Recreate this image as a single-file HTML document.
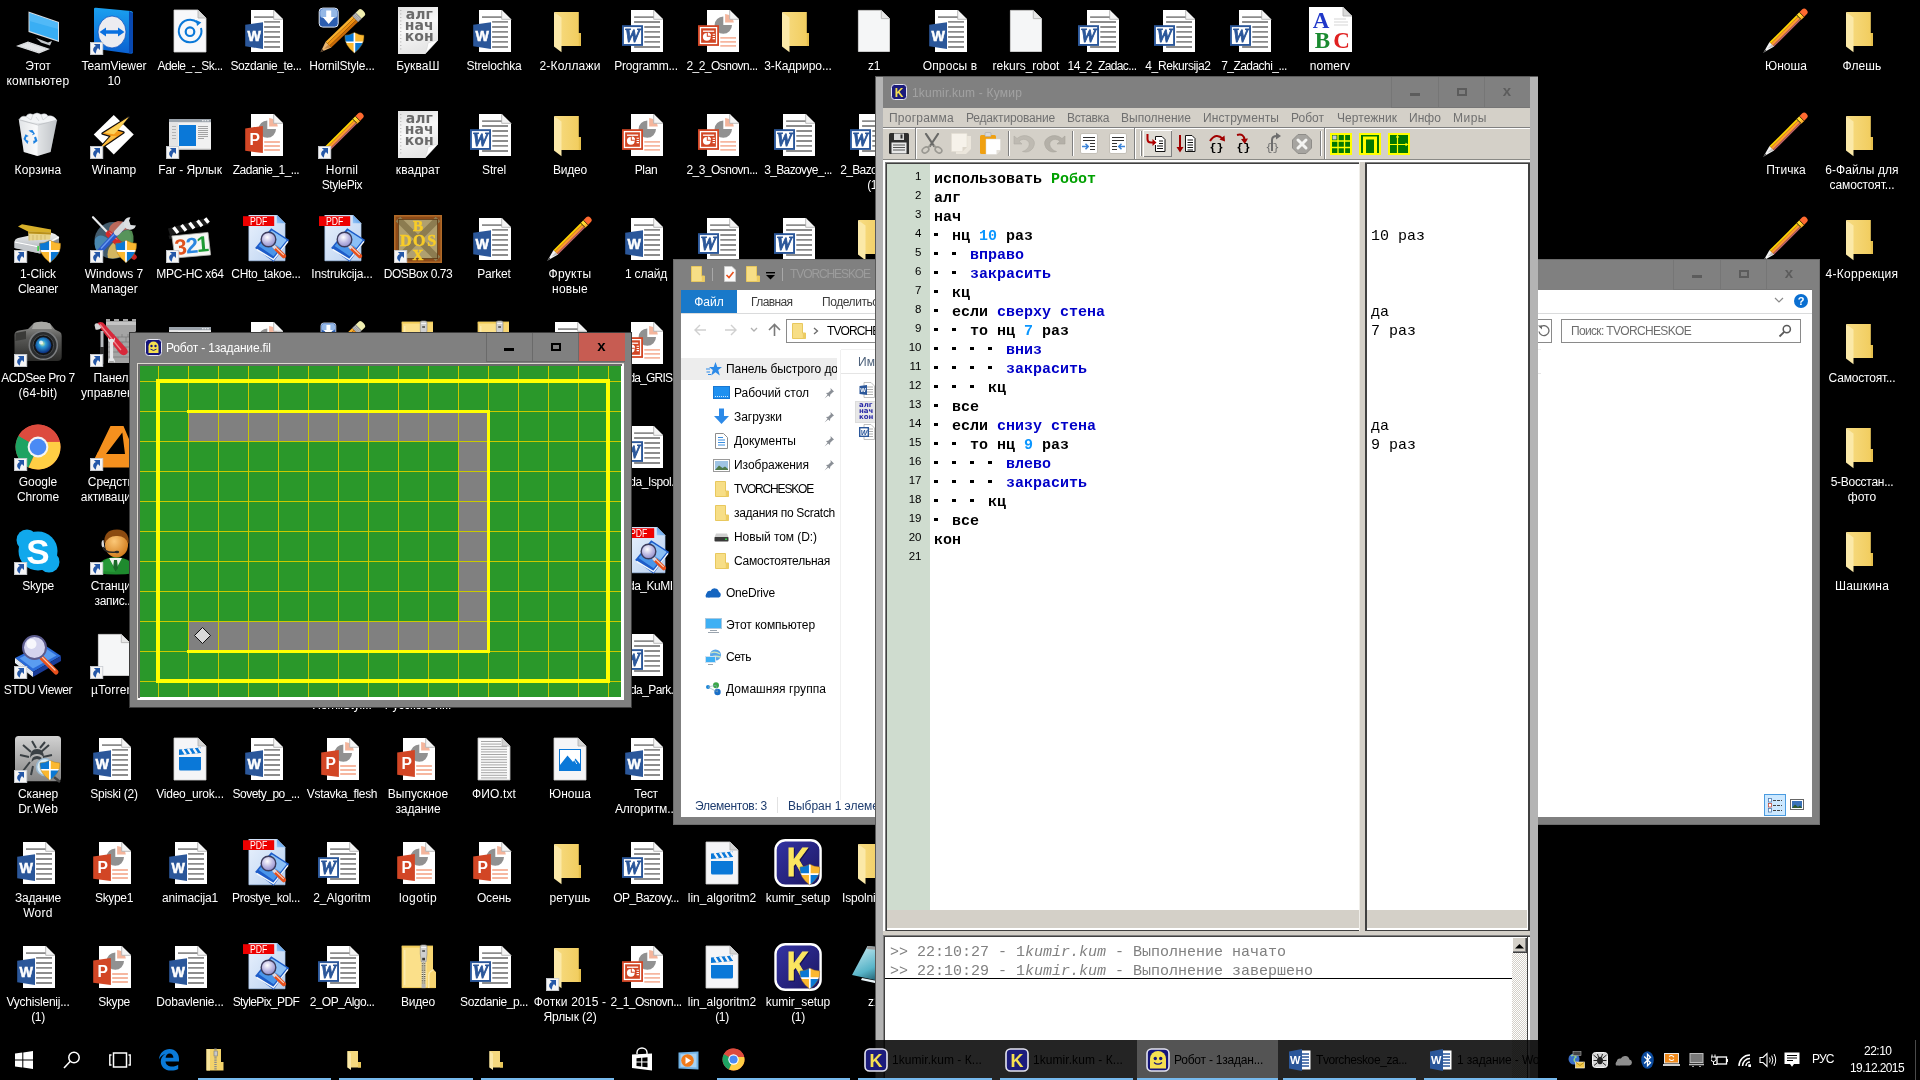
<!DOCTYPE html><html lang="ru"><head><meta charset="utf-8"><title>Desktop</title><style>
html,body{margin:0;padding:0}
body{width:1920px;height:1080px;background:#000;overflow:hidden;position:relative;font-family:"Liberation Sans",sans-serif;font-size:12px}
.lb{position:absolute;width:100px;text-align:center;color:#fff;font-size:12px;line-height:15px;white-space:nowrap;text-shadow:0 1px 1px #000}
svg{display:block;overflow:hidden}
</style></head><body><div id="root" style="position:absolute;left:0;top:0;width:1920px;height:1080px;will-change:transform;overflow:hidden"><div id="desktop"><svg style="position:absolute;left:14px;top:7px" width="48" height="48" viewBox="0 0 48 48"><path d="M14.5 4.5L45 15V35L14.5 25Z" fill="#d8dce0"/><path d="M15.5 6L44 15.8V33.5L15.5 24Z" fill="#39aef4"/><path d="M15.5 6L44 15.8V22L15.5 14Z" fill="#62c0f8" opacity="0.6"/><path d="M22 31L34 35.5L38 34L36 38.5L27 35.5Z" fill="#c4c8cc"/><path d="M2 39L14 34.5L36 42L25 46.5Z" fill="#e4e6e8"/><path d="M4.5 39L14 35.6L33.5 42L25 45.4Z" fill="none" stroke="#b4b8bc" stroke-width="0.6" stroke-dasharray="1.2 0.8"/></svg><div class="lb" style="left:-12px;top:59px;letter-spacing:-0.155px">Этот</div><div class="lb" style="left:-12px;top:74px;letter-spacing:0.288px">компьютер</div><svg style="position:absolute;left:90px;top:7px" width="48" height="48" viewBox="0 0 48 48"><defs><linearGradient id="tv1" x1="0" y1="0" x2="0" y2="1"><stop offset="0" stop-color="#1aa0f0"/><stop offset="1" stop-color="#0a60d0"/></linearGradient></defs><path d="M4 2Q4 0.5 6 0.8L41 4Q43 4.3 43 6V45Q43 47 41 46.7L7 42Q4 41.6 4 39Z" fill="url(#tv1)"/><path d="M39 4L43 6V45L39 46.5Z" fill="#0848b0"/><ellipse cx="22" cy="25" rx="14" ry="16" fill="#ececf0" stroke="#0a50c0" stroke-width="0.8"/><path d="M9.5 25L16 20.5V23.3H28V20.5L34.5 25L28 29.5V26.7H16V29.5Z" fill="#0a70e0"/><rect x="0.4" y="35.4" width="12.4" height="12.4" fill="#f5f5f5" stroke="#c9ccd2" stroke-width="0.8"/><path d="M3.9 37.1H10V43L7.9 40.9Q5.9 42.6 5.7 46.8Q1.4 43.4 4.2 40Q4.9 39.3 5.9 38.9Z" fill="#2558a8"/></svg><div class="lb" style="left:64px;top:59px;letter-spacing:-0.104px">TeamViewer</div><div class="lb" style="left:64px;top:74px;letter-spacing:-0.206px">10</div><svg style="position:absolute;left:166px;top:7px" width="48" height="48" viewBox="0 0 48 48"><path d="M8 3H32L40 11V45H8Z" fill="#f8f8fa" stroke="#d4d4d4" stroke-width="0.8"/><path d="M32 3V11H40Z" fill="#d8d8d8"/><path d="M32 3V11H40" fill="none" stroke="#b4b4b4" stroke-width="0.9"/><path d="M31.5 15.5A11.3 11.3 0 1 0 35 21" stroke="#0a78d8" stroke-width="2" fill="none"/><circle cx="24" cy="24.7" r="4.3" stroke="#0a78d8" stroke-width="2.2" fill="none"/><path d="M30 13L35.3 15.6L31 19Z" fill="#0a78d8"/></svg><div class="lb" style="left:140px;top:59px;letter-spacing:-0.529px">Adele_-_Sk...</div><svg style="position:absolute;left:242px;top:7px" width="48" height="48" viewBox="0 0 48 48"><path d="M9 3H31.7L41 12.3V45H9Z" fill="#fff"/><path d="M31.7 3V12.3H41Z" fill="#f4f4f4"/><path d="M31.7 3V12.3H41" fill="none" stroke="#b4b4b4" stroke-width="0.9"/><path d="M12 10.1H31.6" stroke="#8c8c8c" stroke-width="1.8"/><path d="M22.1 14.9H38M22.1 20H38M22.1 24.9H38M22.1 30H38M22.1 34.9H38M22.1 40H38" stroke="#8c8c8c" stroke-width="1.8"/><path d="M3.2 17.8L21 15.2V41.9L3.2 39.3Z" fill="#2b579a"/><text x="12.25" y="33.8" font-family="Liberation Sans,sans-serif" font-weight="bold" font-size="14.2" fill="#fff" stroke="#fff" stroke-width="0.5" text-anchor="middle">W</text></svg><div class="lb" style="left:216px;top:59px;letter-spacing:-0.401px">Sozdanie_te...</div><svg style="position:absolute;left:318px;top:7px" width="48" height="48" viewBox="0 0 48 48"><g transform="translate(2.5,45.2) rotate(-43.8)"><path d="M0 0L11 -4.1V4.1Z" fill="#eab672"/><path d="M5 0L11 0V4.1Z" fill="#c88a48"/><path d="M0 0L3.4 -1.25V1.25Z" fill="#3a2a20"/><rect x="11" y="-4.1" width="37" height="2.6" fill="#f8b030"/><rect x="11" y="-1.5" width="37" height="3" fill="#f09010"/><rect x="11" y="1.5" width="37" height="2.6" fill="#c86a08"/><rect x="48" y="-4.2" width="5" height="8.4" fill="#c4c4c4"/><path d="M49 -4.2V4.2M50.5 -4.2V4.2M52 -4.2V4.2" stroke="#777" stroke-width="0.6"/><path d="M53 -4.2H57Q59.5 -4.2 59.5 0Q59.5 4.2 57 4.2H53Z" fill="#f0eeb0"/></g><g transform="translate(26.4,25.2) scale(0.9090909090909091,0.9130434782608695)"><defs><clipPath id="sh2"><path d="M11 0.3Q6 3.3 0.6 3.3Q-0.6 14 11 22.7Q22.6 14 21.4 3.3Q16 3.3 11 0.3Z"/></clipPath></defs><g clip-path="url(#sh2)"><rect x="-1" y="-1" width="12" height="12" fill="#0a78d4"/><rect x="11" y="-1" width="12" height="12" fill="#fbb830"/><rect x="-1" y="11" width="12" height="13" fill="#fbb830"/><rect x="11" y="11" width="12" height="13" fill="#0a78d4"/><path d="M11 -1V24M-1 11H23" stroke="#fff" stroke-width="1.8"/></g><path d="M11 0.3Q6 3.3 0.6 3.3Q-0.6 14 11 22.7Q22.6 14 21.4 3.3Q16 3.3 11 0.3Z" fill="none" stroke="#a87818" stroke-width="0.6" opacity="0.8"/></g><g transform="translate(0.7,0.6)"><rect x="0.5" y="0.5" width="19" height="19" rx="3.5" fill="#2c5eb0" stroke="#e4ecf8" stroke-width="1"/><rect x="1.5" y="1.5" width="17" height="9" rx="3" fill="#a8c8f0" opacity="0.85"/><path d="M7.5 3H12.5V9.5H16L10 16.5L4 9.5H7.5Z" fill="#fff"/></g></svg><div class="lb" style="left:292px;top:59px;letter-spacing:-0.175px">HornilStyle...</div><svg style="position:absolute;left:394px;top:7px" width="48" height="48" viewBox="0 0 48 48"><defs><linearGradient id="kg3" x1="0" y1="0" x2="0.3" y2="1"><stop offset="0" stop-color="#e2e2e2"/><stop offset="0.5" stop-color="#f8f8f8"/><stop offset="1" stop-color="#e6e6e6"/></linearGradient></defs><path d="M4 0H44V33L31 47H4Z" fill="url(#kg3)"/><path d="M44 33Q36 35 34 36Q33.5 41 31 47Z" fill="#fff" stroke="#cfcfcf" stroke-width="0.5"/><path d="M6.8 3V45" stroke="#9a9a9a" stroke-width="0.9" stroke-dasharray="0.9 2.6"/><text x="25.2" y="11.6" font-family="DejaVu Sans,sans-serif" font-weight="bold" font-size="14" fill="#6a6a6a" text-anchor="middle">алг</text><text x="25.2" y="22.85" font-family="DejaVu Sans,sans-serif" font-weight="bold" font-size="14" fill="#6a6a6a" text-anchor="middle">нач</text><text x="25.2" y="34.1" font-family="DejaVu Sans,sans-serif" font-weight="bold" font-size="14" fill="#6a6a6a" text-anchor="middle">кон</text></svg><div class="lb" style="left:368px;top:59px;letter-spacing:0.097px">БукваШ</div><svg style="position:absolute;left:470px;top:7px" width="48" height="48" viewBox="0 0 48 48"><path d="M9 3H31.7L41 12.3V45H9Z" fill="#fff"/><path d="M31.7 3V12.3H41Z" fill="#f4f4f4"/><path d="M31.7 3V12.3H41" fill="none" stroke="#b4b4b4" stroke-width="0.9"/><path d="M12 10.1H31.6" stroke="#8c8c8c" stroke-width="1.8"/><path d="M22.1 14.9H38M22.1 20H38M22.1 24.9H38M22.1 30H38M22.1 34.9H38M22.1 40H38" stroke="#8c8c8c" stroke-width="1.8"/><path d="M3.2 17.8L21 15.2V41.9L3.2 39.3Z" fill="#2b579a"/><text x="12.25" y="33.8" font-family="Liberation Sans,sans-serif" font-weight="bold" font-size="14.2" fill="#fff" stroke="#fff" stroke-width="0.5" text-anchor="middle">W</text></svg><div class="lb" style="left:444px;top:59px;letter-spacing:-0.146px">Strelochka</div><svg style="position:absolute;left:546px;top:7px" width="48" height="48" viewBox="0 0 48 48"><defs><linearGradient id="fg4" x1="0" x2="1"><stop offset="0" stop-color="#f7dc84"/><stop offset="1" stop-color="#f1cc5c"/></linearGradient></defs><path d="M8 5H32.8V26H35V39H15V12Z" fill="url(#fg4)"/><path d="M32.8 26H35V39H32.8Z" fill="#e6c04e"/><path d="M8 5L15.5 10.5V45.3L8 39.5Z" fill="#fbe9a8"/></svg><div class="lb" style="left:520px;top:59px;letter-spacing:0.177px">2-Коллажи</div><svg style="position:absolute;left:622px;top:7px" width="48" height="48" viewBox="0 0 48 48"><path d="M9 3H31.7L41 12.3V45H9Z" fill="#fff"/><path d="M31.7 3V12.3H41Z" fill="#f4f4f4"/><path d="M31.7 3V12.3H41" fill="none" stroke="#b4b4b4" stroke-width="0.9"/><path d="M12.1 10.1H31.6M12.1 15H38M22.3 20H38M22.3 24.9H38M22.3 30H38M22.3 34.9H38M12.1 40H38" stroke="#8c8c8c" stroke-width="1.8"/><rect x="0.95" y="19.15" width="19.1" height="18.8" fill="#fff" stroke="#2b579a" stroke-width="1.9"/><text x="10.3" y="34.5" font-family="Liberation Serif,serif" font-weight="bold" font-style="italic" font-size="18" fill="#2b579a" stroke="#2b579a" stroke-width="0.8" text-anchor="middle">W</text></svg><div class="lb" style="left:596px;top:59px;letter-spacing:-0.206px">Programm...</div><svg style="position:absolute;left:698px;top:7px" width="48" height="48" viewBox="0 0 48 48"><path d="M9 3H31.7L41 12.3V45H9Z" fill="#fff"/><path d="M25.3 18.1V9.4A8.7 8.7 0 1 0 34 18.1Z" fill="#919191"/><path d="M27.1 15.6V6.9A8.7 8.7 0 0 1 35.8 15.6Z" fill="#f4b59c"/><path d="M31.7 3V12.3H41Z" fill="#f4f4f4"/><path d="M31.7 3V12.3H41" fill="none" stroke="#b4b4b4" stroke-width="0.9"/><path d="M22.3 30.9H38M22.3 34.9H38M22.3 38.9H38" stroke="#f6b7a0" stroke-width="1.8"/><rect x="0" y="18.2" width="21" height="20.7" fill="#d24625"/><rect x="2.45" y="20.65" width="16.1" height="15.8" fill="none" stroke="#fff" stroke-width="1.3"/><path d="M5 24.2H16.2" stroke="#fff" stroke-width="1.3"/><circle cx="8.8" cy="29.8" r="3.9" fill="#fff"/><path d="M8.8 29.8V25.9A3.9 3.9 0 0 1 12.7 29.8Z" fill="#d24625"/><path d="M9.8 28.8V25.6A3.5 3.5 0 0 1 13.1 28.8Z" fill="#fff"/><path d="M14.6 27.3H17M14.6 29.5H17M14.6 31.6H17" stroke="#fff" stroke-width="1.1"/></svg><div class="lb" style="left:672px;top:59px;letter-spacing:-0.527px">2_2_Osnovn...</div><svg style="position:absolute;left:774px;top:7px" width="48" height="48" viewBox="0 0 48 48"><defs><linearGradient id="fg5" x1="0" x2="1"><stop offset="0" stop-color="#f7dc84"/><stop offset="1" stop-color="#f1cc5c"/></linearGradient></defs><path d="M8 5H32.8V26H35V39H15V12Z" fill="url(#fg5)"/><path d="M32.8 26H35V39H32.8Z" fill="#e6c04e"/><path d="M8 5L15.5 10.5V45.3L8 39.5Z" fill="#fbe9a8"/></svg><div class="lb" style="left:748px;top:59px;letter-spacing:-0.041px">3-Кадриро...</div><svg style="position:absolute;left:850px;top:7px" width="48" height="48" viewBox="0 0 48 48"><path d="M8.4 3.4H31.3L39.5 11.6V44.5H8.4Z" fill="#f5f6f7" stroke="#dedede" stroke-width="0.8"/><path d="M31.3 3.4V11.6H39.5Z" fill="#e6e6e6"/><path d="M31.3 3.4V11.6H39.5" fill="none" stroke="#b4b4b4" stroke-width="0.9"/></svg><div class="lb" style="left:824px;top:59px;letter-spacing:-0.385px">z1</div><svg style="position:absolute;left:926px;top:7px" width="48" height="48" viewBox="0 0 48 48"><path d="M9 3H31.7L41 12.3V45H9Z" fill="#fff"/><path d="M31.7 3V12.3H41Z" fill="#f4f4f4"/><path d="M31.7 3V12.3H41" fill="none" stroke="#b4b4b4" stroke-width="0.9"/><path d="M12 10.1H31.6" stroke="#8c8c8c" stroke-width="1.8"/><path d="M22.1 14.9H38M22.1 20H38M22.1 24.9H38M22.1 30H38M22.1 34.9H38M22.1 40H38" stroke="#8c8c8c" stroke-width="1.8"/><path d="M3.2 17.8L21 15.2V41.9L3.2 39.3Z" fill="#2b579a"/><text x="12.25" y="33.8" font-family="Liberation Sans,sans-serif" font-weight="bold" font-size="14.2" fill="#fff" stroke="#fff" stroke-width="0.5" text-anchor="middle">W</text></svg><div class="lb" style="left:900px;top:59px;letter-spacing:0.098px">Опросы в</div><div class="lb" style="left:900px;top:74px;letter-spacing:-0.027px">Google</div><svg style="position:absolute;left:1002px;top:7px" width="48" height="48" viewBox="0 0 48 48"><path d="M8.4 3.4H31.3L39.5 11.6V44.5H8.4Z" fill="#f5f6f7" stroke="#dedede" stroke-width="0.8"/><path d="M31.3 3.4V11.6H39.5Z" fill="#e6e6e6"/><path d="M31.3 3.4V11.6H39.5" fill="none" stroke="#b4b4b4" stroke-width="0.9"/></svg><div class="lb" style="left:976px;top:59px;letter-spacing:-0.046px">rekurs_robot</div><svg style="position:absolute;left:1078px;top:7px" width="48" height="48" viewBox="0 0 48 48"><path d="M9 3H31.7L41 12.3V45H9Z" fill="#fff"/><path d="M31.7 3V12.3H41Z" fill="#f4f4f4"/><path d="M31.7 3V12.3H41" fill="none" stroke="#b4b4b4" stroke-width="0.9"/><path d="M12.1 10.1H31.6M12.1 15H38M22.3 20H38M22.3 24.9H38M22.3 30H38M22.3 34.9H38M12.1 40H38" stroke="#8c8c8c" stroke-width="1.8"/><rect x="0.95" y="19.15" width="19.1" height="18.8" fill="#fff" stroke="#2b579a" stroke-width="1.9"/><text x="10.3" y="34.5" font-family="Liberation Serif,serif" font-weight="bold" font-style="italic" font-size="18" fill="#2b579a" stroke="#2b579a" stroke-width="0.8" text-anchor="middle">W</text></svg><div class="lb" style="left:1052px;top:59px;letter-spacing:-0.607px">14_2_Zadac...</div><svg style="position:absolute;left:1154px;top:7px" width="48" height="48" viewBox="0 0 48 48"><path d="M9 3H31.7L41 12.3V45H9Z" fill="#fff"/><path d="M31.7 3V12.3H41Z" fill="#f4f4f4"/><path d="M31.7 3V12.3H41" fill="none" stroke="#b4b4b4" stroke-width="0.9"/><path d="M12.1 10.1H31.6M12.1 15H38M22.3 20H38M22.3 24.9H38M22.3 30H38M22.3 34.9H38M12.1 40H38" stroke="#8c8c8c" stroke-width="1.8"/><rect x="0.95" y="19.15" width="19.1" height="18.8" fill="#fff" stroke="#2b579a" stroke-width="1.9"/><text x="10.3" y="34.5" font-family="Liberation Serif,serif" font-weight="bold" font-style="italic" font-size="18" fill="#2b579a" stroke="#2b579a" stroke-width="0.8" text-anchor="middle">W</text></svg><div class="lb" style="left:1128px;top:59px;letter-spacing:-0.394px">4_Rekursija2</div><div class="lb" style="left:1128px;top:74px;letter-spacing:-0.317px">(1)</div><svg style="position:absolute;left:1230px;top:7px" width="48" height="48" viewBox="0 0 48 48"><path d="M9 3H31.7L41 12.3V45H9Z" fill="#fff"/><path d="M31.7 3V12.3H41Z" fill="#f4f4f4"/><path d="M31.7 3V12.3H41" fill="none" stroke="#b4b4b4" stroke-width="0.9"/><path d="M12.1 10.1H31.6M12.1 15H38M22.3 20H38M22.3 24.9H38M22.3 30H38M22.3 34.9H38M12.1 40H38" stroke="#8c8c8c" stroke-width="1.8"/><rect x="0.95" y="19.15" width="19.1" height="18.8" fill="#fff" stroke="#2b579a" stroke-width="1.9"/><text x="10.3" y="34.5" font-family="Liberation Serif,serif" font-weight="bold" font-style="italic" font-size="18" fill="#2b579a" stroke="#2b579a" stroke-width="0.8" text-anchor="middle">W</text></svg><div class="lb" style="left:1204px;top:59px;letter-spacing:-0.548px">7_Zadachi_...</div><svg style="position:absolute;left:1306px;top:7px" width="48" height="48" viewBox="0 0 48 48"><path d="M3 0H37L46 9V45H3Z" fill="#fff"/><path d="M37 0V9H46Z" fill="#d8d8d8"/><path d="M37 0V9H46" fill="none" stroke="#b4b4b4" stroke-width="0.9"/><path d="M28 12H40M28 15H42M28 18H42" stroke="#d0d0d0" stroke-width="0.9"/><text x="15" y="20.7" font-family="Liberation Serif,serif" font-weight="bold" font-size="23" fill="#2038c8" text-anchor="middle">A</text><text x="16.5" y="41" font-family="Liberation Serif,serif" font-weight="bold" font-size="23" fill="#1a8a30" text-anchor="middle">B</text><text x="35.5" y="41" font-family="Liberation Serif,serif" font-weight="bold" font-size="23" fill="#e02020" text-anchor="middle">C</text></svg><div class="lb" style="left:1280px;top:59px;letter-spacing:0.057px">nomerv</div><svg style="position:absolute;left:1762px;top:7px" width="48" height="48" viewBox="0 0 48 48"><g transform="translate(1.3,45.8) rotate(-44.9)"><path d="M0 0L12 -3.2V3.2Z" fill="#f2f2f2"/><path d="M6 0L12 0V3.2Z" fill="#c4c4c4"/><path d="M0 0L3.6 -0.95V0.95Z" fill="#4a4a4a"/><rect x="12" y="-3.2" width="38" height="2" fill="#ffd400"/><rect x="12" y="-1.2" width="38" height="2.8" fill="#ff9a30"/><rect x="12" y="1.6" width="38" height="1.6" fill="#c8686a"/><rect x="50" y="-3.3" width="4.5" height="6.6" fill="#ffdc30"/><rect x="50" y="0.8" width="4.5" height="2.5" fill="#ffb030"/><path d="M50.4 -3.3V3.3M54.1 -3.3V3.3" stroke="#3a2a00" stroke-width="0.8"/><path d="M54.5 -3.3H58.3Q61 -3.3 61 0Q61 3.3 58.3 3.3H54.5Z" fill="#ff6a30"/></g></svg><div class="lb" style="left:1736px;top:59px;letter-spacing:0.067px">Юноша</div><svg style="position:absolute;left:1838px;top:7px" width="48" height="48" viewBox="0 0 48 48"><defs><linearGradient id="fg6" x1="0" x2="1"><stop offset="0" stop-color="#f7dc84"/><stop offset="1" stop-color="#f1cc5c"/></linearGradient></defs><path d="M8 5H32.8V26H35V39H15V12Z" fill="url(#fg6)"/><path d="M32.8 26H35V39H32.8Z" fill="#e6c04e"/><path d="M8 5L15.5 10.5V45.3L8 39.5Z" fill="#fbe9a8"/></svg><div class="lb" style="left:1812px;top:59px;letter-spacing:0.127px">Флешь</div><svg style="position:absolute;left:14px;top:111px" width="48" height="48" viewBox="0 0 48 48"><defs><linearGradient id="rb7" x1="0" x2="1"><stop offset="0" stop-color="#d2d6da"/><stop offset="0.45" stop-color="#f6f7f8"/><stop offset="1" stop-color="#c6cace"/></linearGradient></defs><path d="M4.8 8.5L43 9.2L36.6 41L23.5 45L9.8 41Z" fill="url(#rb7)"/><path d="M4.8 8.5L24 14L23.5 45L9.8 41Z" fill="#fff" opacity="0.35"/><path d="M24 14L43 9.2L36.6 41L23.5 45Z" fill="#9aa0a6" opacity="0.18"/><path d="M5 9Q7 4 12 5.5Q14 1.5 19 3.5Q23 0.5 27 3.5Q32 1.5 34 5Q40 4 42.8 9.4Q24 16 5 9Z" fill="#f2f4f6" stroke="#cdd1d5" stroke-width="0.5"/><path d="M12 5.5L17 9L19 3.5M27 3.5L29 9L34 5M22 6L25 10" stroke="#c4c8cc" stroke-width="0.6" fill="none"/><path d="M4.8 8.5L24 14L43 9.2" stroke="#b4b8bc" stroke-width="0.7" fill="none"/><g transform="translate(16,26.5)" fill="#1e82e0"><path d="M-1.5 -7L2.5 -7.5L5 -3.5L2 -2.2L3.2 -4.2L0.8 -5.2Z"/><path d="M6 -1L7.5 3.5L3.5 6.5L3.2 3.3L5 3L4 0Z"/><path d="M-6.5 1.5L-4.5 -3.2L-1.3 -1.5L-3.8 -0.2L-4.2 2L-1.5 3.5L-2.5 6.5Z"/></g></svg><div class="lb" style="left:-12px;top:163px;letter-spacing:0.17px">Корзина</div><svg style="position:absolute;left:90px;top:111px" width="48" height="48" viewBox="0 0 48 48"><path d="M23.75 4L43.75 23.5L23.75 43.6L3.75 23.6Z" fill="#fff"/><path d="M38.8 6.1L12.5 22.5L21 25L8.75 38.6L33.5 21.5L25.5 19Z" fill="#f5a21a" stroke="#111" stroke-width="2.4" stroke-linejoin="round"/><path d="M38.8 6.1L12.5 22.5L21 25L8.75 38.6L33.5 21.5L25.5 19Z" fill="#f59a18"/><path d="M38.8 6.1L14.5 22L24 23.2L30 17Z" fill="#fdd25a"/><path d="M21 25L8.75 38.6L27 25Z" fill="#fbc044"/><rect x="0.4" y="35.4" width="12.4" height="12.4" fill="#f5f5f5" stroke="#c9ccd2" stroke-width="0.8"/><path d="M3.9 37.1H10V43L7.9 40.9Q5.9 42.6 5.7 46.8Q1.4 43.4 4.2 40Q4.9 39.3 5.9 38.9Z" fill="#2558a8"/></svg><div class="lb" style="left:64px;top:163px;letter-spacing:0.065px">Winamp</div><svg style="position:absolute;left:166px;top:111px" width="48" height="48" viewBox="0 0 48 48"><rect x="3" y="8" width="42" height="30.6" fill="#f1f1f1"/><rect x="3" y="8" width="42" height="3.2" fill="#9aa2aa"/><path d="M36 9.6H43" stroke="#e4e6e8" stroke-width="1.2" stroke-dasharray="1.6 1"/><rect x="3" y="11.2" width="9" height="27.4" fill="#e4e4e4"/><rect x="13" y="14" width="17" height="21" fill="#0a78d8"/><path d="M3.5 38.1H44.5" stroke="#c8c8c8" stroke-width="1"/><path d="M32 15.5H42M32 17.5H42M32 19.5H42M32 21.5H42M32 23.5H42M32 25.5H42M32 27.5H38" stroke="#9a9a9a" stroke-width="0.9"/><path d="M6 15.5H10M6 18.5H10M6 21.5H10M6 24.5H10M6 27.5H10" stroke="#b4b4b4" stroke-width="1"/><rect x="0.4" y="35.4" width="12.4" height="12.4" fill="#f5f5f5" stroke="#c9ccd2" stroke-width="0.8"/><path d="M3.9 37.1H10V43L7.9 40.9Q5.9 42.6 5.7 46.8Q1.4 43.4 4.2 40Q4.9 39.3 5.9 38.9Z" fill="#2558a8"/></svg><div class="lb" style="left:140px;top:163px;letter-spacing:-0.073px">Far - Ярлык</div><svg style="position:absolute;left:242px;top:111px" width="48" height="48" viewBox="0 0 48 48"><path d="M9 3H31.7L41 12.3V45H9Z" fill="#fff"/><path d="M25.3 18.1V9.4A8.7 8.7 0 1 0 34 18.1Z" fill="#919191"/><path d="M27.1 15.6V6.9A8.7 8.7 0 0 1 35.8 15.6Z" fill="#f4b59c"/><path d="M31.7 3V12.3H41Z" fill="#f4f4f4"/><path d="M31.7 3V12.3H41" fill="none" stroke="#b4b4b4" stroke-width="0.9"/><path d="M22.2 31H37.9M22.2 35H37.9M22.2 39H37.9" stroke="#f6b7a0" stroke-width="1.8"/><path d="M3.2 17.4L20.9 14.9V42.1L3.2 39.8Z" fill="#d24625"/><text x="12.6" y="33.9" font-family="Liberation Sans,sans-serif" font-weight="bold" font-size="15.6" fill="#fff" text-anchor="middle">P</text></svg><div class="lb" style="left:216px;top:163px;letter-spacing:-0.543px">Zadanie_1_...</div><svg style="position:absolute;left:318px;top:111px" width="48" height="48" viewBox="0 0 48 48"><g transform="translate(1.3,45.8) rotate(-44.9)"><path d="M0 0L12 -3.2V3.2Z" fill="#f2f2f2"/><path d="M6 0L12 0V3.2Z" fill="#c4c4c4"/><path d="M0 0L3.6 -0.95V0.95Z" fill="#4a4a4a"/><rect x="12" y="-3.2" width="38" height="2" fill="#ffd400"/><rect x="12" y="-1.2" width="38" height="2.8" fill="#ff9a30"/><rect x="12" y="1.6" width="38" height="1.6" fill="#c8686a"/><rect x="50" y="-3.3" width="4.5" height="6.6" fill="#ffdc30"/><rect x="50" y="0.8" width="4.5" height="2.5" fill="#ffb030"/><path d="M50.4 -3.3V3.3M54.1 -3.3V3.3" stroke="#3a2a00" stroke-width="0.8"/><path d="M54.5 -3.3H58.3Q61 -3.3 61 0Q61 3.3 58.3 3.3H54.5Z" fill="#ff6a30"/></g><rect x="0.4" y="35.4" width="12.4" height="12.4" fill="#f5f5f5" stroke="#c9ccd2" stroke-width="0.8"/><path d="M3.9 37.1H10V43L7.9 40.9Q5.9 42.6 5.7 46.8Q1.4 43.4 4.2 40Q4.9 39.3 5.9 38.9Z" fill="#2558a8"/></svg><div class="lb" style="left:292px;top:163px;letter-spacing:0.164px">Hornil</div><div class="lb" style="left:292px;top:178px;letter-spacing:-0.348px">StylePix</div><svg style="position:absolute;left:394px;top:111px" width="48" height="48" viewBox="0 0 48 48"><defs><linearGradient id="kg8" x1="0" y1="0" x2="0.3" y2="1"><stop offset="0" stop-color="#e2e2e2"/><stop offset="0.5" stop-color="#f8f8f8"/><stop offset="1" stop-color="#e6e6e6"/></linearGradient></defs><path d="M4 0H44V33L31 47H4Z" fill="url(#kg8)"/><path d="M44 33Q36 35 34 36Q33.5 41 31 47Z" fill="#fff" stroke="#cfcfcf" stroke-width="0.5"/><path d="M6.8 3V45" stroke="#9a9a9a" stroke-width="0.9" stroke-dasharray="0.9 2.6"/><text x="25.2" y="11.6" font-family="DejaVu Sans,sans-serif" font-weight="bold" font-size="14" fill="#6a6a6a" text-anchor="middle">алг</text><text x="25.2" y="22.85" font-family="DejaVu Sans,sans-serif" font-weight="bold" font-size="14" fill="#6a6a6a" text-anchor="middle">нач</text><text x="25.2" y="34.1" font-family="DejaVu Sans,sans-serif" font-weight="bold" font-size="14" fill="#6a6a6a" text-anchor="middle">кон</text></svg><div class="lb" style="left:368px;top:163px;letter-spacing:0.095px">квадрат</div><svg style="position:absolute;left:470px;top:111px" width="48" height="48" viewBox="0 0 48 48"><path d="M9 3H31.7L41 12.3V45H9Z" fill="#fff"/><path d="M31.7 3V12.3H41Z" fill="#f4f4f4"/><path d="M31.7 3V12.3H41" fill="none" stroke="#b4b4b4" stroke-width="0.9"/><path d="M12.1 10.1H31.6M12.1 15H38M22.3 20H38M22.3 24.9H38M22.3 30H38M22.3 34.9H38M12.1 40H38" stroke="#8c8c8c" stroke-width="1.8"/><rect x="0.95" y="19.15" width="19.1" height="18.8" fill="#fff" stroke="#2b579a" stroke-width="1.9"/><text x="10.3" y="34.5" font-family="Liberation Serif,serif" font-weight="bold" font-style="italic" font-size="18" fill="#2b579a" stroke="#2b579a" stroke-width="0.8" text-anchor="middle">W</text></svg><div class="lb" style="left:444px;top:163px;letter-spacing:-0.176px">Strel</div><svg style="position:absolute;left:546px;top:111px" width="48" height="48" viewBox="0 0 48 48"><defs><linearGradient id="fg9" x1="0" x2="1"><stop offset="0" stop-color="#f7dc84"/><stop offset="1" stop-color="#f1cc5c"/></linearGradient></defs><path d="M8 5H32.8V26H35V39H15V12Z" fill="url(#fg9)"/><path d="M32.8 26H35V39H32.8Z" fill="#e6c04e"/><path d="M8 5L15.5 10.5V45.3L8 39.5Z" fill="#fbe9a8"/></svg><div class="lb" style="left:520px;top:163px;letter-spacing:-0.167px">Видео</div><svg style="position:absolute;left:622px;top:111px" width="48" height="48" viewBox="0 0 48 48"><path d="M9 3H31.7L41 12.3V45H9Z" fill="#fff"/><path d="M25.3 18.1V9.4A8.7 8.7 0 1 0 34 18.1Z" fill="#919191"/><path d="M27.1 15.6V6.9A8.7 8.7 0 0 1 35.8 15.6Z" fill="#f4b59c"/><path d="M31.7 3V12.3H41Z" fill="#f4f4f4"/><path d="M31.7 3V12.3H41" fill="none" stroke="#b4b4b4" stroke-width="0.9"/><path d="M22.3 30.9H38M22.3 34.9H38M22.3 38.9H38" stroke="#f6b7a0" stroke-width="1.8"/><rect x="0" y="18.2" width="21" height="20.7" fill="#d24625"/><rect x="2.45" y="20.65" width="16.1" height="15.8" fill="none" stroke="#fff" stroke-width="1.3"/><path d="M5 24.2H16.2" stroke="#fff" stroke-width="1.3"/><circle cx="8.8" cy="29.8" r="3.9" fill="#fff"/><path d="M8.8 29.8V25.9A3.9 3.9 0 0 1 12.7 29.8Z" fill="#d24625"/><path d="M9.8 28.8V25.6A3.5 3.5 0 0 1 13.1 28.8Z" fill="#fff"/><path d="M14.6 27.3H17M14.6 29.5H17M14.6 31.6H17" stroke="#fff" stroke-width="1.1"/></svg><div class="lb" style="left:596px;top:163px;letter-spacing:-0.373px">Plan</div><svg style="position:absolute;left:698px;top:111px" width="48" height="48" viewBox="0 0 48 48"><path d="M9 3H31.7L41 12.3V45H9Z" fill="#fff"/><path d="M25.3 18.1V9.4A8.7 8.7 0 1 0 34 18.1Z" fill="#919191"/><path d="M27.1 15.6V6.9A8.7 8.7 0 0 1 35.8 15.6Z" fill="#f4b59c"/><path d="M31.7 3V12.3H41Z" fill="#f4f4f4"/><path d="M31.7 3V12.3H41" fill="none" stroke="#b4b4b4" stroke-width="0.9"/><path d="M22.3 30.9H38M22.3 34.9H38M22.3 38.9H38" stroke="#f6b7a0" stroke-width="1.8"/><rect x="0" y="18.2" width="21" height="20.7" fill="#d24625"/><rect x="2.45" y="20.65" width="16.1" height="15.8" fill="none" stroke="#fff" stroke-width="1.3"/><path d="M5 24.2H16.2" stroke="#fff" stroke-width="1.3"/><circle cx="8.8" cy="29.8" r="3.9" fill="#fff"/><path d="M8.8 29.8V25.9A3.9 3.9 0 0 1 12.7 29.8Z" fill="#d24625"/><path d="M9.8 28.8V25.6A3.5 3.5 0 0 1 13.1 28.8Z" fill="#fff"/><path d="M14.6 27.3H17M14.6 29.5H17M14.6 31.6H17" stroke="#fff" stroke-width="1.1"/></svg><div class="lb" style="left:672px;top:163px;letter-spacing:-0.527px">2_3_Osnovn...</div><svg style="position:absolute;left:774px;top:111px" width="48" height="48" viewBox="0 0 48 48"><path d="M9 3H31.7L41 12.3V45H9Z" fill="#fff"/><path d="M31.7 3V12.3H41Z" fill="#f4f4f4"/><path d="M31.7 3V12.3H41" fill="none" stroke="#b4b4b4" stroke-width="0.9"/><path d="M12.1 10.1H31.6M12.1 15H38M22.3 20H38M22.3 24.9H38M22.3 30H38M22.3 34.9H38M12.1 40H38" stroke="#8c8c8c" stroke-width="1.8"/><rect x="0.95" y="19.15" width="19.1" height="18.8" fill="#fff" stroke="#2b579a" stroke-width="1.9"/><text x="10.3" y="34.5" font-family="Liberation Serif,serif" font-weight="bold" font-style="italic" font-size="18" fill="#2b579a" stroke="#2b579a" stroke-width="0.8" text-anchor="middle">W</text></svg><div class="lb" style="left:748px;top:163px;letter-spacing:-0.656px">3_Bazovye_...</div><svg style="position:absolute;left:850px;top:111px" width="48" height="48" viewBox="0 0 48 48"><path d="M9 3H31.7L41 12.3V45H9Z" fill="#fff"/><path d="M31.7 3V12.3H41Z" fill="#f4f4f4"/><path d="M31.7 3V12.3H41" fill="none" stroke="#b4b4b4" stroke-width="0.9"/><path d="M12.1 10.1H31.6M12.1 15H38M22.3 20H38M22.3 24.9H38M22.3 30H38M22.3 34.9H38M12.1 40H38" stroke="#8c8c8c" stroke-width="1.8"/><rect x="0.95" y="19.15" width="19.1" height="18.8" fill="#fff" stroke="#2b579a" stroke-width="1.9"/><text x="10.3" y="34.5" font-family="Liberation Serif,serif" font-weight="bold" font-style="italic" font-size="18" fill="#2b579a" stroke="#2b579a" stroke-width="0.8" text-anchor="middle">W</text></svg><div class="lb" style="left:824px;top:163px;letter-spacing:-0.656px">2_Bazovye_...</div><div class="lb" style="left:824px;top:178px;letter-spacing:-0.317px">(1)</div><svg style="position:absolute;left:1762px;top:111px" width="48" height="48" viewBox="0 0 48 48"><g transform="translate(1.3,45.8) rotate(-44.9)"><path d="M0 0L12 -3.2V3.2Z" fill="#f2f2f2"/><path d="M6 0L12 0V3.2Z" fill="#c4c4c4"/><path d="M0 0L3.6 -0.95V0.95Z" fill="#4a4a4a"/><rect x="12" y="-3.2" width="38" height="2" fill="#ffd400"/><rect x="12" y="-1.2" width="38" height="2.8" fill="#ff9a30"/><rect x="12" y="1.6" width="38" height="1.6" fill="#c8686a"/><rect x="50" y="-3.3" width="4.5" height="6.6" fill="#ffdc30"/><rect x="50" y="0.8" width="4.5" height="2.5" fill="#ffb030"/><path d="M50.4 -3.3V3.3M54.1 -3.3V3.3" stroke="#3a2a00" stroke-width="0.8"/><path d="M54.5 -3.3H58.3Q61 -3.3 61 0Q61 3.3 58.3 3.3H54.5Z" fill="#ff6a30"/></g></svg><div class="lb" style="left:1736px;top:163px;letter-spacing:0.074px">Птичка</div><svg style="position:absolute;left:1838px;top:111px" width="48" height="48" viewBox="0 0 48 48"><defs><linearGradient id="fg10" x1="0" x2="1"><stop offset="0" stop-color="#f7dc84"/><stop offset="1" stop-color="#f1cc5c"/></linearGradient></defs><path d="M8 5H32.8V26H35V39H15V12Z" fill="url(#fg10)"/><path d="M32.8 26H35V39H32.8Z" fill="#e6c04e"/><path d="M8 5L15.5 10.5V45.3L8 39.5Z" fill="#fbe9a8"/></svg><div class="lb" style="left:1812px;top:163px;letter-spacing:0.065px">6-Файлы для</div><div class="lb" style="left:1812px;top:178px;letter-spacing:-0.119px">самостоят...</div><svg style="position:absolute;left:14px;top:215px" width="48" height="48" viewBox="0 0 48 48"><defs><linearGradient id="cl11" x1="0" y1="0" x2="0" y2="1"><stop offset="0" stop-color="#f4f5f6"/><stop offset="1" stop-color="#9ea4aa"/></linearGradient></defs><path d="M0.5 27Q0.5 24 4 23L30 17.5Q36 16.5 41 19L45 22V30L26 38.6L0.5 33Z" fill="url(#cl11)"/><path d="M0.5 27L26 32L45 22" stroke="#fff" stroke-width="1.2" fill="none"/><path d="M0.5 28V33L26 38.6V33Z" fill="#c4c8cc"/><path d="M26 33L45 23.5V30L26 38.6Z" fill="#8a9096"/><rect x="23.3" y="31" width="1.6" height="5" fill="#38d048"/><path d="M4 11.5L8 9.3L37 14.5V18L15 17Z" fill="#d8b02a"/><path d="M14 16.5L37 17.5L36 24.5L15 25.5Z" fill="#e8d48a"/><path d="M14 16.5L37 17.5V19.5L14 18.5Z" fill="#b8901a"/><path d="M15 20V25.5M19 20V25.3M23 20V25.1M27 20V24.9M31 20V24.7" stroke="#c8b060" stroke-width="0.7"/><g transform="translate(25,25) scale(1.0,1.0)"><defs><clipPath id="sh12"><path d="M11 0.3Q6 3.3 0.6 3.3Q-0.6 14 11 22.7Q22.6 14 21.4 3.3Q16 3.3 11 0.3Z"/></clipPath></defs><g clip-path="url(#sh12)"><rect x="-1" y="-1" width="12" height="12" fill="#0a78d4"/><rect x="11" y="-1" width="12" height="12" fill="#fbb830"/><rect x="-1" y="11" width="12" height="13" fill="#fbb830"/><rect x="11" y="11" width="12" height="13" fill="#0a78d4"/><path d="M11 -1V24M-1 11H23" stroke="#fff" stroke-width="1.8"/></g><path d="M11 0.3Q6 3.3 0.6 3.3Q-0.6 14 11 22.7Q22.6 14 21.4 3.3Q16 3.3 11 0.3Z" fill="none" stroke="#a87818" stroke-width="0.6" opacity="0.8"/></g><rect x="0.4" y="35.4" width="12.4" height="12.4" fill="#f5f5f5" stroke="#c9ccd2" stroke-width="0.8"/><path d="M3.9 37.1H10V43L7.9 40.9Q5.9 42.6 5.7 46.8Q1.4 43.4 4.2 40Q4.9 39.3 5.9 38.9Z" fill="#2558a8"/></svg><div class="lb" style="left:-12px;top:267px;letter-spacing:-0.094px">1-Click</div><div class="lb" style="left:-12px;top:282px;letter-spacing:-0.295px">Cleaner</div><svg style="position:absolute;left:90px;top:215px" width="48" height="48" viewBox="0 0 48 48"><circle cx="23" cy="25.5" r="18.5" fill="#7aa6c4" opacity="0.55"/><path d="M22 24Q14 10 28 6Q38 6 41 14Q30 14 22 24Z" fill="#c86a5a" opacity="0.9"/><path d="M24 25Q34 12 42 16Q46 26 40 34Q34 24 24 25Z" fill="#5a9a5a" opacity="0.9"/><path d="M21 26Q10 16 5 24Q3 34 10 40Q12 28 21 26Z" fill="#4a8ab4" opacity="0.95"/><path d="M23 28Q34 28 38 37Q30 45 18 43Q16 34 23 28Z" fill="#e4c060" opacity="0.9"/><path d="M3 2.2L20 20" stroke="#e8eaec" stroke-width="2.2" stroke-linecap="round"/><path d="M19 19L30 30" stroke="#d42a2a" stroke-width="6.5" stroke-linecap="round"/><path d="M30 30L44 42" stroke="#c42222" stroke-width="5.5" stroke-linecap="round"/><path d="M20 17.5L24 21.5M23 20.5L27 24.5" stroke="#f4b0b0" stroke-width="1"/><path d="M35 9L9.5 36.5" stroke="#2a5ac8" stroke-width="5.5" stroke-linecap="round"/><path d="M34 10L27 17.5" stroke="#d4d8dc" stroke-width="6" stroke-linecap="round"/><path d="M40.5 2.2A6.3 6.3 0 1 0 46 10.5L40.6 10L39 5.5Z" fill="#dcdfe2"/><path d="M11 33.5L24 19.5" stroke="#6a9af0" stroke-width="1.4"/><g transform="translate(25,25) scale(1.0,1.0)"><defs><clipPath id="sh13"><path d="M11 0.3Q6 3.3 0.6 3.3Q-0.6 14 11 22.7Q22.6 14 21.4 3.3Q16 3.3 11 0.3Z"/></clipPath></defs><g clip-path="url(#sh13)"><rect x="-1" y="-1" width="12" height="12" fill="#0a78d4"/><rect x="11" y="-1" width="12" height="12" fill="#fbb830"/><rect x="-1" y="11" width="12" height="13" fill="#fbb830"/><rect x="11" y="11" width="12" height="13" fill="#0a78d4"/><path d="M11 -1V24M-1 11H23" stroke="#fff" stroke-width="1.8"/></g><path d="M11 0.3Q6 3.3 0.6 3.3Q-0.6 14 11 22.7Q22.6 14 21.4 3.3Q16 3.3 11 0.3Z" fill="none" stroke="#a87818" stroke-width="0.6" opacity="0.8"/></g><rect x="0.4" y="35.4" width="12.4" height="12.4" fill="#f5f5f5" stroke="#c9ccd2" stroke-width="0.8"/><path d="M3.9 37.1H10V43L7.9 40.9Q5.9 42.6 5.7 46.8Q1.4 43.4 4.2 40Q4.9 39.3 5.9 38.9Z" fill="#2558a8"/></svg><div class="lb" style="left:64px;top:267px;letter-spacing:-0.02px">Windows 7</div><div class="lb" style="left:64px;top:282px;letter-spacing:-0.01px">Manager</div><svg style="position:absolute;left:166px;top:215px" width="48" height="48" viewBox="0 0 48 48"><path d="M2 13.6L41.5 2.4L43.5 9L4 20.5Z" fill="#1c1c1c"/><path d="M7.5 12.3L12 18M15.5 10L20 15.7M23.5 7.8L28 13.5M31.5 5.5L36 11.2M39 3.4L42.5 7.8" stroke="#fff" stroke-width="3.4"/><path d="M2.5 20.8L6.5 19.6L7.5 23L3.5 24.2Z" fill="#1c1c1c"/><path d="M5.9 21L42 17.4L44.6 39.9L9 43Z" fill="#f6f6f4"/><path d="M5.9 21L42 17.4L44.6 39.9L9 43Z" fill="none" stroke="#b4b4b0" stroke-width="0.8"/><g transform="rotate(-5 25 30)"><text x="14.5" y="38.5" font-family="Liberation Sans,sans-serif" font-weight="bold" font-size="22" fill="#e0521e" text-anchor="middle">3</text><text x="26" y="38" font-family="Liberation Sans,sans-serif" font-weight="bold" font-size="22" fill="#2a86e0" text-anchor="middle">2</text><text x="36.8" y="37.5" font-family="Liberation Sans,sans-serif" font-weight="bold" font-size="22" fill="#1e9a34" text-anchor="middle">1</text></g><rect x="0.4" y="35.4" width="12.4" height="12.4" fill="#f5f5f5" stroke="#c9ccd2" stroke-width="0.8"/><path d="M3.9 37.1H10V43L7.9 40.9Q5.9 42.6 5.7 46.8Q1.4 43.4 4.2 40Q4.9 39.3 5.9 38.9Z" fill="#2558a8"/></svg><div class="lb" style="left:140px;top:267px;letter-spacing:-0.327px">MPC-HC x64</div><svg style="position:absolute;left:242px;top:215px" width="48" height="48" viewBox="0 0 48 48"><defs><linearGradient id="pg14" x1="0" y1="0" x2="1" y2="1"><stop offset="0" stop-color="#eaf2fd"/><stop offset="1" stop-color="#b8d0f0"/></linearGradient><radialGradient id="pg14m" cx="0.42" cy="0.35" r="0.7"><stop offset="0" stop-color="#fff"/><stop offset="0.55" stop-color="#bcb8e2"/><stop offset="1" stop-color="#8e8ac8"/></radialGradient><linearGradient id="pg14f" x1="0" y1="1" x2="1" y2="0"><stop offset="0" stop-color="#9cc8f8"/><stop offset="1" stop-color="#3a8ae0"/></linearGradient></defs><path d="M6.9 0H34.8L43 8.2V45.75H6.9Z" fill="url(#pg14)" stroke="#a8c6ee" stroke-width="0.7"/><path d="M34.8 0V8.2H43Z" fill="url(#pg14f)"/><path d="M13.1 33.1L29.2 13.3L47.2 25.1L31.6 46.8Z" fill="#1e5cc8"/><path d="M16.6 31L29.8 15.4L44.6 25L31.6 41.2Z" fill="#4a96ea"/><path d="M29.8 15.4L44.6 25L38.4 32.8L23.4 23Z" fill="#8cc0f6"/><path d="M14.6 34.4L31.5 44.6L46 26.4" stroke="#f4f8fc" stroke-width="1.5" fill="none"/><path d="M33.4 33L41.9 41.1" stroke="#e8501c" stroke-width="4.4" stroke-linecap="round"/><path d="M33.8 32.4L41.4 39.6" stroke="#fcd4bc" stroke-width="1.2" stroke-linecap="round"/><path d="M31 30.6L33.6 33.2" stroke="#d8d8e4" stroke-width="3.4"/><circle cx="26.5" cy="24.5" r="7.3" fill="url(#pg14m)" stroke="#3c3c5c" stroke-width="1.4"/><rect x="1" y="1.2" width="31.2" height="9.8" fill="#ee0000"/><text x="8" y="9.8" font-family="Liberation Sans,sans-serif" font-size="10.5" fill="#fff" textLength="17.4" lengthAdjust="spacingAndGlyphs">PDF</text></svg><div class="lb" style="left:216px;top:267px;letter-spacing:-0.314px">CHto_takoe...</div><svg style="position:absolute;left:318px;top:215px" width="48" height="48" viewBox="0 0 48 48"><defs><linearGradient id="pg15" x1="0" y1="0" x2="1" y2="1"><stop offset="0" stop-color="#eaf2fd"/><stop offset="1" stop-color="#b8d0f0"/></linearGradient><radialGradient id="pg15m" cx="0.42" cy="0.35" r="0.7"><stop offset="0" stop-color="#fff"/><stop offset="0.55" stop-color="#bcb8e2"/><stop offset="1" stop-color="#8e8ac8"/></radialGradient><linearGradient id="pg15f" x1="0" y1="1" x2="1" y2="0"><stop offset="0" stop-color="#9cc8f8"/><stop offset="1" stop-color="#3a8ae0"/></linearGradient></defs><path d="M6.9 0H34.8L43 8.2V45.75H6.9Z" fill="url(#pg15)" stroke="#a8c6ee" stroke-width="0.7"/><path d="M34.8 0V8.2H43Z" fill="url(#pg15f)"/><path d="M13.1 33.1L29.2 13.3L47.2 25.1L31.6 46.8Z" fill="#1e5cc8"/><path d="M16.6 31L29.8 15.4L44.6 25L31.6 41.2Z" fill="#4a96ea"/><path d="M29.8 15.4L44.6 25L38.4 32.8L23.4 23Z" fill="#8cc0f6"/><path d="M14.6 34.4L31.5 44.6L46 26.4" stroke="#f4f8fc" stroke-width="1.5" fill="none"/><path d="M33.4 33L41.9 41.1" stroke="#e8501c" stroke-width="4.4" stroke-linecap="round"/><path d="M33.8 32.4L41.4 39.6" stroke="#fcd4bc" stroke-width="1.2" stroke-linecap="round"/><path d="M31 30.6L33.6 33.2" stroke="#d8d8e4" stroke-width="3.4"/><circle cx="26.5" cy="24.5" r="7.3" fill="url(#pg15m)" stroke="#3c3c5c" stroke-width="1.4"/><rect x="1" y="1.2" width="31.2" height="9.8" fill="#ee0000"/><text x="8" y="9.8" font-family="Liberation Sans,sans-serif" font-size="10.5" fill="#fff" textLength="17.4" lengthAdjust="spacingAndGlyphs">PDF</text></svg><div class="lb" style="left:292px;top:267px;letter-spacing:-0.191px">Instrukcija...</div><svg style="position:absolute;left:394px;top:215px" width="48" height="48" viewBox="0 0 48 48"><rect x="0" y="0" width="48" height="48" fill="#8c4a18"/><rect x="0.8" y="0.8" width="46.4" height="46.4" fill="none" stroke="#b06a28" stroke-width="1.6"/><rect x="4" y="4" width="40" height="40" fill="#b0a070"/><path d="M4 4L44 44M44 4L4 44" stroke="#8c7c50" stroke-width="6.5"/><rect x="4.4" y="4.4" width="39.2" height="39.2" fill="none" stroke="#5a3410" stroke-width="0.8"/><text x="24" y="16" font-family="Liberation Serif,serif" font-weight="bold" fill="#f8cc28" stroke="#f8cc28" stroke-width="0.5" font-size="15" text-anchor="middle">B</text><text x="24.8" y="30.5" font-family="Liberation Serif,serif" font-weight="bold" fill="#f8cc28" stroke="#f8cc28" stroke-width="0.5" font-size="16" text-anchor="middle" letter-spacing="1.6">DOS</text><text x="24" y="44.5" font-family="Liberation Serif,serif" font-weight="bold" fill="#f8cc28" stroke="#f8cc28" stroke-width="0.5" font-size="15" text-anchor="middle">X</text><rect x="0.4" y="35.4" width="12.4" height="12.4" fill="#f5f5f5" stroke="#c9ccd2" stroke-width="0.8"/><path d="M3.9 37.1H10V43L7.9 40.9Q5.9 42.6 5.7 46.8Q1.4 43.4 4.2 40Q4.9 39.3 5.9 38.9Z" fill="#2558a8"/></svg><div class="lb" style="left:368px;top:267px;letter-spacing:-0.439px">DOSBox 0.73</div><svg style="position:absolute;left:470px;top:215px" width="48" height="48" viewBox="0 0 48 48"><path d="M9 3H31.7L41 12.3V45H9Z" fill="#fff"/><path d="M31.7 3V12.3H41Z" fill="#f4f4f4"/><path d="M31.7 3V12.3H41" fill="none" stroke="#b4b4b4" stroke-width="0.9"/><path d="M12 10.1H31.6" stroke="#8c8c8c" stroke-width="1.8"/><path d="M22.1 14.9H38M22.1 20H38M22.1 24.9H38M22.1 30H38M22.1 34.9H38M22.1 40H38" stroke="#8c8c8c" stroke-width="1.8"/><path d="M3.2 17.8L21 15.2V41.9L3.2 39.3Z" fill="#2b579a"/><text x="12.25" y="33.8" font-family="Liberation Sans,sans-serif" font-weight="bold" font-size="14.2" fill="#fff" stroke="#fff" stroke-width="0.5" text-anchor="middle">W</text></svg><div class="lb" style="left:444px;top:267px;letter-spacing:-0.228px">Parket</div><svg style="position:absolute;left:546px;top:215px" width="48" height="48" viewBox="0 0 48 48"><g transform="translate(1.3,45.8) rotate(-44.9)"><path d="M0 0L12 -3.2V3.2Z" fill="#f2f2f2"/><path d="M6 0L12 0V3.2Z" fill="#c4c4c4"/><path d="M0 0L3.6 -0.95V0.95Z" fill="#4a4a4a"/><rect x="12" y="-3.2" width="38" height="2" fill="#ffd400"/><rect x="12" y="-1.2" width="38" height="2.8" fill="#ff9a30"/><rect x="12" y="1.6" width="38" height="1.6" fill="#c8686a"/><rect x="50" y="-3.3" width="4.5" height="6.6" fill="#ffdc30"/><rect x="50" y="0.8" width="4.5" height="2.5" fill="#ffb030"/><path d="M50.4 -3.3V3.3M54.1 -3.3V3.3" stroke="#3a2a00" stroke-width="0.8"/><path d="M54.5 -3.3H58.3Q61 -3.3 61 0Q61 3.3 58.3 3.3H54.5Z" fill="#ff6a30"/></g></svg><div class="lb" style="left:520px;top:267px;letter-spacing:0.313px">Фрукты</div><div class="lb" style="left:520px;top:282px;letter-spacing:0.167px">новые</div><svg style="position:absolute;left:622px;top:215px" width="48" height="48" viewBox="0 0 48 48"><path d="M9 3H31.7L41 12.3V45H9Z" fill="#fff"/><path d="M31.7 3V12.3H41Z" fill="#f4f4f4"/><path d="M31.7 3V12.3H41" fill="none" stroke="#b4b4b4" stroke-width="0.9"/><path d="M12 10.1H31.6" stroke="#8c8c8c" stroke-width="1.8"/><path d="M22.1 14.9H38M22.1 20H38M22.1 24.9H38M22.1 30H38M22.1 34.9H38M22.1 40H38" stroke="#8c8c8c" stroke-width="1.8"/><path d="M3.2 17.8L21 15.2V41.9L3.2 39.3Z" fill="#2b579a"/><text x="12.25" y="33.8" font-family="Liberation Sans,sans-serif" font-weight="bold" font-size="14.2" fill="#fff" stroke="#fff" stroke-width="0.5" text-anchor="middle">W</text></svg><div class="lb" style="left:596px;top:267px;letter-spacing:-0.174px">1 слайд</div><svg style="position:absolute;left:698px;top:215px" width="48" height="48" viewBox="0 0 48 48"><path d="M9 3H31.7L41 12.3V45H9Z" fill="#fff"/><path d="M31.7 3V12.3H41Z" fill="#f4f4f4"/><path d="M31.7 3V12.3H41" fill="none" stroke="#b4b4b4" stroke-width="0.9"/><path d="M12.1 10.1H31.6M12.1 15H38M22.3 20H38M22.3 24.9H38M22.3 30H38M22.3 34.9H38M12.1 40H38" stroke="#8c8c8c" stroke-width="1.8"/><rect x="0.95" y="19.15" width="19.1" height="18.8" fill="#fff" stroke="#2b579a" stroke-width="1.9"/><text x="10.3" y="34.5" font-family="Liberation Serif,serif" font-weight="bold" font-style="italic" font-size="18" fill="#2b579a" stroke="#2b579a" stroke-width="0.8" text-anchor="middle">W</text></svg><div class="lb" style="left:672px;top:267px;letter-spacing:-0.145px">2_Algoritm...</div><svg style="position:absolute;left:774px;top:215px" width="48" height="48" viewBox="0 0 48 48"><path d="M9 3H31.7L41 12.3V45H9Z" fill="#fff"/><path d="M31.7 3V12.3H41Z" fill="#f4f4f4"/><path d="M31.7 3V12.3H41" fill="none" stroke="#b4b4b4" stroke-width="0.9"/><path d="M12.1 10.1H31.6M12.1 15H38M22.3 20H38M22.3 24.9H38M22.3 30H38M22.3 34.9H38M12.1 40H38" stroke="#8c8c8c" stroke-width="1.8"/><rect x="0.95" y="19.15" width="19.1" height="18.8" fill="#fff" stroke="#2b579a" stroke-width="1.9"/><text x="10.3" y="34.5" font-family="Liberation Serif,serif" font-weight="bold" font-style="italic" font-size="18" fill="#2b579a" stroke="#2b579a" stroke-width="0.8" text-anchor="middle">W</text></svg><div class="lb" style="left:748px;top:267px;letter-spacing:-0.145px">3_Algoritm...</div><svg style="position:absolute;left:850px;top:215px" width="48" height="48" viewBox="0 0 48 48"><defs><linearGradient id="fg16" x1="0" x2="1"><stop offset="0" stop-color="#f7dc84"/><stop offset="1" stop-color="#f1cc5c"/></linearGradient></defs><path d="M8 5H32.8V26H35V39H15V12Z" fill="url(#fg16)"/><path d="M32.8 26H35V39H32.8Z" fill="#e6c04e"/><path d="M8 5L15.5 10.5V45.3L8 39.5Z" fill="#fbe9a8"/></svg><div class="lb" style="left:824px;top:267px;letter-spacing:0.099px">Ispolniteli</div><svg style="position:absolute;left:1762px;top:215px" width="48" height="48" viewBox="0 0 48 48"><g transform="translate(1.3,45.8) rotate(-44.9)"><path d="M0 0L12 -3.2V3.2Z" fill="#f2f2f2"/><path d="M6 0L12 0V3.2Z" fill="#c4c4c4"/><path d="M0 0L3.6 -0.95V0.95Z" fill="#4a4a4a"/><rect x="12" y="-3.2" width="38" height="2" fill="#ffd400"/><rect x="12" y="-1.2" width="38" height="2.8" fill="#ff9a30"/><rect x="12" y="1.6" width="38" height="1.6" fill="#c8686a"/><rect x="50" y="-3.3" width="4.5" height="6.6" fill="#ffdc30"/><rect x="50" y="0.8" width="4.5" height="2.5" fill="#ffb030"/><path d="M50.4 -3.3V3.3M54.1 -3.3V3.3" stroke="#3a2a00" stroke-width="0.8"/><path d="M54.5 -3.3H58.3Q61 -3.3 61 0Q61 3.3 58.3 3.3H54.5Z" fill="#ff6a30"/></g></svg><div class="lb" style="left:1736px;top:267px;letter-spacing:0.001px">Рисунок</div><svg style="position:absolute;left:1838px;top:215px" width="48" height="48" viewBox="0 0 48 48"><defs><linearGradient id="fg17" x1="0" x2="1"><stop offset="0" stop-color="#f7dc84"/><stop offset="1" stop-color="#f1cc5c"/></linearGradient></defs><path d="M8 5H32.8V26H35V39H15V12Z" fill="url(#fg17)"/><path d="M32.8 26H35V39H32.8Z" fill="#e6c04e"/><path d="M8 5L15.5 10.5V45.3L8 39.5Z" fill="#fbe9a8"/></svg><div class="lb" style="left:1812px;top:267px;letter-spacing:0.281px">4-Коррекция</div><svg style="position:absolute;left:14px;top:319px" width="48" height="48" viewBox="0 0 48 48"><defs><radialGradient id="ac18" cx="0.45" cy="0.4" r="0.6"><stop offset="0" stop-color="#d8f0a0"/><stop offset="0.35" stop-color="#2a9ad8"/><stop offset="1" stop-color="#0a2a7a"/></radialGradient><linearGradient id="ac18b" x1="0" y1="0" x2="0" y2="1"><stop offset="0" stop-color="#9a9a98"/><stop offset="0.4" stop-color="#5a5a58"/><stop offset="1" stop-color="#2a2a28"/></linearGradient></defs><path d="M0.5 16Q0.5 12 5 11.5L14 10L20 4Q29 1.5 36 4.5L41 10.5L46 13Q47.7 14 47.7 17V38Q47.7 42 43 42H6Q0.5 42 0.5 37Z" fill="url(#ac18b)"/><path d="M20 4Q29 1.5 36 4.5L38 10H18Z" fill="#a8a8a4"/><path d="M1.5 14L12 12V20L1.5 22Z" fill="#3a3a38"/><circle cx="29.3" cy="26.3" r="14" fill="#2a2c2e" stroke="#7c7e80" stroke-width="1.6"/><circle cx="29.3" cy="26.3" r="10.3" fill="#121416" stroke="#4a4c4e" stroke-width="1"/><circle cx="29.3" cy="26.3" r="8" fill="url(#ac18)"/><circle cx="27" cy="23.5" r="2" fill="#fff" opacity="0.75"/><rect x="0.4" y="35.4" width="12.4" height="12.4" fill="#f5f5f5" stroke="#c9ccd2" stroke-width="0.8"/><path d="M3.9 37.1H10V43L7.9 40.9Q5.9 42.6 5.7 46.8Q1.4 43.4 4.2 40Q4.9 39.3 5.9 38.9Z" fill="#2558a8"/></svg><div class="lb" style="left:-12px;top:371px;letter-spacing:-0.436px">ACDSee Pro 7</div><div class="lb" style="left:-12px;top:386px;letter-spacing:0.125px">(64-bit)</div><svg style="position:absolute;left:90px;top:319px" width="48" height="48" viewBox="0 0 48 48"><path d="M16 3V-1H20V2H24V-1H29V2H33V-1H38V2H42V-1H46V12L43.5 15V44H18V15L16 12Z" fill="#a4a4a4"/><path d="M18 18H43M18 23H43M18 28H43M18 33H43M18 38H43M24 15V18M32 15V18M38 15V18M21 18V23M28 18V23M36 18V23M24 23V28M32 23V28M40 23V28M21 28V33M28 28V33M36 28V33" stroke="#7a7a7a" stroke-width="0.7" fill="none"/><path d="M16 3H46V6H16Z" fill="#c4c4c4"/><path d="M7 5Q9 2 13 3.5L36 29Q39.5 33 36 35.5Q33 37.5 30 34.5Z" fill="#d8283a"/><path d="M10 5.5L31 31" stroke="#f08a94" stroke-width="1.2"/><path d="M4.5 6Q5 3.5 8 4.5L11.5 8.5Q9 11.5 5.5 10.5Z" fill="#d4d4d4"/><path d="M12 12V45" stroke="#b8bcc0" stroke-width="3"/><path d="M12 28V45" stroke="#2a2a2a" stroke-width="4"/><path d="M21.5 20V42" stroke="#e4e6e8" stroke-width="3.2"/><path d="M18 18.5Q18 23.5 21.5 24Q25 23.5 25 18.5L23 21H20ZM18 44Q18 39 21.5 38.5Q25 39 25 44L23 41.5H20Z" fill="#e4e6e8"/><rect x="0.4" y="35.4" width="12.4" height="12.4" fill="#f5f5f5" stroke="#c9ccd2" stroke-width="0.8"/><path d="M3.9 37.1H10V43L7.9 40.9Q5.9 42.6 5.7 46.8Q1.4 43.4 4.2 40Q4.9 39.3 5.9 38.9Z" fill="#2558a8"/></svg><div class="lb" style="left:64px;top:371px;letter-spacing:-0.085px">Панель</div><div class="lb" style="left:64px;top:386px;letter-spacing:0.043px">управления</div><svg style="position:absolute;left:166px;top:319px" width="48" height="48" viewBox="0 0 48 48"><rect x="3" y="8" width="42" height="30.6" fill="#f1f1f1"/><rect x="3" y="8" width="42" height="3.2" fill="#9aa2aa"/><path d="M36 9.6H43" stroke="#e4e6e8" stroke-width="1.2" stroke-dasharray="1.6 1"/><rect x="3" y="11.2" width="9" height="27.4" fill="#e4e4e4"/><rect x="13" y="14" width="17" height="21" fill="#0a78d8"/><path d="M3.5 38.1H44.5" stroke="#c8c8c8" stroke-width="1"/><path d="M32 15.5H42M32 17.5H42M32 19.5H42M32 21.5H42M32 23.5H42M32 25.5H42M32 27.5H38" stroke="#9a9a9a" stroke-width="0.9"/><path d="M6 15.5H10M6 18.5H10M6 21.5H10M6 24.5H10M6 27.5H10" stroke="#b4b4b4" stroke-width="1"/></svg><div class="lb" style="left:140px;top:371px;letter-spacing:-0.62px">Far</div><svg style="position:absolute;left:242px;top:319px" width="48" height="48" viewBox="0 0 48 48"><path d="M9 3H31.7L41 12.3V45H9Z" fill="#fff"/><path d="M25.3 18.1V9.4A8.7 8.7 0 1 0 34 18.1Z" fill="#919191"/><path d="M27.1 15.6V6.9A8.7 8.7 0 0 1 35.8 15.6Z" fill="#f4b59c"/><path d="M31.7 3V12.3H41Z" fill="#f4f4f4"/><path d="M31.7 3V12.3H41" fill="none" stroke="#b4b4b4" stroke-width="0.9"/><path d="M22.2 31H37.9M22.2 35H37.9M22.2 39H37.9" stroke="#f6b7a0" stroke-width="1.8"/><path d="M3.2 17.4L20.9 14.9V42.1L3.2 39.8Z" fill="#d24625"/><text x="12.6" y="33.9" font-family="Liberation Sans,sans-serif" font-weight="bold" font-size="15.6" fill="#fff" text-anchor="middle">P</text></svg><div class="lb" style="left:216px;top:371px;letter-spacing:-0.23px">Prezent</div><svg style="position:absolute;left:318px;top:319px" width="48" height="48" viewBox="0 0 48 48"><g transform="translate(2.5,45.2) rotate(-43.8)"><path d="M0 0L11 -4.1V4.1Z" fill="#eab672"/><path d="M5 0L11 0V4.1Z" fill="#c88a48"/><path d="M0 0L3.4 -1.25V1.25Z" fill="#3a2a20"/><rect x="11" y="-4.1" width="37" height="2.6" fill="#f8b030"/><rect x="11" y="-1.5" width="37" height="3" fill="#f09010"/><rect x="11" y="1.5" width="37" height="2.6" fill="#c86a08"/><rect x="48" y="-4.2" width="5" height="8.4" fill="#c4c4c4"/><path d="M49 -4.2V4.2M50.5 -4.2V4.2M52 -4.2V4.2" stroke="#777" stroke-width="0.6"/><path d="M53 -4.2H57Q59.5 -4.2 59.5 0Q59.5 4.2 57 4.2H53Z" fill="#f0eeb0"/></g><g transform="translate(2.6,3.6) scale(0.78)"><rect x="0.5" y="0.5" width="19" height="19" rx="3.5" fill="#2c5eb0" stroke="#e4ecf8" stroke-width="1"/><rect x="1.5" y="1.5" width="17" height="9" rx="3" fill="#a8c8f0" opacity="0.85"/><path d="M7.5 3H12.5V9.5H16L10 16.5L4 9.5H7.5Z" fill="#fff"/></g></svg><div class="lb" style="left:292px;top:371px;letter-spacing:-0.158px">HornilStyl...</div><svg style="position:absolute;left:394px;top:319px" width="48" height="48" viewBox="0 0 48 48"><path d="M7.8 2.8H39V26.3L41.9 29.2V45.1H7.8Z" fill="#fbe08a"/><path d="M7.8 2.8H39V4.6H7.8Z" fill="#f2cc58"/><path d="M33 4.6H39V26.3L41.9 29.2V45.1H33Z" fill="#f8d672"/><path d="M10.8 7V42" stroke="#fdf0bc" stroke-width="1"/><path d="M8.3 3.3V44.6H41.4" stroke="#eec85a" stroke-width="1" fill="none"/><path d="M34.8 45V32Q34.8 29.5 37 28.2L39.5 26.8" stroke="#fdeeb4" stroke-width="1.3" fill="none"/><path d="M29.55 18V41.5" stroke="#ece8d4" stroke-width="3.7"/><path d="M29.55 18V41.5" stroke="#5e5a46" stroke-width="3.7" stroke-dasharray="1.1 1.05"/><path d="M29.55 18V41.5" stroke="#bcb8a4" stroke-width="0.9"/><rect x="27.6" y="41" width="4" height="4.1" fill="#b4b4b4"/><path d="M26.3 3.5Q26.3 1.9 28 1.9H31Q33 1.9 33 3.5V11L32 19H27.4L26.3 11Z" fill="#cfcfcf" stroke="#8a8a8a" stroke-width="0.6"/><rect x="28.2" y="7" width="2.8" height="2" fill="#666"/><rect x="28.2" y="14.8" width="2.8" height="2.6" fill="#3a3a3a"/><path d="M27.2 4.5H32.2" stroke="#f4f4f4" stroke-width="1"/></svg><div class="lb" style="left:368px;top:371px;letter-spacing:-0.056px">arhiv</div><svg style="position:absolute;left:470px;top:319px" width="48" height="48" viewBox="0 0 48 48"><path d="M7.8 2.8H39V26.3L41.9 29.2V45.1H7.8Z" fill="#fbe08a"/><path d="M7.8 2.8H39V4.6H7.8Z" fill="#f2cc58"/><path d="M33 4.6H39V26.3L41.9 29.2V45.1H33Z" fill="#f8d672"/><path d="M10.8 7V42" stroke="#fdf0bc" stroke-width="1"/><path d="M8.3 3.3V44.6H41.4" stroke="#eec85a" stroke-width="1" fill="none"/><path d="M34.8 45V32Q34.8 29.5 37 28.2L39.5 26.8" stroke="#fdeeb4" stroke-width="1.3" fill="none"/><path d="M29.55 18V41.5" stroke="#ece8d4" stroke-width="3.7"/><path d="M29.55 18V41.5" stroke="#5e5a46" stroke-width="3.7" stroke-dasharray="1.1 1.05"/><path d="M29.55 18V41.5" stroke="#bcb8a4" stroke-width="0.9"/><rect x="27.6" y="41" width="4" height="4.1" fill="#b4b4b4"/><path d="M26.3 3.5Q26.3 1.9 28 1.9H31Q33 1.9 33 3.5V11L32 19H27.4L26.3 11Z" fill="#cfcfcf" stroke="#8a8a8a" stroke-width="0.6"/><rect x="28.2" y="7" width="2.8" height="2" fill="#666"/><rect x="28.2" y="14.8" width="2.8" height="2.6" fill="#3a3a3a"/><path d="M27.2 4.5H32.2" stroke="#f4f4f4" stroke-width="1"/></svg><div class="lb" style="left:444px;top:371px;letter-spacing:-0.081px">arhiv2</div><svg style="position:absolute;left:546px;top:319px" width="48" height="48" viewBox="0 0 48 48"><path d="M9 3H31.7L41 12.3V45H9Z" fill="#fff"/><path d="M31.7 3V12.3H41Z" fill="#f4f4f4"/><path d="M31.7 3V12.3H41" fill="none" stroke="#b4b4b4" stroke-width="0.9"/><path d="M12 10.1H31.6" stroke="#8c8c8c" stroke-width="1.8"/><path d="M22.1 14.9H38M22.1 20H38M22.1 24.9H38M22.1 30H38M22.1 34.9H38M22.1 40H38" stroke="#8c8c8c" stroke-width="1.8"/><path d="M3.2 17.8L21 15.2V41.9L3.2 39.3Z" fill="#2b579a"/><text x="12.25" y="33.8" font-family="Liberation Sans,sans-serif" font-weight="bold" font-size="14.2" fill="#fff" stroke="#fff" stroke-width="0.5" text-anchor="middle">W</text></svg><div class="lb" style="left:520px;top:371px;letter-spacing:0.095px">doc</div><svg style="position:absolute;left:622px;top:319px" width="48" height="48" viewBox="0 0 48 48"><path d="M9 3H31.7L41 12.3V45H9Z" fill="#fff"/><path d="M25.3 18.1V9.4A8.7 8.7 0 1 0 34 18.1Z" fill="#919191"/><path d="M27.1 15.6V6.9A8.7 8.7 0 0 1 35.8 15.6Z" fill="#f4b59c"/><path d="M31.7 3V12.3H41Z" fill="#f4f4f4"/><path d="M31.7 3V12.3H41" fill="none" stroke="#b4b4b4" stroke-width="0.9"/><path d="M22.3 30.9H38M22.3 34.9H38M22.3 38.9H38" stroke="#f6b7a0" stroke-width="1.8"/><rect x="0" y="18.2" width="21" height="20.7" fill="#d24625"/><rect x="2.45" y="20.65" width="16.1" height="15.8" fill="none" stroke="#fff" stroke-width="1.3"/><path d="M5 24.2H16.2" stroke="#fff" stroke-width="1.3"/><circle cx="8.8" cy="29.8" r="3.9" fill="#fff"/><path d="M8.8 29.8V25.9A3.9 3.9 0 0 1 12.7 29.8Z" fill="#d24625"/><path d="M9.8 28.8V25.6A3.5 3.5 0 0 1 13.1 28.8Z" fill="#fff"/><path d="M14.6 27.3H17M14.6 29.5H17M14.6 31.6H17" stroke="#fff" stroke-width="1.1"/></svg><div class="lb" style="left:596px;top:371px;letter-spacing:-0.791px">Sreda_GRIS...</div><svg style="position:absolute;left:1838px;top:319px" width="48" height="48" viewBox="0 0 48 48"><defs><linearGradient id="fg19" x1="0" x2="1"><stop offset="0" stop-color="#f7dc84"/><stop offset="1" stop-color="#f1cc5c"/></linearGradient></defs><path d="M8 5H32.8V26H35V39H15V12Z" fill="url(#fg19)"/><path d="M32.8 26H35V39H32.8Z" fill="#e6c04e"/><path d="M8 5L15.5 10.5V45.3L8 39.5Z" fill="#fbe9a8"/></svg><div class="lb" style="left:1812px;top:371px;letter-spacing:-0.195px">Самостоят...</div><svg style="position:absolute;left:14px;top:423px" width="48" height="48" viewBox="0 0 48 48"><circle cx="24" cy="24" r="22.5" fill="#dd4b3e"/><path d="M24 24L4.5 12.75A22.5 22.5 0 0 0 14.5 44.4Z" fill="#1da362"/><path d="M24 24L14.5 44.4A22.5 22.5 0 0 0 45.9 18.8H24Z" fill="#ffce44"/><path d="M24 24L4.5 12.75A22.5 22.5 0 0 1 45.9 18.8H24Z" fill="#dd4b3e"/><circle cx="24" cy="24" r="10.4" fill="#f4f4f4"/><circle cx="24" cy="24" r="8.3" fill="#4a8af4"/><rect x="0.4" y="35.4" width="12.4" height="12.4" fill="#f5f5f5" stroke="#c9ccd2" stroke-width="0.8"/><path d="M3.9 37.1H10V43L7.9 40.9Q5.9 42.6 5.7 46.8Q1.4 43.4 4.2 40Q4.9 39.3 5.9 38.9Z" fill="#2558a8"/></svg><div class="lb" style="left:-12px;top:475px;letter-spacing:-0.027px">Google</div><div class="lb" style="left:-12px;top:490px;letter-spacing:-0.107px">Chrome</div><svg style="position:absolute;left:90px;top:423px" width="48" height="48" viewBox="0 0 48 48"><path d="M0.5 44.6L20.5 3H33.5L51 44.6ZM16 31H35L32.3 9.5Z" fill="#f5901e" fill-rule="evenodd"/><path d="M0.5 44.6L8 29H16V31L9 44.6Z" fill="#f5901e"/><rect x="0.4" y="35.4" width="12.4" height="12.4" fill="#f5f5f5" stroke="#c9ccd2" stroke-width="0.8"/><path d="M3.9 37.1H10V43L7.9 40.9Q5.9 42.6 5.7 46.8Q1.4 43.4 4.2 40Q4.9 39.3 5.9 38.9Z" fill="#2558a8"/></svg><div class="lb" style="left:64px;top:475px;letter-spacing:-0.108px">Средство</div><div class="lb" style="left:64px;top:490px;letter-spacing:-0.097px">активации...</div><svg style="position:absolute;left:622px;top:423px" width="48" height="48" viewBox="0 0 48 48"><path d="M9 3H31.7L41 12.3V45H9Z" fill="#fff"/><path d="M31.7 3V12.3H41Z" fill="#f4f4f4"/><path d="M31.7 3V12.3H41" fill="none" stroke="#b4b4b4" stroke-width="0.9"/><path d="M12.1 10.1H31.6M12.1 15H38M22.3 20H38M22.3 24.9H38M22.3 30H38M22.3 34.9H38M12.1 40H38" stroke="#8c8c8c" stroke-width="1.8"/><rect x="0.95" y="19.15" width="19.1" height="18.8" fill="#fff" stroke="#2b579a" stroke-width="1.9"/><text x="10.3" y="34.5" font-family="Liberation Serif,serif" font-weight="bold" font-style="italic" font-size="18" fill="#2b579a" stroke="#2b579a" stroke-width="0.8" text-anchor="middle">W</text></svg><div class="lb" style="left:596px;top:475px;letter-spacing:-0.428px">Sreda_Ispol...</div><svg style="position:absolute;left:1838px;top:423px" width="48" height="48" viewBox="0 0 48 48"><defs><linearGradient id="fg20" x1="0" x2="1"><stop offset="0" stop-color="#f7dc84"/><stop offset="1" stop-color="#f1cc5c"/></linearGradient></defs><path d="M8 5H32.8V26H35V39H15V12Z" fill="url(#fg20)"/><path d="M32.8 26H35V39H32.8Z" fill="#e6c04e"/><path d="M8 5L15.5 10.5V45.3L8 39.5Z" fill="#fbe9a8"/></svg><div class="lb" style="left:1812px;top:475px;letter-spacing:-0.289px">5-Восстан...</div><div class="lb" style="left:1812px;top:490px;letter-spacing:0.066px">фото</div><svg style="position:absolute;left:14px;top:527px" width="48" height="48" viewBox="0 0 48 48"><circle cx="24" cy="24" r="19.5" fill="#10a8ec"/><circle cx="13" cy="13" r="10.5" fill="#10a8ec"/><circle cx="35" cy="35" r="10.5" fill="#10a8ec"/><text x="24" y="36.5" font-family="Liberation Sans,sans-serif" font-weight="bold" font-size="35" fill="#fff" text-anchor="middle">S</text><rect x="0.4" y="35.4" width="12.4" height="12.4" fill="#f5f5f5" stroke="#c9ccd2" stroke-width="0.8"/><path d="M3.9 37.1H10V43L7.9 40.9Q5.9 42.6 5.7 46.8Q1.4 43.4 4.2 40Q4.9 39.3 5.9 38.9Z" fill="#2558a8"/></svg><div class="lb" style="left:-12px;top:579px;letter-spacing:-0.375px">Skype</div><svg style="position:absolute;left:90px;top:527px" width="48" height="48" viewBox="0 0 48 48"><defs><radialGradient id="st21" cx="0.4" cy="0.35" r="0.7"><stop offset="0" stop-color="#fbc878"/><stop offset="1" stop-color="#d07a1a"/></radialGradient></defs><path d="M7 46Q7 31 25 30Q45 31 45 46Q26 49 7 46Z" fill="#1e8a2e"/><path d="M19 31L25.5 43L32 31Z" fill="#f0f4f0"/><path d="M24 33H27L28 41L25.5 44.5L23 41Z" fill="#1a6a2a"/><path d="M8 44Q12 34 19 31L25.5 45Z" fill="#2aa03c" opacity="0.7"/><ellipse cx="26.5" cy="18" rx="11.5" ry="12.5" fill="url(#st21)"/><path d="M14.5 17Q13 2.5 27 2.5Q40 3 38.5 17Q35 8 26 9Q18 9 14.5 17Z" fill="#8a4a10"/><path d="M13.5 13Q11.5 13 11.5 17Q11.5 21 14.5 21Z" fill="#d8d8d8"/><path d="M13 20Q15 26.5 26 25" stroke="#2a2a2a" stroke-width="1.5" fill="none"/><ellipse cx="27" cy="25" rx="2.2" ry="1.3" fill="#2a2a2a"/><rect x="0.4" y="35.4" width="12.4" height="12.4" fill="#f5f5f5" stroke="#c9ccd2" stroke-width="0.8"/><path d="M3.9 37.1H10V43L7.9 40.9Q5.9 42.6 5.7 46.8Q1.4 43.4 4.2 40Q4.9 39.3 5.9 38.9Z" fill="#2558a8"/></svg><div class="lb" style="left:64px;top:579px;letter-spacing:-0.115px">Станция</div><div class="lb" style="left:64px;top:594px;letter-spacing:-0.323px">запис...</div><svg style="position:absolute;left:622px;top:527px" width="48" height="48" viewBox="0 0 48 48"><defs><linearGradient id="pg22" x1="0" y1="0" x2="1" y2="1"><stop offset="0" stop-color="#eaf2fd"/><stop offset="1" stop-color="#b8d0f0"/></linearGradient><radialGradient id="pg22m" cx="0.42" cy="0.35" r="0.7"><stop offset="0" stop-color="#fff"/><stop offset="0.55" stop-color="#bcb8e2"/><stop offset="1" stop-color="#8e8ac8"/></radialGradient><linearGradient id="pg22f" x1="0" y1="1" x2="1" y2="0"><stop offset="0" stop-color="#9cc8f8"/><stop offset="1" stop-color="#3a8ae0"/></linearGradient></defs><path d="M6.9 0H34.8L43 8.2V45.75H6.9Z" fill="url(#pg22)" stroke="#a8c6ee" stroke-width="0.7"/><path d="M34.8 0V8.2H43Z" fill="url(#pg22f)"/><path d="M13.1 33.1L29.2 13.3L47.2 25.1L31.6 46.8Z" fill="#1e5cc8"/><path d="M16.6 31L29.8 15.4L44.6 25L31.6 41.2Z" fill="#4a96ea"/><path d="M29.8 15.4L44.6 25L38.4 32.8L23.4 23Z" fill="#8cc0f6"/><path d="M14.6 34.4L31.5 44.6L46 26.4" stroke="#f4f8fc" stroke-width="1.5" fill="none"/><path d="M33.4 33L41.9 41.1" stroke="#e8501c" stroke-width="4.4" stroke-linecap="round"/><path d="M33.8 32.4L41.4 39.6" stroke="#fcd4bc" stroke-width="1.2" stroke-linecap="round"/><path d="M31 30.6L33.6 33.2" stroke="#d8d8e4" stroke-width="3.4"/><circle cx="26.5" cy="24.5" r="7.3" fill="url(#pg22m)" stroke="#3c3c5c" stroke-width="1.4"/><rect x="1" y="1.2" width="31.2" height="9.8" fill="#ee0000"/><text x="8" y="9.8" font-family="Liberation Sans,sans-serif" font-size="10.5" fill="#fff" textLength="17.4" lengthAdjust="spacingAndGlyphs">PDF</text></svg><div class="lb" style="left:596px;top:579px;letter-spacing:-0.477px">Sreda_KuMI...</div><svg style="position:absolute;left:1838px;top:527px" width="48" height="48" viewBox="0 0 48 48"><defs><linearGradient id="fg23" x1="0" x2="1"><stop offset="0" stop-color="#f7dc84"/><stop offset="1" stop-color="#f1cc5c"/></linearGradient></defs><path d="M8 5H32.8V26H35V39H15V12Z" fill="url(#fg23)"/><path d="M32.8 26H35V39H32.8Z" fill="#e6c04e"/><path d="M8 5L15.5 10.5V45.3L8 39.5Z" fill="#fbe9a8"/></svg><div class="lb" style="left:1812px;top:579px;letter-spacing:0.22px">Шашкина</div><svg style="position:absolute;left:14px;top:631px" width="48" height="48" viewBox="0 0 48 48"><path d="M1 27L29 13L47 25L19 41Z" fill="#2a6ad8"/><path d="M1 27L19 41V46L1 32Z" fill="#f0f4fa"/><path d="M19 41L47 25V30L19 46Z" fill="#1a3c98"/><path d="M5.5 27.3L29 15.5L42.5 24.5L19 37.5Z" fill="#5a9cf0"/><path d="M2 29L19 43M2 31L19 45" stroke="#c4ccd8" stroke-width="0.6"/><path d="M27.5 26.5L42 41" stroke="#e8501c" stroke-width="5" stroke-linecap="round"/><path d="M28 26L41 39" stroke="#fbc8a8" stroke-width="1.2" stroke-linecap="round"/><circle cx="20.5" cy="16.5" r="11.5" fill="#d4d4ee" stroke="#5a5a8c" stroke-width="2"/><circle cx="17.5" cy="13" r="5" fill="#fff" opacity="0.8"/><rect x="0.4" y="35.4" width="12.4" height="12.4" fill="#f5f5f5" stroke="#c9ccd2" stroke-width="0.8"/><path d="M3.9 37.1H10V43L7.9 40.9Q5.9 42.6 5.7 46.8Q1.4 43.4 4.2 40Q4.9 39.3 5.9 38.9Z" fill="#2558a8"/></svg><div class="lb" style="left:-12px;top:683px;letter-spacing:-0.373px">STDU Viewer</div><svg style="position:absolute;left:90px;top:631px" width="48" height="48" viewBox="0 0 48 48"><path d="M8.4 3.4H31.3L39.5 11.6V44.5H8.4Z" fill="#f5f6f7" stroke="#dedede" stroke-width="0.8"/><path d="M31.3 3.4V11.6H39.5Z" fill="#e6e6e6"/><path d="M31.3 3.4V11.6H39.5" fill="none" stroke="#b4b4b4" stroke-width="0.9"/><rect x="0.4" y="35.4" width="12.4" height="12.4" fill="#f5f5f5" stroke="#c9ccd2" stroke-width="0.8"/><path d="M3.9 37.1H10V43L7.9 40.9Q5.9 42.6 5.7 46.8Q1.4 43.4 4.2 40Q4.9 39.3 5.9 38.9Z" fill="#2558a8"/></svg><div class="lb" style="left:64px;top:683px;letter-spacing:0.188px">µTorrent</div><svg style="position:absolute;left:318px;top:631px" width="48" height="48" viewBox="0 0 48 48"><g transform="translate(2.5,45.2) rotate(-43.8)"><path d="M0 0L11 -4.1V4.1Z" fill="#eab672"/><path d="M5 0L11 0V4.1Z" fill="#c88a48"/><path d="M0 0L3.4 -1.25V1.25Z" fill="#3a2a20"/><rect x="11" y="-4.1" width="37" height="2.6" fill="#f8b030"/><rect x="11" y="-1.5" width="37" height="3" fill="#f09010"/><rect x="11" y="1.5" width="37" height="2.6" fill="#c86a08"/><rect x="48" y="-4.2" width="5" height="8.4" fill="#c4c4c4"/><path d="M49 -4.2V4.2M50.5 -4.2V4.2M52 -4.2V4.2" stroke="#777" stroke-width="0.6"/><path d="M53 -4.2H57Q59.5 -4.2 59.5 0Q59.5 4.2 57 4.2H53Z" fill="#f0eeb0"/></g></svg><div class="lb" style="left:292px;top:698px;letter-spacing:-0.158px">HornilStyl...</div><svg style="position:absolute;left:394px;top:631px" width="48" height="48" viewBox="0 0 48 48"><path d="M9 3H31.7L41 12.3V45H9Z" fill="#fff"/><path d="M31.7 3V12.3H41Z" fill="#f4f4f4"/><path d="M31.7 3V12.3H41" fill="none" stroke="#b4b4b4" stroke-width="0.9"/><path d="M12 10.1H31.6" stroke="#8c8c8c" stroke-width="1.8"/><path d="M22.1 14.9H38M22.1 20H38M22.1 24.9H38M22.1 30H38M22.1 34.9H38M22.1 40H38" stroke="#8c8c8c" stroke-width="1.8"/><path d="M3.2 17.8L21 15.2V41.9L3.2 39.3Z" fill="#2b579a"/><text x="12.25" y="33.8" font-family="Liberation Sans,sans-serif" font-weight="bold" font-size="14.2" fill="#fff" stroke="#fff" stroke-width="0.5" text-anchor="middle">W</text></svg><div class="lb" style="left:368px;top:698px;letter-spacing:-0.15px">Русского я...</div><svg style="position:absolute;left:622px;top:631px" width="48" height="48" viewBox="0 0 48 48"><path d="M9 3H31.7L41 12.3V45H9Z" fill="#fff"/><path d="M31.7 3V12.3H41Z" fill="#f4f4f4"/><path d="M31.7 3V12.3H41" fill="none" stroke="#b4b4b4" stroke-width="0.9"/><path d="M12.1 10.1H31.6M12.1 15H38M22.3 20H38M22.3 24.9H38M22.3 30H38M22.3 34.9H38M12.1 40H38" stroke="#8c8c8c" stroke-width="1.8"/><rect x="0.95" y="19.15" width="19.1" height="18.8" fill="#fff" stroke="#2b579a" stroke-width="1.9"/><text x="10.3" y="34.5" font-family="Liberation Serif,serif" font-weight="bold" font-style="italic" font-size="18" fill="#2b579a" stroke="#2b579a" stroke-width="0.8" text-anchor="middle">W</text></svg><div class="lb" style="left:596px;top:683px;letter-spacing:-0.586px">Sreda_Park...</div><svg style="position:absolute;left:14px;top:735px" width="48" height="48" viewBox="0 0 48 48"><defs><linearGradient id="dw24" x1="0" y1="0" x2="0" y2="1"><stop offset="0" stop-color="#d2d2d2"/><stop offset="1" stop-color="#848484"/></linearGradient></defs><rect x="1" y="1" width="46" height="45.3" rx="3.5" fill="url(#dw24)"/><g stroke="#3a4044" fill="none" stroke-width="2"><path d="M17 17L9 10M27 17L35 10M15 22L6 20M29 22L38 20M16 27L9 36M22 13L18 6M26 13L31 7M19 31L17 40"/></g><path d="M16 23Q16 14 23 14Q30 14 30 23Q28 19 23 19Q18 19 16 23Z" fill="#3a4044"/><path d="M17.5 27Q17.5 21 23 21Q28.5 21 28.5 27Q26 24 23 24Q20 24 17.5 27Z" fill="#3a4044"/><circle cx="31" cy="32" r="8.5" fill="#d8ecf8" stroke="#9ab8d0" stroke-width="1.6"/><path d="M40 42L46 47" stroke="#444" stroke-width="2.4"/><g transform="translate(25.4,25) scale(0.9545454545454546,0.8913043478260869)"><defs><clipPath id="sh25"><path d="M11 0.3Q6 3.3 0.6 3.3Q-0.6 14 11 22.7Q22.6 14 21.4 3.3Q16 3.3 11 0.3Z"/></clipPath></defs><g clip-path="url(#sh25)"><rect x="-1" y="-1" width="12" height="12" fill="#0a78d4"/><rect x="11" y="-1" width="12" height="12" fill="#fbb830"/><rect x="-1" y="11" width="12" height="13" fill="#fbb830"/><rect x="11" y="11" width="12" height="13" fill="#0a78d4"/><path d="M11 -1V24M-1 11H23" stroke="#fff" stroke-width="1.8"/></g><path d="M11 0.3Q6 3.3 0.6 3.3Q-0.6 14 11 22.7Q22.6 14 21.4 3.3Q16 3.3 11 0.3Z" fill="none" stroke="#a87818" stroke-width="0.6" opacity="0.8"/></g><rect x="0.4" y="35.4" width="12.4" height="12.4" fill="#f5f5f5" stroke="#c9ccd2" stroke-width="0.8"/><path d="M3.9 37.1H10V43L7.9 40.9Q5.9 42.6 5.7 46.8Q1.4 43.4 4.2 40Q4.9 39.3 5.9 38.9Z" fill="#2558a8"/></svg><div class="lb" style="left:-12px;top:787px;letter-spacing:-0.137px">Сканер</div><div class="lb" style="left:-12px;top:802px;letter-spacing:-0.01px">Dr.Web</div><svg style="position:absolute;left:90px;top:735px" width="48" height="48" viewBox="0 0 48 48"><path d="M9 3H31.7L41 12.3V45H9Z" fill="#fff"/><path d="M31.7 3V12.3H41Z" fill="#f4f4f4"/><path d="M31.7 3V12.3H41" fill="none" stroke="#b4b4b4" stroke-width="0.9"/><path d="M12 10.1H31.6" stroke="#8c8c8c" stroke-width="1.8"/><path d="M22.1 14.9H38M22.1 20H38M22.1 24.9H38M22.1 30H38M22.1 34.9H38M22.1 40H38" stroke="#8c8c8c" stroke-width="1.8"/><path d="M3.2 17.8L21 15.2V41.9L3.2 39.3Z" fill="#2b579a"/><text x="12.25" y="33.8" font-family="Liberation Sans,sans-serif" font-weight="bold" font-size="14.2" fill="#fff" stroke="#fff" stroke-width="0.5" text-anchor="middle">W</text></svg><div class="lb" style="left:64px;top:787px;letter-spacing:-0.272px">Spiski (2)</div><svg style="position:absolute;left:166px;top:735px" width="48" height="48" viewBox="0 0 48 48"><path d="M8 3H32L40 11V45H8Z" fill="#f5f5f7" stroke="#d0d0d0" stroke-width="0.8"/><path d="M32 3V11H40Z" fill="#d4d4d4"/><path d="M32 3V11H40" fill="none" stroke="#b4b4b4" stroke-width="0.9"/><path d="M13 14.5L35 12.5V18L13 20Z" fill="#0a78d8"/><path d="M16.5 14.2L19.8 19.4M22 13.7L25.3 18.9M27.5 13.2L30.8 18.4M33 12.7L35.5 16.6" stroke="#f5f5f7" stroke-width="2.3"/><path d="M13 22H35V34Q35 35.6 33.4 35.6H14.6Q13 35.6 13 34Z" fill="#0a78d8"/></svg><div class="lb" style="left:140px;top:787px;letter-spacing:-0.232px">Video_urok...</div><svg style="position:absolute;left:242px;top:735px" width="48" height="48" viewBox="0 0 48 48"><path d="M9 3H31.7L41 12.3V45H9Z" fill="#fff"/><path d="M31.7 3V12.3H41Z" fill="#f4f4f4"/><path d="M31.7 3V12.3H41" fill="none" stroke="#b4b4b4" stroke-width="0.9"/><path d="M12 10.1H31.6" stroke="#8c8c8c" stroke-width="1.8"/><path d="M22.1 14.9H38M22.1 20H38M22.1 24.9H38M22.1 30H38M22.1 34.9H38M22.1 40H38" stroke="#8c8c8c" stroke-width="1.8"/><path d="M3.2 17.8L21 15.2V41.9L3.2 39.3Z" fill="#2b579a"/><text x="12.25" y="33.8" font-family="Liberation Sans,sans-serif" font-weight="bold" font-size="14.2" fill="#fff" stroke="#fff" stroke-width="0.5" text-anchor="middle">W</text></svg><div class="lb" style="left:216px;top:787px;letter-spacing:-0.478px">Sovety_po_...</div><svg style="position:absolute;left:318px;top:735px" width="48" height="48" viewBox="0 0 48 48"><path d="M9 3H31.7L41 12.3V45H9Z" fill="#fff"/><path d="M25.3 18.1V9.4A8.7 8.7 0 1 0 34 18.1Z" fill="#919191"/><path d="M27.1 15.6V6.9A8.7 8.7 0 0 1 35.8 15.6Z" fill="#f4b59c"/><path d="M31.7 3V12.3H41Z" fill="#f4f4f4"/><path d="M31.7 3V12.3H41" fill="none" stroke="#b4b4b4" stroke-width="0.9"/><path d="M22.2 31H37.9M22.2 35H37.9M22.2 39H37.9" stroke="#f6b7a0" stroke-width="1.8"/><path d="M3.2 17.4L20.9 14.9V42.1L3.2 39.8Z" fill="#d24625"/><text x="12.6" y="33.9" font-family="Liberation Sans,sans-serif" font-weight="bold" font-size="15.6" fill="#fff" text-anchor="middle">P</text></svg><div class="lb" style="left:292px;top:787px;letter-spacing:-0.337px">Vstavka_flesh</div><svg style="position:absolute;left:394px;top:735px" width="48" height="48" viewBox="0 0 48 48"><path d="M9 3H31.7L41 12.3V45H9Z" fill="#fff"/><path d="M25.3 18.1V9.4A8.7 8.7 0 1 0 34 18.1Z" fill="#919191"/><path d="M27.1 15.6V6.9A8.7 8.7 0 0 1 35.8 15.6Z" fill="#f4b59c"/><path d="M31.7 3V12.3H41Z" fill="#f4f4f4"/><path d="M31.7 3V12.3H41" fill="none" stroke="#b4b4b4" stroke-width="0.9"/><path d="M22.2 31H37.9M22.2 35H37.9M22.2 39H37.9" stroke="#f6b7a0" stroke-width="1.8"/><path d="M3.2 17.4L20.9 14.9V42.1L3.2 39.8Z" fill="#d24625"/><text x="12.6" y="33.9" font-family="Liberation Sans,sans-serif" font-weight="bold" font-size="15.6" fill="#fff" text-anchor="middle">P</text></svg><div class="lb" style="left:368px;top:787px;letter-spacing:0.028px">Выпускное</div><div class="lb" style="left:368px;top:802px;letter-spacing:-0.121px">задание</div><svg style="position:absolute;left:470px;top:735px" width="48" height="48" viewBox="0 0 48 48"><path d="M8 3H32L40 11V45H8Z" fill="#fbfbfb" stroke="#c4c4c4" stroke-width="0.8"/><path d="M32 3V11H40Z" fill="#d0d0d0"/><path d="M32 3V11H40" fill="none" stroke="#b4b4b4" stroke-width="0.9"/><path d="M11 6.5H31M11 9.1H31M11 11.7H37M11 14.3H37M11 16.9H37M11 19.5H37M11 22.1H37M11 24.7H37M11 27.3H37M11 29.900000000000002H37M11 32.5H37M11 35.1H37M11 37.7H37M11 40.300000000000004H37M11 42.9H37" stroke="#9c9c9c" stroke-width="0.9"/></svg><div class="lb" style="left:444px;top:787px;letter-spacing:0.116px">ФИО.txt</div><svg style="position:absolute;left:546px;top:735px" width="48" height="48" viewBox="0 0 48 48"><path d="M8 3H32L40 11V45H8Z" fill="#f5f5f7" stroke="#d0d0d0" stroke-width="0.8"/><path d="M32 3V11H40Z" fill="#d4d4d4"/><path d="M32 3V11H40" fill="none" stroke="#b4b4b4" stroke-width="0.9"/><rect x="13.5" y="14.5" width="21" height="21" fill="#fff" stroke="#0a78d8" stroke-width="1"/><path d="M14 35V30L21.5 20.5L27 27L29.5 23.5L34 29V35Z" fill="#0a78d8"/><path d="M27.8 24L30.8 29" stroke="#fff" stroke-width="0.8"/></svg><div class="lb" style="left:520px;top:787px;letter-spacing:0.067px">Юноша</div><svg style="position:absolute;left:622px;top:735px" width="48" height="48" viewBox="0 0 48 48"><path d="M9 3H31.7L41 12.3V45H9Z" fill="#fff"/><path d="M31.7 3V12.3H41Z" fill="#f4f4f4"/><path d="M31.7 3V12.3H41" fill="none" stroke="#b4b4b4" stroke-width="0.9"/><path d="M12 10.1H31.6" stroke="#8c8c8c" stroke-width="1.8"/><path d="M22.1 14.9H38M22.1 20H38M22.1 24.9H38M22.1 30H38M22.1 34.9H38M22.1 40H38" stroke="#8c8c8c" stroke-width="1.8"/><path d="M3.2 17.8L21 15.2V41.9L3.2 39.3Z" fill="#2b579a"/><text x="12.25" y="33.8" font-family="Liberation Sans,sans-serif" font-weight="bold" font-size="14.2" fill="#fff" stroke="#fff" stroke-width="0.5" text-anchor="middle">W</text></svg><div class="lb" style="left:596px;top:787px;letter-spacing:-0.33px">Тест</div><div class="lb" style="left:596px;top:802px;letter-spacing:-0.063px">Алгоритм...</div><svg style="position:absolute;left:14px;top:839px" width="48" height="48" viewBox="0 0 48 48"><path d="M9 3H31.7L41 12.3V45H9Z" fill="#fff"/><path d="M31.7 3V12.3H41Z" fill="#f4f4f4"/><path d="M31.7 3V12.3H41" fill="none" stroke="#b4b4b4" stroke-width="0.9"/><path d="M12 10.1H31.6" stroke="#8c8c8c" stroke-width="1.8"/><path d="M22.1 14.9H38M22.1 20H38M22.1 24.9H38M22.1 30H38M22.1 34.9H38M22.1 40H38" stroke="#8c8c8c" stroke-width="1.8"/><path d="M3.2 17.8L21 15.2V41.9L3.2 39.3Z" fill="#2b579a"/><text x="12.25" y="33.8" font-family="Liberation Sans,sans-serif" font-weight="bold" font-size="14.2" fill="#fff" stroke="#fff" stroke-width="0.5" text-anchor="middle">W</text></svg><div class="lb" style="left:-12px;top:891px;letter-spacing:-0.216px">Задание</div><div class="lb" style="left:-12px;top:906px;letter-spacing:0.255px">Word</div><svg style="position:absolute;left:90px;top:839px" width="48" height="48" viewBox="0 0 48 48"><path d="M9 3H31.7L41 12.3V45H9Z" fill="#fff"/><path d="M25.3 18.1V9.4A8.7 8.7 0 1 0 34 18.1Z" fill="#919191"/><path d="M27.1 15.6V6.9A8.7 8.7 0 0 1 35.8 15.6Z" fill="#f4b59c"/><path d="M31.7 3V12.3H41Z" fill="#f4f4f4"/><path d="M31.7 3V12.3H41" fill="none" stroke="#b4b4b4" stroke-width="0.9"/><path d="M22.2 31H37.9M22.2 35H37.9M22.2 39H37.9" stroke="#f6b7a0" stroke-width="1.8"/><path d="M3.2 17.4L20.9 14.9V42.1L3.2 39.8Z" fill="#d24625"/><text x="12.6" y="33.9" font-family="Liberation Sans,sans-serif" font-weight="bold" font-size="15.6" fill="#fff" text-anchor="middle">P</text></svg><div class="lb" style="left:64px;top:891px;letter-spacing:-0.347px">Skype1</div><svg style="position:absolute;left:166px;top:839px" width="48" height="48" viewBox="0 0 48 48"><path d="M9 3H31.7L41 12.3V45H9Z" fill="#fff"/><path d="M31.7 3V12.3H41Z" fill="#f4f4f4"/><path d="M31.7 3V12.3H41" fill="none" stroke="#b4b4b4" stroke-width="0.9"/><path d="M12 10.1H31.6" stroke="#8c8c8c" stroke-width="1.8"/><path d="M22.1 14.9H38M22.1 20H38M22.1 24.9H38M22.1 30H38M22.1 34.9H38M22.1 40H38" stroke="#8c8c8c" stroke-width="1.8"/><path d="M3.2 17.8L21 15.2V41.9L3.2 39.3Z" fill="#2b579a"/><text x="12.25" y="33.8" font-family="Liberation Sans,sans-serif" font-weight="bold" font-size="14.2" fill="#fff" stroke="#fff" stroke-width="0.5" text-anchor="middle">W</text></svg><div class="lb" style="left:140px;top:891px;letter-spacing:-0.119px">animacija1</div><svg style="position:absolute;left:242px;top:839px" width="48" height="48" viewBox="0 0 48 48"><defs><linearGradient id="pg26" x1="0" y1="0" x2="1" y2="1"><stop offset="0" stop-color="#eaf2fd"/><stop offset="1" stop-color="#b8d0f0"/></linearGradient><radialGradient id="pg26m" cx="0.42" cy="0.35" r="0.7"><stop offset="0" stop-color="#fff"/><stop offset="0.55" stop-color="#bcb8e2"/><stop offset="1" stop-color="#8e8ac8"/></radialGradient><linearGradient id="pg26f" x1="0" y1="1" x2="1" y2="0"><stop offset="0" stop-color="#9cc8f8"/><stop offset="1" stop-color="#3a8ae0"/></linearGradient></defs><path d="M6.9 0H34.8L43 8.2V45.75H6.9Z" fill="url(#pg26)" stroke="#a8c6ee" stroke-width="0.7"/><path d="M34.8 0V8.2H43Z" fill="url(#pg26f)"/><path d="M13.1 33.1L29.2 13.3L47.2 25.1L31.6 46.8Z" fill="#1e5cc8"/><path d="M16.6 31L29.8 15.4L44.6 25L31.6 41.2Z" fill="#4a96ea"/><path d="M29.8 15.4L44.6 25L38.4 32.8L23.4 23Z" fill="#8cc0f6"/><path d="M14.6 34.4L31.5 44.6L46 26.4" stroke="#f4f8fc" stroke-width="1.5" fill="none"/><path d="M33.4 33L41.9 41.1" stroke="#e8501c" stroke-width="4.4" stroke-linecap="round"/><path d="M33.8 32.4L41.4 39.6" stroke="#fcd4bc" stroke-width="1.2" stroke-linecap="round"/><path d="M31 30.6L33.6 33.2" stroke="#d8d8e4" stroke-width="3.4"/><circle cx="26.5" cy="24.5" r="7.3" fill="url(#pg26m)" stroke="#3c3c5c" stroke-width="1.4"/><rect x="1" y="1.2" width="31.2" height="9.8" fill="#ee0000"/><text x="8" y="9.8" font-family="Liberation Sans,sans-serif" font-size="10.5" fill="#fff" textLength="17.4" lengthAdjust="spacingAndGlyphs">PDF</text></svg><div class="lb" style="left:216px;top:891px;letter-spacing:-0.346px">Prostye_kol...</div><svg style="position:absolute;left:318px;top:839px" width="48" height="48" viewBox="0 0 48 48"><path d="M9 3H31.7L41 12.3V45H9Z" fill="#fff"/><path d="M31.7 3V12.3H41Z" fill="#f4f4f4"/><path d="M31.7 3V12.3H41" fill="none" stroke="#b4b4b4" stroke-width="0.9"/><path d="M12.1 10.1H31.6M12.1 15H38M22.3 20H38M22.3 24.9H38M22.3 30H38M22.3 34.9H38M12.1 40H38" stroke="#8c8c8c" stroke-width="1.8"/><rect x="0.95" y="19.15" width="19.1" height="18.8" fill="#fff" stroke="#2b579a" stroke-width="1.9"/><text x="10.3" y="34.5" font-family="Liberation Serif,serif" font-weight="bold" font-style="italic" font-size="18" fill="#2b579a" stroke="#2b579a" stroke-width="0.8" text-anchor="middle">W</text></svg><div class="lb" style="left:292px;top:891px;letter-spacing:0.03px">2_Algoritm</div><svg style="position:absolute;left:394px;top:839px" width="48" height="48" viewBox="0 0 48 48"><path d="M9 3H31.7L41 12.3V45H9Z" fill="#fff"/><path d="M25.3 18.1V9.4A8.7 8.7 0 1 0 34 18.1Z" fill="#919191"/><path d="M27.1 15.6V6.9A8.7 8.7 0 0 1 35.8 15.6Z" fill="#f4b59c"/><path d="M31.7 3V12.3H41Z" fill="#f4f4f4"/><path d="M31.7 3V12.3H41" fill="none" stroke="#b4b4b4" stroke-width="0.9"/><path d="M22.2 31H37.9M22.2 35H37.9M22.2 39H37.9" stroke="#f6b7a0" stroke-width="1.8"/><path d="M3.2 17.4L20.9 14.9V42.1L3.2 39.8Z" fill="#d24625"/><text x="12.6" y="33.9" font-family="Liberation Sans,sans-serif" font-weight="bold" font-size="15.6" fill="#fff" text-anchor="middle">P</text></svg><div class="lb" style="left:368px;top:891px;letter-spacing:0.384px">logotip</div><svg style="position:absolute;left:470px;top:839px" width="48" height="48" viewBox="0 0 48 48"><path d="M9 3H31.7L41 12.3V45H9Z" fill="#fff"/><path d="M25.3 18.1V9.4A8.7 8.7 0 1 0 34 18.1Z" fill="#919191"/><path d="M27.1 15.6V6.9A8.7 8.7 0 0 1 35.8 15.6Z" fill="#f4b59c"/><path d="M31.7 3V12.3H41Z" fill="#f4f4f4"/><path d="M31.7 3V12.3H41" fill="none" stroke="#b4b4b4" stroke-width="0.9"/><path d="M22.2 31H37.9M22.2 35H37.9M22.2 39H37.9" stroke="#f6b7a0" stroke-width="1.8"/><path d="M3.2 17.4L20.9 14.9V42.1L3.2 39.8Z" fill="#d24625"/><text x="12.6" y="33.9" font-family="Liberation Sans,sans-serif" font-weight="bold" font-size="15.6" fill="#fff" text-anchor="middle">P</text></svg><div class="lb" style="left:444px;top:891px;letter-spacing:-0.14px">Осень</div><svg style="position:absolute;left:546px;top:839px" width="48" height="48" viewBox="0 0 48 48"><defs><linearGradient id="fg27" x1="0" x2="1"><stop offset="0" stop-color="#f7dc84"/><stop offset="1" stop-color="#f1cc5c"/></linearGradient></defs><path d="M8 5H32.8V26H35V39H15V12Z" fill="url(#fg27)"/><path d="M32.8 26H35V39H32.8Z" fill="#e6c04e"/><path d="M8 5L15.5 10.5V45.3L8 39.5Z" fill="#fbe9a8"/></svg><div class="lb" style="left:520px;top:891px;letter-spacing:0.067px">ретушь</div><svg style="position:absolute;left:622px;top:839px" width="48" height="48" viewBox="0 0 48 48"><path d="M9 3H31.7L41 12.3V45H9Z" fill="#fff"/><path d="M31.7 3V12.3H41Z" fill="#f4f4f4"/><path d="M31.7 3V12.3H41" fill="none" stroke="#b4b4b4" stroke-width="0.9"/><path d="M12.1 10.1H31.6M12.1 15H38M22.3 20H38M22.3 24.9H38M22.3 30H38M22.3 34.9H38M12.1 40H38" stroke="#8c8c8c" stroke-width="1.8"/><rect x="0.95" y="19.15" width="19.1" height="18.8" fill="#fff" stroke="#2b579a" stroke-width="1.9"/><text x="10.3" y="34.5" font-family="Liberation Serif,serif" font-weight="bold" font-style="italic" font-size="18" fill="#2b579a" stroke="#2b579a" stroke-width="0.8" text-anchor="middle">W</text></svg><div class="lb" style="left:596px;top:891px;letter-spacing:-0.576px">OP_Bazovy...</div><svg style="position:absolute;left:698px;top:839px" width="48" height="48" viewBox="0 0 48 48"><path d="M8 3H32L40 11V45H8Z" fill="#f5f5f7" stroke="#d0d0d0" stroke-width="0.8"/><path d="M32 3V11H40Z" fill="#d4d4d4"/><path d="M32 3V11H40" fill="none" stroke="#b4b4b4" stroke-width="0.9"/><path d="M13 14.5L35 12.5V18L13 20Z" fill="#0a78d8"/><path d="M16.5 14.2L19.8 19.4M22 13.7L25.3 18.9M27.5 13.2L30.8 18.4M33 12.7L35.5 16.6" stroke="#f5f5f7" stroke-width="2.3"/><path d="M13 22H35V34Q35 35.6 33.4 35.6H14.6Q13 35.6 13 34Z" fill="#0a78d8"/></svg><div class="lb" style="left:672px;top:891px;letter-spacing:0.046px">lin_algoritm2</div><svg style="position:absolute;left:774px;top:839px" width="48" height="48" viewBox="0 0 48 48"><defs><linearGradient id="ki28" x1="0" y1="0" x2="1" y2="1"><stop offset="0" stop-color="#3434a4"/><stop offset="1" stop-color="#1c1660"/></linearGradient></defs><rect x="1.5" y="1.2" width="45.1" height="45.6" rx="9.8" fill="url(#ki28)" stroke="#fff" stroke-width="2.4"/><text x="13.9" y="38" font-family="Liberation Sans,sans-serif" font-weight="bold" font-size="39.8" fill="#141050" stroke="#141050" stroke-width="1.1" textLength="21.5" lengthAdjust="spacingAndGlyphs">K</text><text x="12.9" y="37" font-family="Liberation Sans,sans-serif" font-weight="bold" font-size="39.8" fill="#fbe660" stroke="#fbe660" stroke-width="1.1" textLength="21.5" lengthAdjust="spacingAndGlyphs">K</text><g transform="translate(25.4,24.9) scale(0.9454545454545454,0.9347826086956522)"><defs><clipPath id="sh29"><path d="M11 0.3Q6 3.3 0.6 3.3Q-0.6 14 11 22.7Q22.6 14 21.4 3.3Q16 3.3 11 0.3Z"/></clipPath></defs><g clip-path="url(#sh29)"><rect x="-1" y="-1" width="12" height="12" fill="#0a78d4"/><rect x="11" y="-1" width="12" height="12" fill="#fbb830"/><rect x="-1" y="11" width="12" height="13" fill="#fbb830"/><rect x="11" y="11" width="12" height="13" fill="#0a78d4"/><path d="M11 -1V24M-1 11H23" stroke="#fff" stroke-width="1.8"/></g><path d="M11 0.3Q6 3.3 0.6 3.3Q-0.6 14 11 22.7Q22.6 14 21.4 3.3Q16 3.3 11 0.3Z" fill="none" stroke="#a87818" stroke-width="0.6" opacity="0.8"/></g></svg><div class="lb" style="left:748px;top:891px;letter-spacing:-0.085px">kumir_setup</div><svg style="position:absolute;left:850px;top:839px" width="48" height="48" viewBox="0 0 48 48"><defs><linearGradient id="fg30" x1="0" x2="1"><stop offset="0" stop-color="#f7dc84"/><stop offset="1" stop-color="#f1cc5c"/></linearGradient></defs><path d="M8 5H32.8V26H35V39H15V12Z" fill="url(#fg30)"/><path d="M32.8 26H35V39H32.8Z" fill="#e6c04e"/><path d="M8 5L15.5 10.5V45.3L8 39.5Z" fill="#fbe9a8"/></svg><div class="lb" style="left:824px;top:891px;letter-spacing:-0.186px">Ispolniteli_...</div><svg style="position:absolute;left:14px;top:943px" width="48" height="48" viewBox="0 0 48 48"><path d="M9 3H31.7L41 12.3V45H9Z" fill="#fff"/><path d="M31.7 3V12.3H41Z" fill="#f4f4f4"/><path d="M31.7 3V12.3H41" fill="none" stroke="#b4b4b4" stroke-width="0.9"/><path d="M12 10.1H31.6" stroke="#8c8c8c" stroke-width="1.8"/><path d="M22.1 14.9H38M22.1 20H38M22.1 24.9H38M22.1 30H38M22.1 34.9H38M22.1 40H38" stroke="#8c8c8c" stroke-width="1.8"/><path d="M3.2 17.8L21 15.2V41.9L3.2 39.3Z" fill="#2b579a"/><text x="12.25" y="33.8" font-family="Liberation Sans,sans-serif" font-weight="bold" font-size="14.2" fill="#fff" stroke="#fff" stroke-width="0.5" text-anchor="middle">W</text></svg><div class="lb" style="left:-12px;top:995px;letter-spacing:-0.219px">Vychislenij...</div><div class="lb" style="left:-12px;top:1010px;letter-spacing:-0.317px">(1)</div><svg style="position:absolute;left:90px;top:943px" width="48" height="48" viewBox="0 0 48 48"><path d="M9 3H31.7L41 12.3V45H9Z" fill="#fff"/><path d="M25.3 18.1V9.4A8.7 8.7 0 1 0 34 18.1Z" fill="#919191"/><path d="M27.1 15.6V6.9A8.7 8.7 0 0 1 35.8 15.6Z" fill="#f4b59c"/><path d="M31.7 3V12.3H41Z" fill="#f4f4f4"/><path d="M31.7 3V12.3H41" fill="none" stroke="#b4b4b4" stroke-width="0.9"/><path d="M22.2 31H37.9M22.2 35H37.9M22.2 39H37.9" stroke="#f6b7a0" stroke-width="1.8"/><path d="M3.2 17.4L20.9 14.9V42.1L3.2 39.8Z" fill="#d24625"/><text x="12.6" y="33.9" font-family="Liberation Sans,sans-serif" font-weight="bold" font-size="15.6" fill="#fff" text-anchor="middle">P</text></svg><div class="lb" style="left:64px;top:995px;letter-spacing:-0.375px">Skype</div><svg style="position:absolute;left:166px;top:943px" width="48" height="48" viewBox="0 0 48 48"><path d="M9 3H31.7L41 12.3V45H9Z" fill="#fff"/><path d="M31.7 3V12.3H41Z" fill="#f4f4f4"/><path d="M31.7 3V12.3H41" fill="none" stroke="#b4b4b4" stroke-width="0.9"/><path d="M12 10.1H31.6" stroke="#8c8c8c" stroke-width="1.8"/><path d="M22.1 14.9H38M22.1 20H38M22.1 24.9H38M22.1 30H38M22.1 34.9H38M22.1 40H38" stroke="#8c8c8c" stroke-width="1.8"/><path d="M3.2 17.8L21 15.2V41.9L3.2 39.3Z" fill="#2b579a"/><text x="12.25" y="33.8" font-family="Liberation Sans,sans-serif" font-weight="bold" font-size="14.2" fill="#fff" stroke="#fff" stroke-width="0.5" text-anchor="middle">W</text></svg><div class="lb" style="left:140px;top:995px;letter-spacing:-0.209px">Dobavlenie...</div><svg style="position:absolute;left:242px;top:943px" width="48" height="48" viewBox="0 0 48 48"><defs><linearGradient id="pg31" x1="0" y1="0" x2="1" y2="1"><stop offset="0" stop-color="#eaf2fd"/><stop offset="1" stop-color="#b8d0f0"/></linearGradient><radialGradient id="pg31m" cx="0.42" cy="0.35" r="0.7"><stop offset="0" stop-color="#fff"/><stop offset="0.55" stop-color="#bcb8e2"/><stop offset="1" stop-color="#8e8ac8"/></radialGradient><linearGradient id="pg31f" x1="0" y1="1" x2="1" y2="0"><stop offset="0" stop-color="#9cc8f8"/><stop offset="1" stop-color="#3a8ae0"/></linearGradient></defs><path d="M6.9 0H34.8L43 8.2V45.75H6.9Z" fill="url(#pg31)" stroke="#a8c6ee" stroke-width="0.7"/><path d="M34.8 0V8.2H43Z" fill="url(#pg31f)"/><path d="M13.1 33.1L29.2 13.3L47.2 25.1L31.6 46.8Z" fill="#1e5cc8"/><path d="M16.6 31L29.8 15.4L44.6 25L31.6 41.2Z" fill="#4a96ea"/><path d="M29.8 15.4L44.6 25L38.4 32.8L23.4 23Z" fill="#8cc0f6"/><path d="M14.6 34.4L31.5 44.6L46 26.4" stroke="#f4f8fc" stroke-width="1.5" fill="none"/><path d="M33.4 33L41.9 41.1" stroke="#e8501c" stroke-width="4.4" stroke-linecap="round"/><path d="M33.8 32.4L41.4 39.6" stroke="#fcd4bc" stroke-width="1.2" stroke-linecap="round"/><path d="M31 30.6L33.6 33.2" stroke="#d8d8e4" stroke-width="3.4"/><circle cx="26.5" cy="24.5" r="7.3" fill="url(#pg31m)" stroke="#3c3c5c" stroke-width="1.4"/><rect x="1" y="1.2" width="31.2" height="9.8" fill="#ee0000"/><text x="8" y="9.8" font-family="Liberation Sans,sans-serif" font-size="10.5" fill="#fff" textLength="17.4" lengthAdjust="spacingAndGlyphs">PDF</text></svg><div class="lb" style="left:216px;top:995px;letter-spacing:-0.624px">StylePix_PDF</div><svg style="position:absolute;left:318px;top:943px" width="48" height="48" viewBox="0 0 48 48"><path d="M9 3H31.7L41 12.3V45H9Z" fill="#fff"/><path d="M31.7 3V12.3H41Z" fill="#f4f4f4"/><path d="M31.7 3V12.3H41" fill="none" stroke="#b4b4b4" stroke-width="0.9"/><path d="M12.1 10.1H31.6M12.1 15H38M22.3 20H38M22.3 24.9H38M22.3 30H38M22.3 34.9H38M12.1 40H38" stroke="#8c8c8c" stroke-width="1.8"/><rect x="0.95" y="19.15" width="19.1" height="18.8" fill="#fff" stroke="#2b579a" stroke-width="1.9"/><text x="10.3" y="34.5" font-family="Liberation Serif,serif" font-weight="bold" font-style="italic" font-size="18" fill="#2b579a" stroke="#2b579a" stroke-width="0.8" text-anchor="middle">W</text></svg><div class="lb" style="left:292px;top:995px;letter-spacing:-0.553px">2_OP_Algo...</div><svg style="position:absolute;left:394px;top:943px" width="48" height="48" viewBox="0 0 48 48"><path d="M7.8 2.8H39V26.3L41.9 29.2V45.1H7.8Z" fill="#fbe08a"/><path d="M7.8 2.8H39V4.6H7.8Z" fill="#f2cc58"/><path d="M33 4.6H39V26.3L41.9 29.2V45.1H33Z" fill="#f8d672"/><path d="M10.8 7V42" stroke="#fdf0bc" stroke-width="1"/><path d="M8.3 3.3V44.6H41.4" stroke="#eec85a" stroke-width="1" fill="none"/><path d="M34.8 45V32Q34.8 29.5 37 28.2L39.5 26.8" stroke="#fdeeb4" stroke-width="1.3" fill="none"/><path d="M29.55 18V41.5" stroke="#ece8d4" stroke-width="3.7"/><path d="M29.55 18V41.5" stroke="#5e5a46" stroke-width="3.7" stroke-dasharray="1.1 1.05"/><path d="M29.55 18V41.5" stroke="#bcb8a4" stroke-width="0.9"/><rect x="27.6" y="41" width="4" height="4.1" fill="#b4b4b4"/><path d="M26.3 3.5Q26.3 1.9 28 1.9H31Q33 1.9 33 3.5V11L32 19H27.4L26.3 11Z" fill="#cfcfcf" stroke="#8a8a8a" stroke-width="0.6"/><rect x="28.2" y="7" width="2.8" height="2" fill="#666"/><rect x="28.2" y="14.8" width="2.8" height="2.6" fill="#3a3a3a"/><path d="M27.2 4.5H32.2" stroke="#f4f4f4" stroke-width="1"/></svg><div class="lb" style="left:368px;top:995px;letter-spacing:-0.167px">Видео</div><svg style="position:absolute;left:470px;top:943px" width="48" height="48" viewBox="0 0 48 48"><path d="M9 3H31.7L41 12.3V45H9Z" fill="#fff"/><path d="M31.7 3V12.3H41Z" fill="#f4f4f4"/><path d="M31.7 3V12.3H41" fill="none" stroke="#b4b4b4" stroke-width="0.9"/><path d="M12.1 10.1H31.6M12.1 15H38M22.3 20H38M22.3 24.9H38M22.3 30H38M22.3 34.9H38M12.1 40H38" stroke="#8c8c8c" stroke-width="1.8"/><rect x="0.95" y="19.15" width="19.1" height="18.8" fill="#fff" stroke="#2b579a" stroke-width="1.9"/><text x="10.3" y="34.5" font-family="Liberation Serif,serif" font-weight="bold" font-style="italic" font-size="18" fill="#2b579a" stroke="#2b579a" stroke-width="0.8" text-anchor="middle">W</text></svg><div class="lb" style="left:444px;top:995px;letter-spacing:-0.428px">Sozdanie_p...</div><svg style="position:absolute;left:546px;top:943px" width="48" height="48" viewBox="0 0 48 48"><defs><linearGradient id="fg32" x1="0" x2="1"><stop offset="0" stop-color="#f7dc84"/><stop offset="1" stop-color="#f1cc5c"/></linearGradient></defs><path d="M8 5H32.8V26H35V39H15V12Z" fill="url(#fg32)"/><path d="M32.8 26H35V39H32.8Z" fill="#e6c04e"/><path d="M8 5L15.5 10.5V45.3L8 39.5Z" fill="#fbe9a8"/><rect x="0.4" y="35.4" width="12.4" height="12.4" fill="#f5f5f5" stroke="#c9ccd2" stroke-width="0.8"/><path d="M3.9 37.1H10V43L7.9 40.9Q5.9 42.6 5.7 46.8Q1.4 43.4 4.2 40Q4.9 39.3 5.9 38.9Z" fill="#2558a8"/></svg><div class="lb" style="left:520px;top:995px;letter-spacing:0.178px">Фотки 2015 -</div><div class="lb" style="left:520px;top:1010px;letter-spacing:-0.072px">Ярлык (2)</div><svg style="position:absolute;left:622px;top:943px" width="48" height="48" viewBox="0 0 48 48"><path d="M9 3H31.7L41 12.3V45H9Z" fill="#fff"/><path d="M25.3 18.1V9.4A8.7 8.7 0 1 0 34 18.1Z" fill="#919191"/><path d="M27.1 15.6V6.9A8.7 8.7 0 0 1 35.8 15.6Z" fill="#f4b59c"/><path d="M31.7 3V12.3H41Z" fill="#f4f4f4"/><path d="M31.7 3V12.3H41" fill="none" stroke="#b4b4b4" stroke-width="0.9"/><path d="M22.3 30.9H38M22.3 34.9H38M22.3 38.9H38" stroke="#f6b7a0" stroke-width="1.8"/><rect x="0" y="18.2" width="21" height="20.7" fill="#d24625"/><rect x="2.45" y="20.65" width="16.1" height="15.8" fill="none" stroke="#fff" stroke-width="1.3"/><path d="M5 24.2H16.2" stroke="#fff" stroke-width="1.3"/><circle cx="8.8" cy="29.8" r="3.9" fill="#fff"/><path d="M8.8 29.8V25.9A3.9 3.9 0 0 1 12.7 29.8Z" fill="#d24625"/><path d="M9.8 28.8V25.6A3.5 3.5 0 0 1 13.1 28.8Z" fill="#fff"/><path d="M14.6 27.3H17M14.6 29.5H17M14.6 31.6H17" stroke="#fff" stroke-width="1.1"/></svg><div class="lb" style="left:596px;top:995px;letter-spacing:-0.527px">2_1_Osnovn...</div><svg style="position:absolute;left:698px;top:943px" width="48" height="48" viewBox="0 0 48 48"><path d="M8 3H32L40 11V45H8Z" fill="#f5f5f7" stroke="#d0d0d0" stroke-width="0.8"/><path d="M32 3V11H40Z" fill="#d4d4d4"/><path d="M32 3V11H40" fill="none" stroke="#b4b4b4" stroke-width="0.9"/><path d="M13 14.5L35 12.5V18L13 20Z" fill="#0a78d8"/><path d="M16.5 14.2L19.8 19.4M22 13.7L25.3 18.9M27.5 13.2L30.8 18.4M33 12.7L35.5 16.6" stroke="#f5f5f7" stroke-width="2.3"/><path d="M13 22H35V34Q35 35.6 33.4 35.6H14.6Q13 35.6 13 34Z" fill="#0a78d8"/></svg><div class="lb" style="left:672px;top:995px;letter-spacing:0.046px">lin_algoritm2</div><div class="lb" style="left:672px;top:1010px;letter-spacing:-0.317px">(1)</div><svg style="position:absolute;left:774px;top:943px" width="48" height="48" viewBox="0 0 48 48"><defs><linearGradient id="ki33" x1="0" y1="0" x2="1" y2="1"><stop offset="0" stop-color="#3434a4"/><stop offset="1" stop-color="#1c1660"/></linearGradient></defs><rect x="1.5" y="1.2" width="45.1" height="45.6" rx="9.8" fill="url(#ki33)" stroke="#fff" stroke-width="2.4"/><text x="13.9" y="38" font-family="Liberation Sans,sans-serif" font-weight="bold" font-size="39.8" fill="#141050" stroke="#141050" stroke-width="1.1" textLength="21.5" lengthAdjust="spacingAndGlyphs">K</text><text x="12.9" y="37" font-family="Liberation Sans,sans-serif" font-weight="bold" font-size="39.8" fill="#fbe660" stroke="#fbe660" stroke-width="1.1" textLength="21.5" lengthAdjust="spacingAndGlyphs">K</text><g transform="translate(25.4,24.9) scale(0.9454545454545454,0.9347826086956522)"><defs><clipPath id="sh34"><path d="M11 0.3Q6 3.3 0.6 3.3Q-0.6 14 11 22.7Q22.6 14 21.4 3.3Q16 3.3 11 0.3Z"/></clipPath></defs><g clip-path="url(#sh34)"><rect x="-1" y="-1" width="12" height="12" fill="#0a78d4"/><rect x="11" y="-1" width="12" height="12" fill="#fbb830"/><rect x="-1" y="11" width="12" height="13" fill="#fbb830"/><rect x="11" y="11" width="12" height="13" fill="#0a78d4"/><path d="M11 -1V24M-1 11H23" stroke="#fff" stroke-width="1.8"/></g><path d="M11 0.3Q6 3.3 0.6 3.3Q-0.6 14 11 22.7Q22.6 14 21.4 3.3Q16 3.3 11 0.3Z" fill="none" stroke="#a87818" stroke-width="0.6" opacity="0.8"/></g></svg><div class="lb" style="left:748px;top:995px;letter-spacing:-0.085px">kumir_setup</div><div class="lb" style="left:748px;top:1010px;letter-spacing:-0.317px">(1)</div><svg style="position:absolute;left:850px;top:943px" width="48" height="48" viewBox="0 0 48 48"><defs><linearGradient id="np35" x1="0" y1="0" x2="0.6" y2="1"><stop offset="0" stop-color="#d4f0f6"/><stop offset="0.6" stop-color="#58b4c8"/><stop offset="1" stop-color="#0a3a4a"/></linearGradient></defs><path d="M17.5 3L48 6V42L2 32Z" fill="url(#np35)"/><path d="M17.5 3L48 6V9L17 6Z" fill="#9a9a9a"/><path d="M12 35L48 42V45L11 37Z" fill="#e8f4f8"/></svg><div class="lb" style="left:824px;top:995px;letter-spacing:-0.385px">z1</div></div>
<div id="explorer" style="position:absolute;left:673px;top:259px;width:1147px;height:566px;background:#808080;box-shadow:inset 0 0 0 1px #6c6c6c;overflow:hidden"><div style="position:absolute;left:8px;top:31px;width:1131px;height:527px;background:#fff;"></div><svg style="position:absolute;left:18px;top:7px" width="14" height="16" viewBox="0 0 14 16"><path d="M0.5 0.5H10.5V10H13.5V15.5H0.5Z" fill="#f7de86" stroke="#e8c85e" stroke-width="1"/><path d="M10.8 10H13.5V15.5H10.8Z" fill="#edcc62"/></svg><div style="position:absolute;left:39px;top:9px;width:1px;height:13px;background:#a8a8a8;"></div><svg style="position:absolute;left:51px;top:7px" width="12" height="16" viewBox="0 0 12 16"><path d="M0.5 0.5H8L11.5 4V15.5H0.5Z" fill="#fafafa" stroke="#ccc" stroke-width="0.8"/><path d="M2.5 9L5 11.5L9.5 6" stroke="#e8501c" stroke-width="1.6" fill="none"/></svg><svg style="position:absolute;left:73px;top:7px" width="14" height="16" viewBox="0 0 14 16"><path d="M0.5 0.5H10.5V10H13.5V15.5H0.5Z" fill="#f7de86" stroke="#e8c85e" stroke-width="1"/><path d="M10.8 10H13.5V15.5H10.8Z" fill="#edcc62"/></svg><svg style="position:absolute;left:93px;top:13px" width="9" height="8" viewBox="0 0 9 8"><rect x="0" y="0" width="9" height="1.4" fill="#000"/><path d="M0 3H9L4.5 7.5Z" fill="#000"/></svg><div style="position:absolute;left:109px;top:9px;width:1px;height:13px;background:#a8a8a8;"></div><div style="position:absolute;left:117px;top:7px;font-size:12px;line-height:16px;color:#9c9c9c;white-space:nowrap;letter-spacing:-1.092px;">TVORCHESKOE</div><div style="position:absolute;left:1000px;top:1px;width:1px;height:30px;background:#767676;"></div><div style="position:absolute;left:1047px;top:1px;width:1px;height:30px;background:#767676;"></div><div style="position:absolute;left:1093px;top:1px;width:1px;height:30px;background:#767676;"></div><div style="position:absolute;left:1000px;top:30px;width:139px;height:1px;background:#767676;"></div><div style="position:absolute;left:1019px;top:16px;width:10px;height:3px;background:#5c5c5c;"></div><div style="position:absolute;left:1066px;top:11px;width:6px;height:4px;border:2px solid #5c5c5c"></div><div style="position:absolute;left:1093px;top:5px;font-size:15px;line-height:18px;color:#5c5c5c;white-space:nowrap;font-weight:bold;width:46px;text-align:center;">x</div><div style="position:absolute;left:8px;top:31px;width:56px;height:23px;background:#1979ca;"></div><div style="position:absolute;left:8px;top:35px;font-size:12px;line-height:16px;color:#fff;white-space:nowrap;width:56px;text-align:center;">Файл</div><div style="position:absolute;left:78px;top:35px;font-size:12px;line-height:16px;color:#3c3c3c;white-space:nowrap;letter-spacing:-0.596px;">Главная</div><div style="position:absolute;left:149px;top:35px;font-size:12px;line-height:16px;color:#3c3c3c;white-space:nowrap;letter-spacing:-0.426px;">Поделиться</div><div style="position:absolute;left:8px;top:54px;width:1131px;height:1px;background:#dadbdc;"></div><svg style="position:absolute;left:1101px;top:38px" width="10" height="7" viewBox="0 0 10 7"><path d="M1 1L5 5L9 1" stroke="#8a8a8a" stroke-width="1.2" fill="none"/></svg><svg style="position:absolute;left:1121px;top:35px" width="14" height="14" viewBox="0 0 14 14"><circle cx="7" cy="7" r="7" fill="#0a6fd1"/><text x="7" y="11" font-family="Liberation Sans,sans-serif" font-weight="bold" font-size="11" fill="#fff" text-anchor="middle">?</text></svg><svg style="position:absolute;left:21px;top:65px" width="13" height="12" viewBox="0 0 13 12"><path d="M12 6H1.5M6 1L1 6L6 11" stroke="#d0d0d0" stroke-width="1.4" fill="none"/></svg><svg style="position:absolute;left:51px;top:65px" width="13" height="12" viewBox="0 0 13 12"><path d="M1 6H11.5M7 1L12 6L7 11" stroke="#d0d0d0" stroke-width="1.4" fill="none"/></svg><svg style="position:absolute;left:77px;top:68px" width="8" height="6" viewBox="0 0 8 6"><path d="M1 1L4 4L7 1" stroke="#b0b0b0" stroke-width="1.3" fill="none"/></svg><svg style="position:absolute;left:95px;top:64px" width="13" height="14" viewBox="0 0 13 14"><path d="M6.5 13V1.5M1 7L6.5 1.5L12 7" stroke="#7a7a7a" stroke-width="1.6" fill="none"/></svg><div style="position:absolute;left:113px;top:60px;width:760px;height:24px;background:#fff;box-shadow:inset 0 0 0 1px #8a8a8a"></div><svg style="position:absolute;left:119px;top:64px" width="14" height="16" viewBox="0 0 14 16"><path d="M0.5 0.5H10.5V10H13.5V15.5H0.5Z" fill="#f7de86" stroke="#e8c85e" stroke-width="1"/><path d="M10.8 10H13.5V15.5H10.8Z" fill="#edcc62"/></svg><svg style="position:absolute;left:140px;top:68px" width="6" height="8" viewBox="0 0 6 8"><path d="M1 1L4.5 4L1 7" stroke="#6a6a6a" stroke-width="1.3" fill="none"/></svg><div style="position:absolute;left:154px;top:64px;font-size:12px;line-height:16px;color:#000;white-space:nowrap;letter-spacing:-0.911px;">TVORCHESKOE</div><div style="position:absolute;left:855px;top:60px;width:24px;height:24px;background:#fff;box-shadow:inset 0 0 0 1px #8a8a8a"></div><svg style="position:absolute;left:865px;top:66px" width="12" height="12" viewBox="0 0 12 12"><path d="M2 2.5A5 5 0 1 1 1 6.5" stroke="#6a6a6a" stroke-width="1.3" fill="none"/><path d="M0 0.5H4V4.5Z" fill="#6a6a6a"/></svg><div style="position:absolute;left:888px;top:60px;width:240px;height:24px;background:#fff;box-shadow:inset 0 0 0 1px #8a8a8a"></div><div style="position:absolute;left:898px;top:64px;font-size:12px;line-height:16px;color:#6d6d6d;white-space:nowrap;letter-spacing:-0.663px;">Поиск: TVORCHESKOE</div><svg style="position:absolute;left:1105px;top:65px" width="14" height="14" viewBox="0 0 14 14"><circle cx="8.8" cy="5.2" r="3.6" stroke="#5a5a5a" stroke-width="1.5" fill="none"/><path d="M6.2 7.8L1.5 12.5" stroke="#5a5a5a" stroke-width="1.8"/></svg><div style="position:absolute;left:8px;top:99px;width:156px;height:22px;background:#ededed;"></div><div style="position:absolute;left:167px;top:91px;width:1px;height:450px;background:#f0f0f0;"></div><div style="position:absolute;left:53px;top:102px;width:111px;overflow:hidden;font-size:12px;line-height:16px;color:#000;white-space:nowrap;letter-spacing:-0.052px">Панель быстрого доступа</div><svg style="position:absolute;left:33px;top:102px" width="16" height="16" viewBox="0 0 16 16"><path d="M9.5 1L11.3 6H16L12.2 9L13.8 14.5L9.5 11.2L5.2 14.5L6.8 9L3 6H7.7Z" fill="#2c8ae8"/><path d="M0 8H4M0.5 11H4M2 13.5H5" stroke="#2c8ae8" stroke-width="1"/></svg><div style="position:absolute;left:61px;top:126px;font-size:12px;line-height:16px;color:#000;white-space:nowrap;letter-spacing:-0.027px;">Рабочий стол</div><svg style="position:absolute;left:40px;top:127px" width="17" height="14" viewBox="0 0 17 14"><rect x="0.5" y="0.5" width="16" height="12" fill="#1e90f0" stroke="#1877d2"/><path d="M2 10.5H15" stroke="#cfe6fb" stroke-width="1" stroke-dasharray="1 1"/></svg><svg style="position:absolute;left:150px;top:128px" width="13" height="13" viewBox="0 0 13 13"><path d="M7.5 1L11 4.5L9.8 5.2L7.2 7.8L7 10L5.2 8.4L1.5 11.5L4.6 7.8L3 6L5.2 5.8L7.8 3.2Z" fill="#8a8f96"/></svg><div style="position:absolute;left:61px;top:150px;font-size:12px;line-height:16px;color:#000;white-space:nowrap;letter-spacing:-0.037px;">Загрузки</div><svg style="position:absolute;left:40px;top:149px" width="17" height="17" viewBox="0 0 17 17"><path d="M6 0.5H11V8H16L8.5 16L1 8H6Z" fill="#2c8ae8"/></svg><svg style="position:absolute;left:150px;top:152px" width="13" height="13" viewBox="0 0 13 13"><path d="M7.5 1L11 4.5L9.8 5.2L7.2 7.8L7 10L5.2 8.4L1.5 11.5L4.6 7.8L3 6L5.2 5.8L7.8 3.2Z" fill="#8a8f96"/></svg><div style="position:absolute;left:61px;top:174px;font-size:12px;line-height:16px;color:#000;white-space:nowrap;letter-spacing:0.016px;">Документы</div><svg style="position:absolute;left:42px;top:174px" width="13" height="16" viewBox="0 0 13 16"><path d="M0.5 0.5H8.5L12.5 4.5V15.5H0.5Z" fill="#fff" stroke="#8c8c8c"/><path d="M3 4.5H8M3 7H10M3 9.5H10M3 12H10" stroke="#3a8ee0" stroke-width="1"/></svg><svg style="position:absolute;left:150px;top:176px" width="13" height="13" viewBox="0 0 13 13"><path d="M7.5 1L11 4.5L9.8 5.2L7.2 7.8L7 10L5.2 8.4L1.5 11.5L4.6 7.8L3 6L5.2 5.8L7.8 3.2Z" fill="#8a8f96"/></svg><div style="position:absolute;left:61px;top:198px;font-size:12px;line-height:16px;color:#000;white-space:nowrap;letter-spacing:-0.038px;">Изображения</div><svg style="position:absolute;left:40px;top:200px" width="17" height="13" viewBox="0 0 17 13"><rect x="0.5" y="0.5" width="16" height="12" fill="#fff" stroke="#9a9a9a"/><rect x="2" y="2" width="13" height="9" fill="#9fc4e4"/><path d="M2 11L6 6.5L9.5 9L12 7.5L15 10V11Z" fill="#4e7a4a"/></svg><svg style="position:absolute;left:150px;top:200px" width="13" height="13" viewBox="0 0 13 13"><path d="M7.5 1L11 4.5L9.8 5.2L7.2 7.8L7 10L5.2 8.4L1.5 11.5L4.6 7.8L3 6L5.2 5.8L7.8 3.2Z" fill="#8a8f96"/></svg><div style="position:absolute;left:61px;top:222px;font-size:12px;line-height:16px;color:#000;white-space:nowrap;letter-spacing:-1.183px;">TVORCHESKOE</div><svg style="position:absolute;left:42px;top:222px" width="14" height="16" viewBox="0 0 14 16"><path d="M0.5 0.5H10.5V10H13.5V15.5H0.5Z" fill="#f7de86" stroke="#e8c85e" stroke-width="1"/><path d="M10.8 10H13.5V15.5H10.8Z" fill="#edcc62"/></svg><div style="position:absolute;left:61px;top:246px;font-size:12px;line-height:16px;color:#000;white-space:nowrap;letter-spacing:-0.289px;">задания по Scratch</div><svg style="position:absolute;left:42px;top:246px" width="14" height="16" viewBox="0 0 14 16"><path d="M0.5 0.5H10.5V10H13.5V15.5H0.5Z" fill="#f7de86" stroke="#e8c85e" stroke-width="1"/><path d="M10.8 10H13.5V15.5H10.8Z" fill="#edcc62"/></svg><div style="position:absolute;left:61px;top:270px;font-size:12px;line-height:16px;color:#000;white-space:nowrap;letter-spacing:-0.071px;">Новый том (D:)</div><svg style="position:absolute;left:41px;top:274px" width="15" height="9" viewBox="0 0 15 9"><path d="M2 0.5H13L14.5 4.5H0.5Z" fill="#d0d0d0"/><rect x="0.5" y="4" width="14" height="4.5" rx="0.8" fill="#3a3a3a"/><rect x="11" y="5.5" width="2" height="1.5" fill="#38d048"/></svg><div style="position:absolute;left:61px;top:294px;font-size:12px;line-height:16px;color:#000;white-space:nowrap;letter-spacing:-0.241px;">Самостоятельная</div><svg style="position:absolute;left:42px;top:294px" width="14" height="16" viewBox="0 0 14 16"><path d="M0.5 0.5H10.5V10H13.5V15.5H0.5Z" fill="#f7de86" stroke="#e8c85e" stroke-width="1"/><path d="M10.8 10H13.5V15.5H10.8Z" fill="#edcc62"/></svg><div style="position:absolute;left:53px;top:326px;font-size:12px;line-height:16px;color:#000;white-space:nowrap;letter-spacing:-0.21px;">OneDrive</div><svg style="position:absolute;left:32px;top:328px" width="17" height="11" viewBox="0 0 17 11"><path d="M4 10.5H14A3 3 0 0 0 14 5A4.5 4.5 0 0 0 5.5 4A3.3 3.3 0 0 0 4 10.5Z" fill="#1565c0"/><path d="M1 10.5H5A2.5 2.5 0 0 1 4 6A3 3 0 0 0 1 10.5Z" fill="#1565c0"/></svg><div style="position:absolute;left:53px;top:358px;font-size:12px;line-height:16px;color:#000;white-space:nowrap;letter-spacing:-0.052px;">Этот компьютер</div><svg style="position:absolute;left:32px;top:359px" width="17" height="15" viewBox="0 0 17 15"><rect x="0.5" y="0.5" width="16" height="10" fill="#3eb0f4" stroke="#a8c8e0" stroke-width="1"/><path d="M5 12.5H12M3 14.5H14" stroke="#9aa4ae" stroke-width="1"/></svg><div style="position:absolute;left:53px;top:390px;font-size:12px;line-height:16px;color:#000;white-space:nowrap;letter-spacing:-0.422px;">Сеть</div><svg style="position:absolute;left:32px;top:390px" width="17" height="16" viewBox="0 0 17 16"><circle cx="10.5" cy="6" r="5.5" fill="#5aa6e8"/><path d="M6 4Q10 2 15 5M6.5 8Q10 6.5 15.5 8" stroke="#cde6c0" stroke-width="1.3" fill="none"/><rect x="0.5" y="7.5" width="10" height="6" fill="#3eb0f4" stroke="#cfe0f0" stroke-width="1"/><path d="M3 15.5H8" stroke="#9aa4ae"/></svg><div style="position:absolute;left:53px;top:422px;font-size:12px;line-height:16px;color:#000;white-space:nowrap;letter-spacing:0.065px;">Домашняя группа</div><svg style="position:absolute;left:32px;top:423px" width="17" height="14" viewBox="0 0 17 14"><circle cx="3" cy="5" r="2" fill="#1a86d8"/><circle cx="11" cy="3.2" r="3" fill="#3aa648"/><circle cx="12.5" cy="10" r="3.2" fill="#1a6fc8"/><path d="M3 5L11 3.2L12.5 10Z" stroke="#8ab" stroke-width="0.6" fill="none"/></svg><div style="position:absolute;left:185px;top:95px;font-size:12px;line-height:16px;color:#4c607a;white-space:nowrap;">Имя</div><div style="position:absolute;left:168px;top:114px;width:700px;height:1px;background:#e5e5e5;"></div><div style="position:absolute;left:168px;top:90px;width:700px;height:1px;background:#f0f0f0;"></div><svg style="position:absolute;left:186px;top:123px" width="16" height="16" viewBox="0 0 16 16"><path d="M5 0.5H12L15.5 4V15.5H5Z" fill="#fff" stroke="#b0b0b0" stroke-width="0.8"/><path d="M8 5H14M8 7.5H14M8 10H14M8 12.5H14" stroke="#9a9a9a" stroke-width="0.8"/><path d="M0.5 4L8 3V13L0.5 12Z" fill="#2b579a"/><text x="4.2" y="10.3" font-family="Liberation Sans,sans-serif" font-weight="bold" font-size="6" fill="#fff" text-anchor="middle">W</text></svg><div style="position:absolute;left:182px;top:142px;width:30px;height:22px;background:#e8e8e8;box-shadow:inset 0 0 0 1px #dcdcdc"></div><div style="position:absolute;left:186px;top:143px;font:bold 7px/6px 'DejaVu Sans',sans-serif;color:#2a2aa8;white-space:nowrap">алг<br>нач<br>кон</div><svg style="position:absolute;left:186px;top:165px" width="16" height="16" viewBox="0 0 16 16"><path d="M5 0.5H12L15.5 4V15.5H5Z" fill="#fff" stroke="#b0b0b0" stroke-width="0.8"/><path d="M8 5H14M8 7.5H14M8 10H14M8 12.5H14" stroke="#9a9a9a" stroke-width="0.8"/><rect x="0.7" y="3.7" width="8.6" height="8.6" fill="#fff" stroke="#2b579a" stroke-width="1.4"/><text x="5" y="10.5" font-family="Liberation Sans,sans-serif" font-weight="bold" font-style="italic" font-size="7" fill="#2b579a" text-anchor="middle">W</text></svg><div style="position:absolute;left:22px;top:539px;font-size:12px;line-height:16px;color:#1e3c6e;white-space:nowrap;letter-spacing:-0.267px;">Элементов: 3</div><div style="position:absolute;left:104px;top:538px;width:1px;height:16px;background:#e2e2e2;"></div><div style="position:absolute;left:115px;top:539px;font-size:12px;line-height:16px;color:#1e3c6e;white-space:nowrap;letter-spacing:-0.025px;">Выбран 1 элемент</div><div style="position:absolute;left:1091px;top:535px;width:22px;height:22px;background:#cce8ff;box-shadow:inset 0 0 0 1px #4a9be0"></div><svg style="position:absolute;left:1095px;top:539px" width="15" height="15" viewBox="0 0 15 15"><path d="M5 2.5H14M5 7.5H14M5 12.5H14" stroke="#444" stroke-width="1" stroke-dasharray="3 1"/><rect x="0.5" y="0.5" width="3" height="3.5" fill="#fff" stroke="#4a78b0" stroke-width="0.8"/><rect x="0.5" y="5.5" width="3" height="3.5" fill="#fff" stroke="#c04a3a" stroke-width="0.8"/><rect x="0.5" y="10.5" width="3" height="3.5" fill="#fff" stroke="#4a78b0" stroke-width="0.8"/></svg><svg style="position:absolute;left:1117px;top:540px" width="14" height="11" viewBox="0 0 14 11"><rect x="0.5" y="0.5" width="13" height="10" fill="#fff" stroke="#666"/><rect x="2" y="2" width="10" height="7" fill="#3a72b8"/><path d="M2 9L5 5.5L8 8L10 6.5L12 9Z" fill="#2e5a2e"/></svg></div>
<div id="kumir" style="position:absolute;left:875px;top:76px;width:663px;height:1010px;background:#5a5a5a;overflow:hidden"><div style="position:absolute;left:1px;top:1px;width:662px;height:1010px;background:#b4b4b4;"></div><div style="position:absolute;left:8px;top:1px;width:647px;height:31px;background:#808080;"></div><div style="position:absolute;left:8px;top:32px;width:647px;height:1010px;background:#d4d0c8;"></div><svg style="position:absolute;left:16px;top:8px" width="16" height="16" viewBox="0 0 16 16"><rect x="0.5" y="0.5" width="15" height="15" rx="3" fill="#1c1c7c" stroke="#e4e4f0"/><text x="8" y="12.5" font-family="Liberation Sans,sans-serif" font-weight="bold" font-size="12" fill="#f5e050" text-anchor="middle">K</text></svg><div style="position:absolute;left:37px;top:9px;font-size:12px;line-height:16px;color:#a2a2a2;white-space:nowrap;letter-spacing:0.195px;">1kumir.kum - Кумир</div><div style="position:absolute;left:516px;top:1px;width:1px;height:31px;background:#767676;"></div><div style="position:absolute;left:563px;top:1px;width:1px;height:31px;background:#767676;"></div><div style="position:absolute;left:609px;top:1px;width:1px;height:31px;background:#767676;"></div><div style="position:absolute;left:516px;top:31px;width:139px;height:1px;background:#767676;"></div><div style="position:absolute;left:535px;top:17px;width:10px;height:3px;background:#5c5c5c;"></div><div style="position:absolute;left:582px;top:12px;width:6px;height:4px;border:2px solid #5c5c5c"></div><div style="position:absolute;left:609px;top:6px;font-size:15px;line-height:18px;color:#5c5c5c;white-space:nowrap;font-weight:bold;width:46px;text-align:center;">x</div><div style="position:absolute;left:14px;top:34px;font-size:12px;line-height:16px;color:#707070;white-space:nowrap;letter-spacing:0.237px;">Программа</div><div style="position:absolute;left:91px;top:34px;font-size:12px;line-height:16px;color:#707070;white-space:nowrap;letter-spacing:-0.172px;">Редактирование</div><div style="position:absolute;left:192px;top:34px;font-size:12px;line-height:16px;color:#707070;white-space:nowrap;letter-spacing:-0.372px;">Вставка</div><div style="position:absolute;left:246px;top:34px;font-size:12px;line-height:16px;color:#707070;white-space:nowrap;letter-spacing:0.016px;">Выполнение</div><div style="position:absolute;left:328px;top:34px;font-size:12px;line-height:16px;color:#707070;white-space:nowrap;letter-spacing:0.107px;">Инструменты</div><div style="position:absolute;left:416px;top:34px;font-size:12px;line-height:16px;color:#707070;white-space:nowrap;letter-spacing:0.014px;">Робот</div><div style="position:absolute;left:462px;top:34px;font-size:12px;line-height:16px;color:#707070;white-space:nowrap;letter-spacing:0.046px;">Чертежник</div><div style="position:absolute;left:534px;top:34px;font-size:12px;line-height:16px;color:#707070;white-space:nowrap;letter-spacing:0.05px;">Инфо</div><div style="position:absolute;left:578px;top:34px;font-size:12px;line-height:16px;color:#707070;white-space:nowrap;letter-spacing:0.5px;">Миры</div><div style="position:absolute;left:8px;top:51px;width:647px;height:1px;background:#808080;"></div><div style="position:absolute;left:8px;top:52px;width:647px;height:1px;background:#fff;"></div><svg style="position:absolute;left:14px;top:57px" width="20" height="21" viewBox="0 0 20 21"><path d="M0 1.5Q0 0 1.5 0H18.5Q20 0 20 1.5V21H1.5Q0 21 0 19.5Z" fill="#2e2e2e"/><rect x="5" y="0.5" width="10" height="6.5" fill="#d8d8d8"/><rect x="11.5" y="1.5" width="2" height="4" fill="#2e2e2e"/><rect x="2.5" y="9.5" width="15" height="11" fill="#e9e9e9"/><path d="M4 12H16M4 14.5H16M4 17H16" stroke="#555" stroke-width="1"/></svg><div style="position:absolute;left:40px;top:52px;width:1px;height:31px;background:#808080;"></div><div style="position:absolute;left:41px;top:52px;width:1px;height:31px;background:#fff;"></div><svg style="position:absolute;left:45px;top:57px" width="24" height="22" viewBox="0 0 24 22"><path d="M6 1L14 13M18 1L10 13" stroke="#6a6a68" stroke-width="2.2" stroke-linecap="round" fill="none"/><ellipse cx="5.5" cy="17" rx="3.6" ry="2.6" transform="rotate(-35 5.5 17)" fill="none" stroke="#9a9892" stroke-width="1.6"/><ellipse cx="18.5" cy="17" rx="3.6" ry="2.6" transform="rotate(35 18.5 17)" fill="none" stroke="#9a9892" stroke-width="1.6"/><path d="M10 12L8 15M14 12L16 15" stroke="#9a9892" stroke-width="1.6"/></svg><svg style="position:absolute;left:76px;top:57px" width="21" height="22" viewBox="0 0 21 22"><path d="M5 3H20V16L15 21H5Z" fill="#ebe6dc"/><path d="M0.5 0.5H16V14L11.5 18.5H0.5Z" fill="#f6f2ea" stroke="#e2ddd2" stroke-width="0.6"/><path d="M16 14H11.5V18.5Z" fill="#dcd6ca"/></svg><svg style="position:absolute;left:105px;top:56px" width="21" height="23" viewBox="0 0 21 23"><rect x="0" y="3" width="16" height="19" rx="1.5" fill="#f0a010"/><rect x="5" y="0.5" width="6" height="4" rx="1" fill="#d8d8d8" stroke="#aaa" stroke-width="0.6"/><path d="M6 7H20.5V18L16.5 22.5H6Z" fill="#fff" stroke="#d8d4cc" stroke-width="0.5"/><path d="M20.5 18H16.5V22.5Z" fill="#e4e0d8"/></svg><div style="position:absolute;left:133px;top:55px;width:1px;height:25px;background:#808080;"></div><div style="position:absolute;left:134px;top:55px;width:1px;height:25px;background:#fff;"></div><svg style="position:absolute;left:138px;top:59px" width="23" height="19" viewBox="0 0 23 19"><path d="M1 1V9H9L6 6.2Q11 2.5 15 6Q18 9.5 14 14Q12 16 9.5 16.5Q16 18.5 20 13Q24 6 17 2Q10 -1.5 4 3.5Z" fill="#bebab2" stroke="#b0aca4" stroke-width="0.6"/></svg><svg style="position:absolute;left:168px;top:59px" width="23" height="19" viewBox="0 0 23 19"><path d="M22 1V9H14L17 6.2Q12 2.5 8 6Q5 9.5 9 14Q11 16 13.5 16.5Q7 18.5 3 13Q-1 6 6 2Q13 -1.5 19 3.5Z" fill="#b4b0a8" stroke="#a8a49c" stroke-width="0.6"/></svg><div style="position:absolute;left:197px;top:55px;width:1px;height:25px;background:#808080;"></div><div style="position:absolute;left:198px;top:55px;width:1px;height:25px;background:#fff;"></div><svg style="position:absolute;left:205px;top:57px" width="18" height="22" viewBox="0 0 18 22"><rect x="0.5" y="0.5" width="17" height="20" rx="1.5" fill="#fff" stroke="#c4c0b8"/><path d="M3 4.5H15M3 7.5H15M10 10.5H15M10 13.5H15M10 16.5H15" stroke="#333" stroke-width="1"/><path d="M2 13.5H8M5.5 10.8L8.2 13.5L5.5 16.2" stroke="#3c84d8" stroke-width="1.6" fill="none"/></svg><svg style="position:absolute;left:234px;top:57px" width="18" height="22" viewBox="0 0 18 22"><rect x="0.5" y="0.5" width="17" height="20" rx="1.5" fill="#fff" stroke="#c4c0b8"/><path d="M3 4.5H15M3 7.5H15M3 10.5H8M3 13.5H8M3 16.5H8" stroke="#333" stroke-width="1"/><path d="M16 13.5H10M12.5 10.8L9.8 13.5L12.5 16.2" stroke="#3c84d8" stroke-width="1.6" fill="none"/></svg><div style="position:absolute;left:259px;top:52px;width:1px;height:31px;background:#808080;"></div><div style="position:absolute;left:260px;top:52px;width:1px;height:31px;background:#fff;"></div><div style="position:absolute;left:265px;top:55px;width:1px;height:25px;background:#fff;"></div><div style="position:absolute;left:266px;top:55px;width:1px;height:25px;background:#808080;"></div><div style="position:absolute;left:268px;top:54px;width:29px;height:27px;background:#dfdcd5;box-shadow:inset 1px 1px 0 #fff,inset -1px -1px 0 #808080"></div><svg style="position:absolute;left:271px;top:57px" width="21" height="22" viewBox="0 0 21 22"><path d="M9.5 3.5h6.5l3 3v12h-9.5z" fill="#fff" stroke="#111"/><path d="M11 8H17M11 10.5H17M11 13H17M11 15.5H17" stroke="#111" stroke-width="1"/><rect x="7" y="7" width="6" height="5" fill="#fff"/><path d="M1.5 1V6Q1.5 9.5 5 9.5H8" stroke="#b00000" stroke-width="2" fill="none"/><path d="M6.5 6L10.5 9.5L6.5 13Z" fill="#b00000"/></svg><svg style="position:absolute;left:301px;top:57px" width="21" height="22" viewBox="0 0 21 22"><path d="M9.5 2.5h6.5l3 3v13h-9.5z" fill="#fff" stroke="#111"/><path d="M11.5 7H17M11.5 9.5H17M11.5 12H17M11.5 14.5H17M11.5 17H17" stroke="#111" stroke-width="1"/><path d="M4 2V16" stroke="#a00000" stroke-width="2"/><path d="M0.5 14L4 19.5L7.5 14Z" fill="#a00000"/></svg><svg style="position:absolute;left:331px;top:55px" width="22" height="26" viewBox="0 0 22 26"><path d="M4 10Q10 1 17 8" stroke="#a00000" stroke-width="2" fill="none"/><path d="M13.5 8.5L19 10.5L18.5 4.5Z" fill="#a00000"/><text x="10.5" y="19.6" font-family="Liberation Mono,monospace" font-weight="bold" font-size="11.5" text-anchor="middle" fill="#000">{}</text></svg><svg style="position:absolute;left:357px;top:55px" width="22" height="26" viewBox="0 0 22 26"><path d="M5 4Q12 2 12.5 9" stroke="#a00000" stroke-width="2" fill="none"/><path d="M9 8L12.8 13L16 7.5Z" fill="#a00000"/><text x="11.5" y="20" font-family="Liberation Mono,monospace" font-weight="bold" font-size="11.5" text-anchor="middle" fill="#000">{}</text></svg><svg style="position:absolute;left:387px;top:55px" width="22" height="26" viewBox="0 0 22 26"><path d="M10 20V9Q10 5 15 5" stroke="#6e6e6e" stroke-width="2" fill="none"/><path d="M14 1.5L19 5L14 8.5Z" fill="#6e6e6e"/><text x="10.5" y="19.6" font-family="Liberation Mono,monospace" font-size="11.5" text-anchor="middle" fill="#6e6e6e">{}</text></svg><svg style="position:absolute;left:417px;top:58px" width="20" height="20" viewBox="0 0 20 20"><path d="M6 0.5H14L19.5 6V14L14 19.5H6L0.5 14V6Z" fill="#a6a4a0" stroke="#8e8c88"/><path d="M6 6L14 14M14 6L6 14" stroke="#f4f4f2" stroke-width="3" stroke-linecap="round"/></svg><div style="position:absolute;left:445px;top:55px;width:1px;height:25px;background:#808080;"></div><div style="position:absolute;left:446px;top:55px;width:1px;height:25px;background:#fff;"></div><div style="position:absolute;left:449px;top:52px;width:1px;height:31px;background:#808080;"></div><div style="position:absolute;left:450px;top:52px;width:1px;height:31px;background:#fff;"></div><svg style="position:absolute;left:455px;top:57px" width="22" height="22" viewBox="0 0 22 22"><rect x="1" y="1" width="20" height="20" fill="#007800" stroke="#ffff00" stroke-width="2"/><path d="M8 1V21M14.5 1V21M1 8H21M1 14.5H21" stroke="#ffff00" stroke-width="1.3"/><rect x="2.5" y="2.5" width="4" height="4" fill="#c8c8d8"/></svg><svg style="position:absolute;left:484px;top:57px" width="22" height="22" viewBox="0 0 22 22"><rect x="1" y="1" width="20" height="20" fill="#007800" stroke="#ffff00" stroke-width="2"/><path d="M5.5 21V5H16.5V21" stroke="#ffff00" stroke-width="3" fill="none"/></svg><svg style="position:absolute;left:513px;top:57px" width="22" height="22" viewBox="0 0 22 22"><rect x="1" y="1" width="20" height="20" fill="#007800" stroke="#ffff00" stroke-width="2"/><path d="M9.5 20V3M2 11.5H19" stroke="#ffff00" stroke-width="1.2" fill="none"/><path d="M7.8 4.5L9.5 1.5L11.2 4.5ZM17.5 9.8L20.5 11.5L17.5 13.2Z" fill="#ffff00"/></svg><div style="position:absolute;left:8px;top:83px;width:647px;height:1px;background:#8a8a86;"></div><div style="position:absolute;left:8px;top:84px;width:647px;height:771px;background:#fff;"></div><div style="position:absolute;left:10px;top:86px;width:645px;height:769px;background:#404040;box-shadow:inset 1px 1px 0 #808080"></div><div style="position:absolute;left:12px;top:88px;width:472px;height:765.5px;background:#fff;"></div><div style="position:absolute;left:12px;top:88px;width:43px;height:746px;background:#cfdccf;"></div><div style="position:absolute;left:12px;top:834px;width:472px;height:17.6px;background:#d4d0c8;"></div><div style="position:absolute;left:484px;top:86px;width:6.2px;height:769px;background:#d4d0c8;box-shadow:inset 1px 0 0 #f0eee9"></div><div style="position:absolute;left:492px;top:88px;width:161.2px;height:765.5px;background:#fff;"></div><div style="position:absolute;left:492px;top:834px;width:160px;height:17.6px;background:#d4d0c8;"></div><div style="position:absolute;left:11px;top:91px;font-size:11.5px;line-height:19px;color:#000;white-space:nowrap;width:35.5px;text-align:right;">1</div><div style="position:absolute;left:59px;top:94px;font:bold 15px/19px 'Liberation Mono',monospace;white-space:pre"><span style="color:#000">использовать </span><span style="color:#00a000">Робот</span></div><div style="position:absolute;left:11px;top:110px;font-size:11.5px;line-height:19px;color:#000;white-space:nowrap;width:35.5px;text-align:right;">2</div><div style="position:absolute;left:59px;top:113px;font:bold 15px/19px 'Liberation Mono',monospace;white-space:pre"><span style="color:#000">алг</span></div><div style="position:absolute;left:11px;top:129px;font-size:11.5px;line-height:19px;color:#000;white-space:nowrap;width:35.5px;text-align:right;">3</div><div style="position:absolute;left:59px;top:132px;font:bold 15px/19px 'Liberation Mono',monospace;white-space:pre"><span style="color:#000">нач</span></div><div style="position:absolute;left:11px;top:148px;font-size:11.5px;line-height:19px;color:#000;white-space:nowrap;width:35.5px;text-align:right;">4</div><div style="position:absolute;left:59px;top:151px;font:bold 15px/19px 'Liberation Mono',monospace;white-space:pre"><span style="display:inline-block;width:18px;height:19px;vertical-align:top;position:relative"><span style="position:absolute;left:0;top:6px;width:4px;height:3px;background:#000"></span></span><span style="color:#000">нц </span><span style="color:#0a96ff">10</span><span style="color:#000"> раз</span></div><div style="position:absolute;left:496px;top:151px;font:15px/19px 'Liberation Mono',monospace;white-space:pre;color:#000">10 раз</div><div style="position:absolute;left:11px;top:167px;font-size:11.5px;line-height:19px;color:#000;white-space:nowrap;width:35.5px;text-align:right;">5</div><div style="position:absolute;left:59px;top:170px;font:bold 15px/19px 'Liberation Mono',monospace;white-space:pre"><span style="display:inline-block;width:18px;height:19px;vertical-align:top;position:relative"><span style="position:absolute;left:0;top:6px;width:4px;height:3px;background:#000"></span></span><span style="display:inline-block;width:18px;height:19px;vertical-align:top;position:relative"><span style="position:absolute;left:0;top:6px;width:4px;height:3px;background:#000"></span></span><span style="color:#0000c8">вправо</span></div><div style="position:absolute;left:11px;top:186px;font-size:11.5px;line-height:19px;color:#000;white-space:nowrap;width:35.5px;text-align:right;">6</div><div style="position:absolute;left:59px;top:189px;font:bold 15px/19px 'Liberation Mono',monospace;white-space:pre"><span style="display:inline-block;width:18px;height:19px;vertical-align:top;position:relative"><span style="position:absolute;left:0;top:6px;width:4px;height:3px;background:#000"></span></span><span style="display:inline-block;width:18px;height:19px;vertical-align:top;position:relative"><span style="position:absolute;left:0;top:6px;width:4px;height:3px;background:#000"></span></span><span style="color:#0000c8">закрасить</span></div><div style="position:absolute;left:11px;top:205px;font-size:11.5px;line-height:19px;color:#000;white-space:nowrap;width:35.5px;text-align:right;">7</div><div style="position:absolute;left:59px;top:208px;font:bold 15px/19px 'Liberation Mono',monospace;white-space:pre"><span style="display:inline-block;width:18px;height:19px;vertical-align:top;position:relative"><span style="position:absolute;left:0;top:6px;width:4px;height:3px;background:#000"></span></span><span style="color:#000">кц</span></div><div style="position:absolute;left:11px;top:224px;font-size:11.5px;line-height:19px;color:#000;white-space:nowrap;width:35.5px;text-align:right;">8</div><div style="position:absolute;left:59px;top:227px;font:bold 15px/19px 'Liberation Mono',monospace;white-space:pre"><span style="display:inline-block;width:18px;height:19px;vertical-align:top;position:relative"><span style="position:absolute;left:0;top:6px;width:4px;height:3px;background:#000"></span></span><span style="color:#000">если </span><span style="color:#0000c8">сверху стена</span></div><div style="position:absolute;left:496px;top:227px;font:15px/19px 'Liberation Mono',monospace;white-space:pre;color:#000">да</div><div style="position:absolute;left:11px;top:243px;font-size:11.5px;line-height:19px;color:#000;white-space:nowrap;width:35.5px;text-align:right;">9</div><div style="position:absolute;left:59px;top:246px;font:bold 15px/19px 'Liberation Mono',monospace;white-space:pre"><span style="display:inline-block;width:18px;height:19px;vertical-align:top;position:relative"><span style="position:absolute;left:0;top:6px;width:4px;height:3px;background:#000"></span></span><span style="display:inline-block;width:18px;height:19px;vertical-align:top;position:relative"><span style="position:absolute;left:0;top:6px;width:4px;height:3px;background:#000"></span></span><span style="color:#000">то нц </span><span style="color:#0a96ff">7</span><span style="color:#000"> раз</span></div><div style="position:absolute;left:496px;top:246px;font:15px/19px 'Liberation Mono',monospace;white-space:pre;color:#000">7 раз</div><div style="position:absolute;left:11px;top:262px;font-size:11.5px;line-height:19px;color:#000;white-space:nowrap;width:35.5px;text-align:right;">10</div><div style="position:absolute;left:59px;top:265px;font:bold 15px/19px 'Liberation Mono',monospace;white-space:pre"><span style="display:inline-block;width:18px;height:19px;vertical-align:top;position:relative"><span style="position:absolute;left:0;top:6px;width:4px;height:3px;background:#000"></span></span><span style="display:inline-block;width:18px;height:19px;vertical-align:top;position:relative"><span style="position:absolute;left:0;top:6px;width:4px;height:3px;background:#000"></span></span><span style="display:inline-block;width:18px;height:19px;vertical-align:top;position:relative"><span style="position:absolute;left:0;top:6px;width:4px;height:3px;background:#000"></span></span><span style="display:inline-block;width:18px;height:19px;vertical-align:top;position:relative"><span style="position:absolute;left:0;top:6px;width:4px;height:3px;background:#000"></span></span><span style="color:#0000c8">вниз</span></div><div style="position:absolute;left:11px;top:281px;font-size:11.5px;line-height:19px;color:#000;white-space:nowrap;width:35.5px;text-align:right;">11</div><div style="position:absolute;left:59px;top:284px;font:bold 15px/19px 'Liberation Mono',monospace;white-space:pre"><span style="display:inline-block;width:18px;height:19px;vertical-align:top;position:relative"><span style="position:absolute;left:0;top:6px;width:4px;height:3px;background:#000"></span></span><span style="display:inline-block;width:18px;height:19px;vertical-align:top;position:relative"><span style="position:absolute;left:0;top:6px;width:4px;height:3px;background:#000"></span></span><span style="display:inline-block;width:18px;height:19px;vertical-align:top;position:relative"><span style="position:absolute;left:0;top:6px;width:4px;height:3px;background:#000"></span></span><span style="display:inline-block;width:18px;height:19px;vertical-align:top;position:relative"><span style="position:absolute;left:0;top:6px;width:4px;height:3px;background:#000"></span></span><span style="color:#0000c8">закрасить</span></div><div style="position:absolute;left:11px;top:300px;font-size:11.5px;line-height:19px;color:#000;white-space:nowrap;width:35.5px;text-align:right;">12</div><div style="position:absolute;left:59px;top:303px;font:bold 15px/19px 'Liberation Mono',monospace;white-space:pre"><span style="display:inline-block;width:18px;height:19px;vertical-align:top;position:relative"><span style="position:absolute;left:0;top:6px;width:4px;height:3px;background:#000"></span></span><span style="display:inline-block;width:18px;height:19px;vertical-align:top;position:relative"><span style="position:absolute;left:0;top:6px;width:4px;height:3px;background:#000"></span></span><span style="display:inline-block;width:18px;height:19px;vertical-align:top;position:relative"><span style="position:absolute;left:0;top:6px;width:4px;height:3px;background:#000"></span></span><span style="color:#000">кц</span></div><div style="position:absolute;left:11px;top:319px;font-size:11.5px;line-height:19px;color:#000;white-space:nowrap;width:35.5px;text-align:right;">13</div><div style="position:absolute;left:59px;top:322px;font:bold 15px/19px 'Liberation Mono',monospace;white-space:pre"><span style="display:inline-block;width:18px;height:19px;vertical-align:top;position:relative"><span style="position:absolute;left:0;top:6px;width:4px;height:3px;background:#000"></span></span><span style="color:#000">все</span></div><div style="position:absolute;left:11px;top:338px;font-size:11.5px;line-height:19px;color:#000;white-space:nowrap;width:35.5px;text-align:right;">14</div><div style="position:absolute;left:59px;top:341px;font:bold 15px/19px 'Liberation Mono',monospace;white-space:pre"><span style="display:inline-block;width:18px;height:19px;vertical-align:top;position:relative"><span style="position:absolute;left:0;top:6px;width:4px;height:3px;background:#000"></span></span><span style="color:#000">если </span><span style="color:#0000c8">снизу стена</span></div><div style="position:absolute;left:496px;top:341px;font:15px/19px 'Liberation Mono',monospace;white-space:pre;color:#000">да</div><div style="position:absolute;left:11px;top:357px;font-size:11.5px;line-height:19px;color:#000;white-space:nowrap;width:35.5px;text-align:right;">15</div><div style="position:absolute;left:59px;top:360px;font:bold 15px/19px 'Liberation Mono',monospace;white-space:pre"><span style="display:inline-block;width:18px;height:19px;vertical-align:top;position:relative"><span style="position:absolute;left:0;top:6px;width:4px;height:3px;background:#000"></span></span><span style="display:inline-block;width:18px;height:19px;vertical-align:top;position:relative"><span style="position:absolute;left:0;top:6px;width:4px;height:3px;background:#000"></span></span><span style="color:#000">то нц </span><span style="color:#0a96ff">9</span><span style="color:#000"> раз</span></div><div style="position:absolute;left:496px;top:360px;font:15px/19px 'Liberation Mono',monospace;white-space:pre;color:#000">9 раз</div><div style="position:absolute;left:11px;top:376px;font-size:11.5px;line-height:19px;color:#000;white-space:nowrap;width:35.5px;text-align:right;">16</div><div style="position:absolute;left:59px;top:379px;font:bold 15px/19px 'Liberation Mono',monospace;white-space:pre"><span style="display:inline-block;width:18px;height:19px;vertical-align:top;position:relative"><span style="position:absolute;left:0;top:6px;width:4px;height:3px;background:#000"></span></span><span style="display:inline-block;width:18px;height:19px;vertical-align:top;position:relative"><span style="position:absolute;left:0;top:6px;width:4px;height:3px;background:#000"></span></span><span style="display:inline-block;width:18px;height:19px;vertical-align:top;position:relative"><span style="position:absolute;left:0;top:6px;width:4px;height:3px;background:#000"></span></span><span style="display:inline-block;width:18px;height:19px;vertical-align:top;position:relative"><span style="position:absolute;left:0;top:6px;width:4px;height:3px;background:#000"></span></span><span style="color:#0000c8">влево</span></div><div style="position:absolute;left:11px;top:395px;font-size:11.5px;line-height:19px;color:#000;white-space:nowrap;width:35.5px;text-align:right;">17</div><div style="position:absolute;left:59px;top:398px;font:bold 15px/19px 'Liberation Mono',monospace;white-space:pre"><span style="display:inline-block;width:18px;height:19px;vertical-align:top;position:relative"><span style="position:absolute;left:0;top:6px;width:4px;height:3px;background:#000"></span></span><span style="display:inline-block;width:18px;height:19px;vertical-align:top;position:relative"><span style="position:absolute;left:0;top:6px;width:4px;height:3px;background:#000"></span></span><span style="display:inline-block;width:18px;height:19px;vertical-align:top;position:relative"><span style="position:absolute;left:0;top:6px;width:4px;height:3px;background:#000"></span></span><span style="display:inline-block;width:18px;height:19px;vertical-align:top;position:relative"><span style="position:absolute;left:0;top:6px;width:4px;height:3px;background:#000"></span></span><span style="color:#0000c8">закрасить</span></div><div style="position:absolute;left:11px;top:414px;font-size:11.5px;line-height:19px;color:#000;white-space:nowrap;width:35.5px;text-align:right;">18</div><div style="position:absolute;left:59px;top:417px;font:bold 15px/19px 'Liberation Mono',monospace;white-space:pre"><span style="display:inline-block;width:18px;height:19px;vertical-align:top;position:relative"><span style="position:absolute;left:0;top:6px;width:4px;height:3px;background:#000"></span></span><span style="display:inline-block;width:18px;height:19px;vertical-align:top;position:relative"><span style="position:absolute;left:0;top:6px;width:4px;height:3px;background:#000"></span></span><span style="display:inline-block;width:18px;height:19px;vertical-align:top;position:relative"><span style="position:absolute;left:0;top:6px;width:4px;height:3px;background:#000"></span></span><span style="color:#000">кц</span></div><div style="position:absolute;left:11px;top:433px;font-size:11.5px;line-height:19px;color:#000;white-space:nowrap;width:35.5px;text-align:right;">19</div><div style="position:absolute;left:59px;top:436px;font:bold 15px/19px 'Liberation Mono',monospace;white-space:pre"><span style="display:inline-block;width:18px;height:19px;vertical-align:top;position:relative"><span style="position:absolute;left:0;top:6px;width:4px;height:3px;background:#000"></span></span><span style="color:#000">все</span></div><div style="position:absolute;left:11px;top:452px;font-size:11.5px;line-height:19px;color:#000;white-space:nowrap;width:35.5px;text-align:right;">20</div><div style="position:absolute;left:59px;top:455px;font:bold 15px/19px 'Liberation Mono',monospace;white-space:pre"><span style="color:#000">кон</span></div><div style="position:absolute;left:11px;top:471px;font-size:11.5px;line-height:19px;color:#000;white-space:nowrap;width:35.5px;text-align:right;">21</div><div style="position:absolute;left:8px;top:859px;width:647px;height:200px;background:#fff;box-shadow:inset 1px 1px 0 #808080,inset 2px 2px 0 #404040"></div><div style="position:absolute;left:652.3px;top:861px;width:0.8px;height:200px;background:#404040;"></div><div style="position:absolute;left:636.5999999999999px;top:861.4px;width:15.7px;height:200px;background:#d4d0c8;background-image:repeating-conic-gradient(#fff 0 25%,#d4d0c8 0 50%);background-size:2px 2px"></div><div style="position:absolute;left:636.5999999999999px;top:861.4px;width:15.7px;height:16px;background:#d4d0c8;box-shadow:inset 1px 1px 0 #fff,inset -1px -1px 0 #404040,inset -2px -2px 0 #808080"></div><svg style="position:absolute;left:640px;top:867px" width="9" height="6"><path d="M0 5.5L4.5 1L9 5.5Z" fill="#000"/></svg><div style="position:absolute;left:15px;top:867px;font:15px/19px 'Liberation Mono',monospace;white-space:pre;color:#808080">&gt;&gt; 22:10:27 - 1<i>kumir.kum</i> - Выполнение начато</div><div style="position:absolute;left:15px;top:886px;font:15px/19px 'Liberation Mono',monospace;white-space:pre;color:#808080">&gt;&gt; 22:10:29 - 1<i>kumir.kum</i> - Выполнение завершено</div><div style="position:absolute;left:10px;top:902px;width:626.6px;height:1.2px;background:#000;"></div></div>
<div id="robot" style="position:absolute;left:129px;top:332px;width:503px;height:376px;background:#3c3c3c"><div style="position:absolute;left:1px;top:1px;width:501px;height:374px;background:#808080"></div><svg style="position:absolute;left:16px;top:7px" width="17" height="17" viewBox="0 0 17 17"><rect x="0.5" y="0.5" width="16" height="16" rx="3" fill="#14147a" stroke="#e8e8f4" stroke-width="1"/><path d="M3.5 14V7.5a5 5 0 0 1 10 0V14z" fill="#f5e050"/><circle cx="6.5" cy="7" r="1.2" fill="#14147a"/><circle cx="10.5" cy="7" r="1.2" fill="#14147a"/><path d="M5.5 10.2q3 2.4 6 0" stroke="#14147a" stroke-width="1" fill="none"/></svg><div style="position:absolute;left:37px;top:8px;font-size:12px;line-height:16px;color:#fff;white-space:nowrap;letter-spacing:-0.17px">Робот - 1задание.fil</div><div style="position:absolute;left:357px;top:1px;width:46px;height:29px;background:#808080;box-shadow:inset 1px 0 0 #6a6a6a,inset 0 -1px 0 #6a6a6a"><div style="position:absolute;left:18px;top:15px;width:10px;height:3px;background:#000"></div></div><div style="position:absolute;left:403px;top:1px;width:46px;height:29px;background:#808080;box-shadow:inset 1px 0 0 #6a6a6a,inset 0 -1px 0 #6a6a6a"><div style="position:absolute;left:19px;top:10px;width:6px;height:4px;border:2px solid #000"></div></div><div style="position:absolute;left:449px;top:1px;width:47px;height:29px;background:#c75c52;box-shadow:inset 1px 0 0 #6a6a6a,inset 0 -1px 0 #6a6a6a"><div style="position:absolute;left:0;top:4px;width:47px;text-align:center;font:bold 15px/18px 'Liberation Sans',sans-serif;color:#000">x</div></div><div style="position:absolute;left:8px;top:31px;width:487px;height:337px;background:#fff;box-shadow:inset 1px 1px 0 #dcd8d0, inset -2px -2px 0 #fff, inset 3px 3px 0 #6a6a6a"></div><svg style="position:absolute;left:11px;top:34px" width="481" height="331" viewBox="140 366 481 331" shape-rendering="crispEdges"><rect x="140" y="366" width="481" height="331" fill="#2a982a"/><rect x="188" y="411" width="300" height="30" fill="#808080"/><rect x="458" y="411" width="30" height="240" fill="#808080"/><rect x="188" y="621" width="300" height="30" fill="#808080"/><path d="M158.5 366V697M188.5 366V697M218.5 366V697M248.5 366V697M278.5 366V697M308.5 366V697M338.5 366V697M368.5 366V697M398.5 366V697M428.5 366V697M458.5 366V697M488.5 366V697M518.5 366V697M548.5 366V697M578.5 366V697M608.5 366V697M140 381.5H621M140 411.5H621M140 441.5H621M140 471.5H621M140 501.5H621M140 531.5H621M140 561.5H621M140 591.5H621M140 621.5H621M140 651.5H621M140 681.5H621" stroke="#c9c900" stroke-width="1" fill="none"/><rect x="158" y="381" width="450" height="300" fill="none" stroke="#ffff00" stroke-width="4"/><path d="M187 411.5H488.5V651.5H187" fill="none" stroke="#ffff00" stroke-width="3"/></svg><svg style="position:absolute;left:63px;top:293px" width="22" height="22" viewBox="192 625 22 22"><path d="M202.5 627.5L210.5 635.5L202.5 643.5L194.5 635.5Z" fill="#d9d9d9" stroke="#111" stroke-width="1"/></svg></div>
<div id="taskbar" style="position:absolute;left:0;top:1040px;width:1920px;height:40px;background:rgba(0,0,0,0.86);overflow:hidden"><svg style="position:absolute;left:15px;top:11px" width="18" height="18" viewBox="0 0 18 18"><path d="M0 2.6L7.3 1.6V8.5H0ZM8.3 1.45L18 0V8.5H8.3ZM0 9.5H7.3V16.4L0 15.4ZM8.3 9.5H18V18L8.3 16.55Z" fill="#fff"/></svg><svg style="position:absolute;left:63px;top:11px" width="18" height="18" viewBox="0 0 18 18"><circle cx="11" cy="6.5" r="5.2" stroke="#fff" stroke-width="1.5" fill="none"/><path d="M7.3 10.3L1 17" stroke="#fff" stroke-width="1.6"/></svg><svg style="position:absolute;left:109px;top:12px" width="22" height="16" viewBox="0 0 22 16"><rect x="4.5" y="1" width="13" height="14" stroke="#fff" stroke-width="1.5" fill="none"/><path d="M2.5 3H0.8V13H2.5M19.5 3H21.2V13H19.5" stroke="#fff" stroke-width="1.4" fill="none"/></svg><svg style="position:absolute;left:158px;top:8px" width="22" height="23" viewBox="0 0 22 23"><path d="M1 11.5C1.5 4.5 6.5 1 11.5 1C17.5 1 21 5.5 21 11V13.5H7.5C7.8 17 11 18.6 14 18.6C16.5 18.6 18.6 17.8 20.2 16.8V21C18.2 22 16 22.6 13.2 22.6C6.5 22.6 2.8 18.4 2.8 13.4C2.8 9.8 4.8 7.2 7.4 5.9C4.4 6.6 2 8.8 1 11.5ZM7.6 9.8H15.4C15.3 7.2 13.9 5.4 11.6 5.4C9.4 5.4 7.9 7.2 7.6 9.8Z" fill="#0a7ad8"/></svg><svg style="position:absolute;left:206px;top:8px" width="18" height="23" viewBox="0 0 18 23"><path d="M0.5 1H15V14H17.5V22.5H0.5Z" fill="#f3d36b"/><path d="M0.5 1H4V22.5H0.5Z" fill="#f8e49a"/><path d="M9.5 0.5V22" stroke="#8a8a8a" stroke-width="2.4" stroke-dasharray="1.2 1"/><rect x="8" y="3" width="3.4" height="5" fill="#c8c8c8" stroke="#777" stroke-width="0.6"/></svg><svg style="position:absolute;left:347px;top:10px" width="15" height="20" viewBox="0 0 15 20"><path d="M0.5 1H11V12H14V17.5H0.5Z" fill="#f5d97e"/><path d="M0.5 1L4 3.5V20L0.5 17.5Z" fill="#fbe9a8"/><path d="M11 12H14V17.5H11Z" fill="#e9c75a"/></svg><svg style="position:absolute;left:489px;top:10px" width="15" height="20" viewBox="0 0 15 20"><path d="M0.5 1H11V12H14V17.5H0.5Z" fill="#f5d97e"/><path d="M0.5 1L4 3.5V20L0.5 17.5Z" fill="#fbe9a8"/><path d="M11 12H14V17.5H11Z" fill="#e9c75a"/></svg><svg style="position:absolute;left:631px;top:7px" width="22" height="24" viewBox="0 0 22 24"><path d="M6 7V5.5A5 4.5 0 0 1 16 5.5V7" stroke="#fff" stroke-width="1.4" fill="none"/><path d="M1 7.5L21 6.5V23.5L1 21Z" fill="#fff"/><path d="M5.5 11.2L10.2 10.8V14.6H5.5ZM11.3 10.7L16.5 10.3V14.6H11.3ZM5.5 15.6H10.2V19.6L5.5 19.1ZM11.3 15.6H16.5V20.2L11.3 19.7Z" fill="#000"/></svg><svg style="position:absolute;left:678px;top:11px" width="21" height="19" viewBox="0 0 21 19"><path d="M0.5 1.5L20.5 0.5V18.5L0.5 17.5Z" fill="#6fb1e4"/><path d="M2.5 3.3L18.5 2.5V16.5L2.5 15.7Z" fill="#a8d2f2"/><circle cx="9.5" cy="9.5" r="6.3" fill="#f07a1a"/><path d="M7.5 6L13 9.5L7.5 13Z" fill="#fff"/></svg><svg style="position:absolute;left:722px;top:8px" width="23" height="23" viewBox="0 0 23 23"><circle cx="11.5" cy="11.5" r="11" fill="#dd4b3e"/><path d="M11.5 11.5L2 6A11 11 0 0 0 7 21.5Z" fill="#1da362"/><path d="M11.5 11.5L7 21.5A11 11 0 0 0 22.2 9H11.5Z" fill="#ffce44"/><path d="M11.5 11.5L1.97 6A11 11 0 0 1 22.2 9H11.5Z" fill="#dd4b3e"/><circle cx="11.5" cy="11.5" r="5.2" fill="#fff"/><circle cx="11.5" cy="11.5" r="4.1" fill="#4a8af4"/></svg><div style="position:absolute;left:198px;top:38px;width:133px;height:2px;background:#76b9ed;"></div><div style="position:absolute;left:339px;top:38px;width:134px;height:2px;background:#76b9ed;"></div><div style="position:absolute;left:481px;top:38px;width:133px;height:2px;background:#76b9ed;"></div><div style="position:absolute;left:717px;top:38px;width:133px;height:2px;background:#76b9ed;"></div><div style="position:absolute;left:858px;top:38px;width:134px;height:2px;background:#76b9ed;"></div><div style="position:absolute;left:1000px;top:38px;width:133px;height:2px;background:#76b9ed;"></div><div style="position:absolute;left:1283px;top:38px;width:133px;height:2px;background:#76b9ed;"></div><div style="position:absolute;left:1424px;top:38px;width:133px;height:2px;background:#76b9ed;"></div><div style="position:absolute;left:1137px;top:0px;width:141px;height:40px;background:rgba(255,255,255,0.215);"></div><div style="position:absolute;left:1137px;top:38px;width:141px;height:2px;background:#76b9ed;"></div><svg style="position:absolute;left:864px;top:8px" width="24" height="24" viewBox="0 0 24 24"><rect x="1" y="1" width="22" height="22" rx="4.5" fill="#1c1c7c" stroke="#e4e4f0" stroke-width="1.6"/><text x="12" y="18.5" font-family="Liberation Sans,sans-serif" font-weight="bold" font-size="18" fill="#f5e050" text-anchor="middle">K</text></svg><div style="position:absolute;left:892px;top:12px;font-size:12px;line-height:16px;color:#000;white-space:nowrap;letter-spacing:0.059px;">1kumir.kum - К...</div><svg style="position:absolute;left:1005px;top:8px" width="24" height="24" viewBox="0 0 24 24"><rect x="1" y="1" width="22" height="22" rx="4.5" fill="#1c1c7c" stroke="#e4e4f0" stroke-width="1.6"/><text x="12" y="18.5" font-family="Liberation Sans,sans-serif" font-weight="bold" font-size="18" fill="#f5e050" text-anchor="middle">K</text></svg><div style="position:absolute;left:1033px;top:12px;font-size:12px;line-height:16px;color:#000;white-space:nowrap;letter-spacing:0.059px;">1kumir.kum - К...</div><svg style="position:absolute;left:1146px;top:8px" width="24" height="24" viewBox="0 0 24 24"><rect x="1" y="1" width="22" height="22" rx="4.5" fill="#14147a" stroke="#e4e4f0" stroke-width="1.6"/><path d="M4 20.5V11a8 8 0 0 1 16 0V20.5z" fill="#f5e050"/><circle cx="9.3" cy="10.5" r="1.7" fill="#14147a"/><circle cx="14.7" cy="10.5" r="1.7" fill="#14147a"/><path d="M8 14.5q4 3.4 8 0" stroke="#14147a" stroke-width="1.3" fill="none"/></svg><div style="position:absolute;left:1174px;top:12px;font-size:12px;line-height:16px;color:#000;white-space:nowrap;letter-spacing:-0.221px;">Робот - 1задан...</div><svg style="position:absolute;left:1288px;top:8px" width="24" height="24" viewBox="0 0 24 24"><path d="M9 2.5H22.5V21.5H9Z" fill="#fff"/><path d="M14 6H21M14 9H21M14 12H21M14 15H21M14 18H21" stroke="#2b579a" stroke-width="1.4"/><path d="M1 3.5L14 1V23L1 20.5Z" fill="#2b579a"/><text x="7.3" y="16.3" font-family="Liberation Sans,sans-serif" font-weight="bold" font-size="11" fill="#fff" text-anchor="middle">W</text></svg><div style="position:absolute;left:1316px;top:12px;font-size:12px;line-height:16px;color:#000;white-space:nowrap;letter-spacing:-0.414px;">Tvorcheskoe_za...</div><svg style="position:absolute;left:1429px;top:8px" width="24" height="24" viewBox="0 0 24 24"><path d="M9 2.5H22.5V21.5H9Z" fill="#fff"/><path d="M14 6H21M14 9H21M14 12H21M14 15H21M14 18H21" stroke="#2b579a" stroke-width="1.4"/><path d="M1 3.5L14 1V23L1 20.5Z" fill="#2b579a"/><text x="7.3" y="16.3" font-family="Liberation Sans,sans-serif" font-weight="bold" font-size="11" fill="#fff" text-anchor="middle">W</text></svg><div style="position:absolute;left:1457px;top:12px;font-size:12px;line-height:16px;color:#000;white-space:nowrap;letter-spacing:-0.136px;">1 задание - Wo...</div><svg style="position:absolute;left:1568px;top:11px" width="17" height="18" viewBox="0 0 17 18"><circle cx="6" cy="8" r="5.5" fill="#3a6ec8"/><path d="M3 5Q6 3 8 6Q5 8 7 11" stroke="#8ed08a" stroke-width="1.5" fill="none"/><rect x="5" y="0.5" width="8" height="4" fill="#444" stroke="#aaa" stroke-width="0.6"/><rect x="7.5" y="11" width="9" height="6" fill="#f2c84a" stroke="#fff" stroke-width="0.6"/><path d="M7.5 11L12 14.5L16.5 11" stroke="#a07a10" stroke-width="0.7" fill="none"/></svg><svg style="position:absolute;left:1592px;top:12px" width="16" height="16" viewBox="0 0 16 16"><rect x="0.5" y="0.5" width="15" height="15" rx="3" fill="#d8d8d8" stroke="#f4f4f4"/><ellipse cx="8" cy="8.5" rx="3" ry="3.8" fill="#222"/><path d="M5 6L1.5 3M11 6L14.5 3M5 8.5H1.5M11 8.5H14.5M5 11L2 13.5M11 11L14 13.5M6.5 5L5.5 2M9.5 5L10.5 2" stroke="#222" stroke-width="1"/></svg><svg style="position:absolute;left:1615px;top:15px" width="18" height="11" viewBox="0 0 18 11"><path d="M4.5 10.5H14.5A3 3 0 0 0 14.5 4.6A4.6 4.6 0 0 0 5.8 3.6A3.5 3.5 0 0 0 4.5 10.5Z" fill="#8e8e8e"/><path d="M1 10.5H5A2.6 2.6 0 0 1 4 6A3 3 0 0 0 1 10.5Z" fill="#8e8e8e"/></svg><svg style="position:absolute;left:1641px;top:11px" width="13" height="18" viewBox="0 0 13 18"><ellipse cx="6.5" cy="9" rx="6.3" ry="8.8" fill="#0a4a9e"/><path d="M3.2 5.5L9.5 11.7L6.5 14.6V3.4L9.5 6.3L3.2 12.5" stroke="#fff" stroke-width="1.3" fill="none"/></svg><svg style="position:absolute;left:1663px;top:13px" width="17" height="13" viewBox="0 0 17 13"><rect x="1.5" y="0.5" width="14" height="9.5" fill="#f08a1c" stroke="#e8e8e8" stroke-width="1"/><path d="M0 12H17" stroke="#cfcfcf" stroke-width="2"/><path d="M6.2 3.6A2.6 2.6 0 0 1 10.8 4.2M10.8 6.4A2.6 2.6 0 0 1 6.2 5.8" stroke="#fff" stroke-width="1.1" fill="none"/></svg><svg style="position:absolute;left:1689px;top:13px" width="15" height="14" viewBox="0 0 15 14"><rect x="1" y="0.5" width="13" height="9" fill="#7a7a7a" stroke="#bcbcbc" stroke-width="1"/><path d="M0 11.5H15" stroke="#bcbcbc" stroke-width="1.6"/><path d="M3 13.5H5M10 13.5H12" stroke="#9a9a9a"/></svg><svg style="position:absolute;left:1711px;top:14px" width="17" height="12" viewBox="0 0 17 12"><rect x="6" y="3" width="9.5" height="7" stroke="#fff" stroke-width="1.3" fill="none"/><rect x="15.5" y="5" width="1.5" height="3" fill="#fff"/><path d="M1 0.5V3M4 0.5V3M0 3H5V5.5Q5 7.5 2.5 7.5Q0 7.5 0 5.5ZM2.5 7.5V10.5H6" stroke="#fff" stroke-width="1" fill="none"/></svg><svg style="position:absolute;left:1738px;top:14px" width="14" height="13" viewBox="0 0 14 13"><path d="M1 12A11 11 0 0 1 12 1M4.5 12A7.5 7.5 0 0 1 12 4.5M8 12A4 4 0 0 1 12 8" stroke="#fff" stroke-width="1.5" fill="none"/><rect x="10.3" y="10.3" width="2.7" height="2.7" fill="#fff"/></svg><svg style="position:absolute;left:1759px;top:12px" width="18" height="16" viewBox="0 0 18 16"><path d="M1 5.5H4L8 1.5V14.5L4 10.5H1Z" stroke="#fff" stroke-width="1.1" fill="none"/><path d="M10.5 5.5Q12 8 10.5 10.5M12.7 3.7Q15.2 8 12.7 12.3M15 2Q18.4 8 15 14" stroke="#fff" stroke-width="1" fill="none"/></svg><svg style="position:absolute;left:1784px;top:12px" width="16" height="17" viewBox="0 0 16 17"><path d="M0.5 0.5H15.5V12H10L8 14.8L6 12H0.5Z" fill="#fff"/><path d="M3 3.5H13M3 6H13M3 8.5H9" stroke="#000" stroke-width="1"/></svg><div style="position:absolute;left:1812px;top:11px;font-size:12px;line-height:16px;color:#fff;white-space:nowrap;letter-spacing:-0.843px;">РУС</div><div style="position:absolute;left:1864px;top:3px;font-size:12px;line-height:16px;color:#fff;white-space:nowrap;letter-spacing:-0.506px;">22:10</div><div style="position:absolute;left:1850px;top:20px;font-size:12px;line-height:16px;color:#fff;white-space:nowrap;letter-spacing:-0.606px;">19.12.2015</div><div style="position:absolute;left:1915px;top:0px;width:1px;height:40px;background:#4a4a4a;"></div></div>
</div></body></html>
